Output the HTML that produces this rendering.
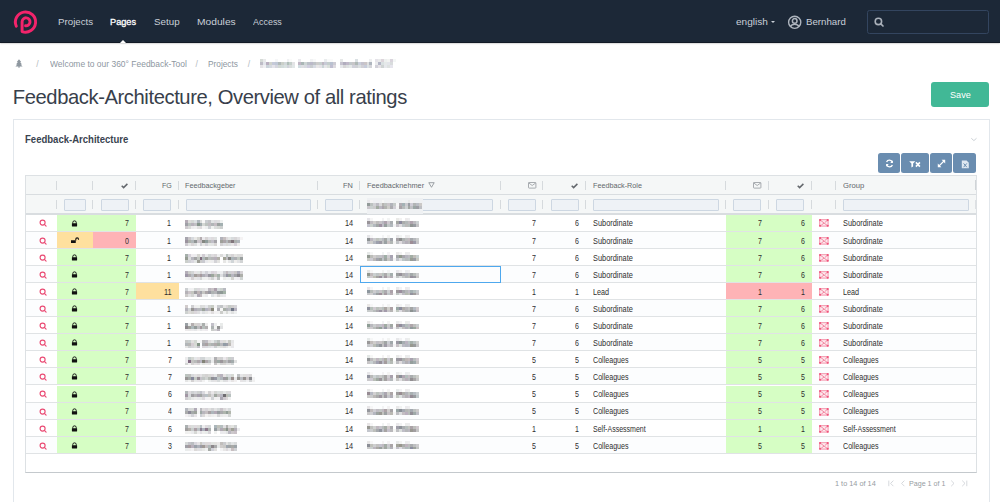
<!DOCTYPE html>
<html><head><meta charset="utf-8"><title>Feedback-Architecture</title>
<style>
*{box-sizing:border-box;margin:0;padding:0}
html,body{width:1000px;height:502px;overflow:hidden;background:#fff;font-family:"Liberation Sans",sans-serif;}
.a{position:absolute;white-space:nowrap}
.ic{position:absolute;display:block}
.fi{position:absolute;top:199.2px;height:11.4px;background:#eef2f6;border:1px solid #cdd7e2;border-radius:1px}
.sep{position:absolute;width:1px;background:#d6dadd}
.blur{filter:blur(0.85px)}
</style></head><body>

<div class="a" style="left:0;top:0;width:1000px;height:43px;background:#1c2837;border-bottom:1px solid #121a26;box-shadow:0 0.6px 1.6px rgba(0,0,0,0.28)"></div>
<svg class="ic" style="left:0;top:0" width="50" height="42" viewBox="0 0 50 42"><path d="M16.27 26.21A10.1 10.1 0 1 1 22.1 31.61L22.1 21.8A3.95 3.95 0 1 1 25.57 25.72" fill="none" stroke="#f3246b" stroke-width="2.95" stroke-linecap="round" stroke-linejoin="round"/></svg>
<div class="a" style="left:58.40px;top:17.00px;font-size:9.8px;line-height:9.8px;color:#c9cfd7;transform:scaleX(0.9927);transform-origin:0 0;">Projects</div>
<div class="a" style="left:110.24px;top:17.00px;font-size:9.8px;line-height:9.8px;color:#fff;transform:scaleX(0.9387);transform-origin:0 0;-webkit-text-stroke:0.3px #fff;">Pages</div>
<div class="a" style="left:154.06px;top:17.00px;font-size:9.8px;line-height:9.8px;color:#c9cfd7;">Setup</div>
<div class="a" style="left:196.86px;top:17.00px;font-size:9.8px;line-height:9.8px;color:#c9cfd7;transform:scaleX(1.0448);transform-origin:0 0;">Modules</div>
<div class="a" style="left:253.48px;top:17.00px;font-size:9.8px;line-height:9.8px;color:#c9cfd7;transform:scaleX(0.9131);transform-origin:0 0;">Access</div>
<div class="a" style="left:119.6px;top:39.5px;width:0;height:0;border-left:3.5px solid transparent;border-right:3.5px solid transparent;border-bottom:3.6px solid #fff"></div>
<div class="a" style="left:735.77px;top:17.00px;font-size:9.8px;line-height:9.8px;color:#c9cfd7;transform:scaleX(1.0262);transform-origin:0 0;">english</div>
<div class="a" style="left:771px;top:20.6px;width:0;height:0;border-left:2.4px solid transparent;border-right:2.4px solid transparent;border-top:2.6px solid #c9cfd7"></div>
<svg class="ic" style="left:787px;top:15px" width="15" height="15" viewBox="0 0 15 15"><circle cx="7.7" cy="7.3" r="6.1" fill="none" stroke="#aeb5be" stroke-width="1.4"/><circle cx="7.7" cy="5.9" r="2.3" fill="none" stroke="#aeb5be" stroke-width="1.5"/><path d="M3.4 11.6Q4.6 9.2 7.7 9.2Q10.8 9.2 12 11.6" fill="none" stroke="#aeb5be" stroke-width="1.5"/></svg>
<div class="a" style="left:805.90px;top:17.00px;font-size:9.8px;line-height:9.8px;color:#c9cfd7;transform:scaleX(0.9876);transform-origin:0 0;">Bernhard</div>
<div class="a" style="left:867.3px;top:9.5px;width:121.6px;height:24.2px;border:1px solid #33455f;border-radius:2.5px"></div>
<svg class="ic" style="left:873px;top:16px" width="12" height="12" viewBox="0 0 12 12"><circle cx="5.4" cy="5.4" r="3.2" fill="none" stroke="#aab1ba" stroke-width="1.6"/><path d="M7.8 7.8L10 10" stroke="#aab1ba" stroke-width="1.7" stroke-linecap="round"/></svg>
<svg class="ic" style="left:15px;top:59px" width="8" height="9" viewBox="0 0 8 9"><path d="M4 0.3L6.2 3H5.2L7 5.4H5.6L7.6 7.6H4.6V8.8H3.4V7.6H0.4L2.4 5.4H1L2.8 3H1.8Z" fill="#8e979f"/></svg>
<div class="a" style="left:36.30px;top:60.00px;font-size:8.6px;line-height:8.6px;color:#b5bbc0;">/</div>
<div class="a" style="left:49.56px;top:60.00px;font-size:8.6px;line-height:8.6px;color:#8e979f;transform:scaleX(0.9847);transform-origin:0 0;">Welcome to our 360° Feedback-Tool</div>
<div class="a" style="left:195.50px;top:60.00px;font-size:8.6px;line-height:8.6px;color:#b5bbc0;">/</div>
<div class="a" style="left:207.92px;top:60.00px;font-size:8.6px;line-height:8.6px;color:#8e979f;transform:scaleX(0.9648);transform-origin:0 0;">Projects</div>
<div class="a" style="left:247.80px;top:60.00px;font-size:8.6px;line-height:8.6px;color:#b5bbc0;">/</div>
<svg class="ic" style="left:260.00px;top:59.00px;" width="35.40" height="8.85" viewBox="0 0 35.40 8.85" shape-rendering="crispEdges"><rect x="0.0" y="0.0" width="2.95" height="2.95" fill="#d6dbd7"/><rect x="2.9" y="0.0" width="2.95" height="2.95" fill="#e9eaeb"/><rect x="14.8" y="0.0" width="2.95" height="2.95" fill="#f6f7f8"/><rect x="26.6" y="0.0" width="2.95" height="2.95" fill="#f0f1f3"/><rect x="29.5" y="0.0" width="2.95" height="2.95" fill="#fafbfa"/><rect x="0.0" y="3.0" width="2.95" height="2.95" fill="#bebdc7"/><rect x="2.9" y="3.0" width="2.95" height="2.95" fill="#e3e5eb"/><rect x="5.9" y="3.0" width="2.95" height="2.95" fill="#b8aebe"/><rect x="8.9" y="3.0" width="2.95" height="2.95" fill="#d0d3cd"/><rect x="11.8" y="3.0" width="2.95" height="2.95" fill="#c5c9d9"/><rect x="14.8" y="3.0" width="2.95" height="2.95" fill="#c0c8d6"/><rect x="17.7" y="3.0" width="2.95" height="2.95" fill="#b1b9b9"/><rect x="20.6" y="3.0" width="2.95" height="2.95" fill="#cacfc8"/><rect x="23.6" y="3.0" width="2.95" height="2.95" fill="#d1d7d9"/><rect x="26.6" y="3.0" width="2.95" height="2.95" fill="#afbeb7"/><rect x="29.5" y="3.0" width="2.95" height="2.95" fill="#c5cfcb"/><rect x="32.4" y="3.0" width="2.95" height="2.95" fill="#e3e3e5"/><rect x="0.0" y="5.9" width="2.95" height="2.95" fill="#e5e3e6"/><rect x="2.9" y="5.9" width="2.95" height="2.95" fill="#f0eff2"/><rect x="5.9" y="5.9" width="2.95" height="2.95" fill="#cbd4da"/><rect x="8.9" y="5.9" width="2.95" height="2.95" fill="#d4d9e0"/><rect x="11.8" y="5.9" width="2.95" height="2.95" fill="#e4e3e9"/><rect x="14.8" y="5.9" width="2.95" height="2.95" fill="#d5d6df"/><rect x="17.7" y="5.9" width="2.95" height="2.95" fill="#d1d8d3"/><rect x="20.6" y="5.9" width="2.95" height="2.95" fill="#d2dbdb"/><rect x="23.6" y="5.9" width="2.95" height="2.95" fill="#d8e1df"/><rect x="26.6" y="5.9" width="2.95" height="2.95" fill="#d0d2da"/><rect x="29.5" y="5.9" width="2.95" height="2.95" fill="#d9dcdc"/><rect x="32.4" y="5.9" width="2.95" height="2.95" fill="#e1e7e7"/></svg>
<svg class="ic" style="left:298.35px;top:59.00px;" width="38.35" height="8.85" viewBox="0 0 38.35 8.85" shape-rendering="crispEdges"><rect x="0.0" y="0.0" width="2.95" height="2.95" fill="#ebeaee"/><rect x="11.8" y="0.0" width="2.95" height="2.95" fill="#f1f2f3"/><rect x="14.8" y="0.0" width="2.95" height="2.95" fill="#f8f9f9"/><rect x="26.5" y="0.0" width="2.95" height="2.95" fill="#eaedee"/><rect x="29.5" y="0.0" width="2.95" height="2.95" fill="#f9fafa"/><rect x="32.4" y="0.0" width="2.95" height="2.95" fill="#fafafa"/><rect x="0.0" y="3.0" width="2.95" height="2.95" fill="#c0b5c4"/><rect x="2.9" y="3.0" width="2.95" height="2.95" fill="#aab6b6"/><rect x="5.9" y="3.0" width="2.95" height="2.95" fill="#ccd4d4"/><rect x="8.8" y="3.0" width="2.95" height="2.95" fill="#babfc7"/><rect x="11.8" y="3.0" width="2.95" height="2.95" fill="#bab9c8"/><rect x="14.8" y="3.0" width="2.95" height="2.95" fill="#bec2c6"/><rect x="17.7" y="3.0" width="2.95" height="2.95" fill="#cccccb"/><rect x="20.6" y="3.0" width="2.95" height="2.95" fill="#c7cfcd"/><rect x="23.6" y="3.0" width="2.95" height="2.95" fill="#beb7c2"/><rect x="26.5" y="3.0" width="2.95" height="2.95" fill="#c8cbd6"/><rect x="29.5" y="3.0" width="2.95" height="2.95" fill="#c3cdcc"/><rect x="32.4" y="3.0" width="2.95" height="2.95" fill="#b9c1d0"/><rect x="35.4" y="3.0" width="2.95" height="2.95" fill="#cdcbd3"/><rect x="0.0" y="5.9" width="2.95" height="2.95" fill="#d2dee2"/><rect x="2.9" y="5.9" width="2.95" height="2.95" fill="#dddde2"/><rect x="5.9" y="5.9" width="2.95" height="2.95" fill="#d7dae0"/><rect x="8.8" y="5.9" width="2.95" height="2.95" fill="#d0cedf"/><rect x="11.8" y="5.9" width="2.95" height="2.95" fill="#c9cdd0"/><rect x="14.8" y="5.9" width="2.95" height="2.95" fill="#d7dbe3"/><rect x="17.7" y="5.9" width="2.95" height="2.95" fill="#e8e7e7"/><rect x="20.6" y="5.9" width="2.95" height="2.95" fill="#e4e2e7"/><rect x="23.6" y="5.9" width="2.95" height="2.95" fill="#cad5d6"/><rect x="26.5" y="5.9" width="2.95" height="2.95" fill="#e5e6e8"/><rect x="29.5" y="5.9" width="2.95" height="2.95" fill="#dae0db"/><rect x="32.4" y="5.9" width="2.95" height="2.95" fill="#c0bed0"/><rect x="35.4" y="5.9" width="2.95" height="2.95" fill="#dedbe1"/></svg>
<svg class="ic" style="left:339.65px;top:59.00px;" width="32.45" height="8.85" viewBox="0 0 32.45 8.85" shape-rendering="crispEdges"><rect x="0.0" y="0.0" width="2.95" height="2.95" fill="#e6e8e8"/><rect x="14.8" y="0.0" width="2.95" height="2.95" fill="#dbe1e4"/><rect x="29.5" y="0.0" width="2.95" height="2.95" fill="#eeeff0"/><rect x="0.0" y="3.0" width="2.95" height="2.95" fill="#c6c3cf"/><rect x="3.0" y="3.0" width="2.95" height="2.95" fill="#b1adbe"/><rect x="5.9" y="3.0" width="2.95" height="2.95" fill="#bfb8c8"/><rect x="8.9" y="3.0" width="2.95" height="2.95" fill="#c2c8cb"/><rect x="11.8" y="3.0" width="2.95" height="2.95" fill="#c7c6c8"/><rect x="14.8" y="3.0" width="2.95" height="2.95" fill="#aeb8b5"/><rect x="17.7" y="3.0" width="2.95" height="2.95" fill="#cacfdb"/><rect x="20.7" y="3.0" width="2.95" height="2.95" fill="#c4c2cd"/><rect x="23.6" y="3.0" width="2.95" height="2.95" fill="#cac5c7"/><rect x="26.6" y="3.0" width="2.95" height="2.95" fill="#dedfe0"/><rect x="29.5" y="3.0" width="2.95" height="2.95" fill="#afb6bf"/><rect x="0.0" y="5.9" width="2.95" height="2.95" fill="#e5e7ea"/><rect x="3.0" y="5.9" width="2.95" height="2.95" fill="#d7d6d7"/><rect x="5.9" y="5.9" width="2.95" height="2.95" fill="#dde0e1"/><rect x="8.9" y="5.9" width="2.95" height="2.95" fill="#e4e8e7"/><rect x="11.8" y="5.9" width="2.95" height="2.95" fill="#d0d1da"/><rect x="14.8" y="5.9" width="2.95" height="2.95" fill="#cfd1d6"/><rect x="17.7" y="5.9" width="2.95" height="2.95" fill="#dadfdf"/><rect x="20.7" y="5.9" width="2.95" height="2.95" fill="#d1d0d6"/><rect x="23.6" y="5.9" width="2.95" height="2.95" fill="#c7ccdb"/><rect x="26.6" y="5.9" width="2.95" height="2.95" fill="#dce2e4"/><rect x="29.5" y="5.9" width="2.95" height="2.95" fill="#d5d5da"/></svg>
<svg class="ic" style="left:375.05px;top:59.00px;" width="20.65" height="8.85" viewBox="0 0 20.65 8.85" shape-rendering="crispEdges"><rect x="0.0" y="0.0" width="2.95" height="2.95" fill="#e5e3e9"/><rect x="2.9" y="0.0" width="2.95" height="2.95" fill="#eaebeb"/><rect x="5.9" y="0.0" width="2.95" height="2.95" fill="#ddd5db"/><rect x="8.8" y="0.0" width="2.95" height="2.95" fill="#edf0ef"/><rect x="11.8" y="0.0" width="2.95" height="2.95" fill="#f3f4f2"/><rect x="14.8" y="0.0" width="2.95" height="2.95" fill="#d9d4dc"/><rect x="17.7" y="0.0" width="2.95" height="2.95" fill="#f4f7f6"/><rect x="0.0" y="3.0" width="2.95" height="2.95" fill="#eaebed"/><rect x="2.9" y="3.0" width="2.95" height="2.95" fill="#b4b6c6"/><rect x="5.9" y="3.0" width="2.95" height="2.95" fill="#dae1e2"/><rect x="8.8" y="3.0" width="2.95" height="2.95" fill="#e5e9e9"/><rect x="11.8" y="3.0" width="2.95" height="2.95" fill="#e3e5ea"/><rect x="14.8" y="3.0" width="2.95" height="2.95" fill="#d9dcdd"/><rect x="0.0" y="5.9" width="2.95" height="2.95" fill="#d2d1d9"/><rect x="2.9" y="5.9" width="2.95" height="2.95" fill="#e5e2e6"/><rect x="5.9" y="5.9" width="2.95" height="2.95" fill="#cfd4d3"/><rect x="8.8" y="5.9" width="2.95" height="2.95" fill="#e6e8ec"/><rect x="11.8" y="5.9" width="2.95" height="2.95" fill="#dee2e1"/><rect x="14.8" y="5.9" width="2.95" height="2.95" fill="#e6e5ed"/></svg>
<div class="a" style="left:12.8px;top:86px;font-size:20.2px;letter-spacing:-0.41px;line-height:22px;color:#38404b">Feedback-Architecture, Overview of all ratings</div>
<div class="a" style="left:931.2px;top:82.2px;width:57.8px;height:24.4px;background:#41b896;border-radius:3px"></div>
<div class="a" style="left:949.59px;top:90.00px;font-size:9.9px;line-height:9.9px;color:#fff;transform:scaleX(0.9225);transform-origin:0 0;">Save</div>
<div class="a" style="left:12.9px;top:119px;width:977px;height:400px;border:1px solid #e2e7ec;background:#fff"></div>
<div class="a" style="left:24.96px;top:135.00px;font-size:10.0px;line-height:10.0px;color:#3a4450;font-weight:bold;transform:scaleX(0.9539);transform-origin:0 0;">Feedback-Architecture</div>
<svg class="ic" style="left:970px;top:136px" width="8" height="6" viewBox="0 0 8 6"><path d="M1.3 2.3L3.9 4.6L6.5 2.3" fill="none" stroke="#c3c9cf" stroke-width="0.85"/></svg>
<div class="a" style="left:877.9px;top:153.2px;width:22.2px;height:19.7px;background:#6a8db0;border-radius:2.5px"></div>
<div class="a" style="left:901.3px;top:153.2px;width:27.5px;height:19.7px;background:#6a8db0;border-radius:2.5px"></div>
<div class="a" style="left:930px;top:153.2px;width:21.9px;height:19.7px;background:#6a8db0;border-radius:2.5px"></div>
<div class="a" style="left:953.1px;top:153.2px;width:23px;height:19.7px;background:#6a8db0;border-radius:2.5px"></div>
<svg class="ic" style="left:884.5px;top:158.8px" width="9" height="9" viewBox="0 0 9 9"><path d="M7.3 3.4A3 3 0 0 0 1.6 3.0M1.7 5.6A3 3 0 0 0 7.4 6.0" fill="none" stroke="#fff" stroke-width="1.3"/><path d="M7.9 1.2V3.9H5.2Z M1.1 7.8V5.1H3.8Z" fill="#fff"/></svg>
<svg class="ic" style="left:909px;top:160.5px" width="12" height="7" viewBox="0 0 12 7"><path d="M0.2 0.3H6.3L4.1 2.6V5.6L2.4 6.4V2.6Z" fill="#fff"/><path d="M6.9 1.4L10.9 5.6M10.9 1.4L6.9 5.6" stroke="#fff" stroke-width="1.6"/></svg>
<svg class="ic" style="left:936.5px;top:158.5px" width="9" height="9" viewBox="0 0 9 9"><path d="M1.5 7.5L7.5 1.5" stroke="#fff" stroke-width="1.1"/><path d="M0.8 4.6V8.2H4.4Z M8.2 4.4V0.8H4.6Z" fill="#fff"/></svg>
<svg class="ic" style="left:960.5px;top:159.5px" width="9" height="9" viewBox="0 0 9 9"><path d="M0.8 0.6H5.6L7.8 2.8V8.2H0.8Z" fill="#dfe8f1"/><path d="M2.6 3.4L5.8 7.2M5.8 3.4L2.6 7.2" stroke="#6a8db0" stroke-width="1"/></svg>
<div class="a" style="left:25.1px;top:174.5px;width:951.70px;height:298.40px;border:1.1px solid #dde1e4;border-bottom:1.3px solid #c4c9cd;background:#fff"></div>
<div class="a" style="left:26.30px;top:175.70px;width:949.30px;height:37.90px;background:#f5f7f7"></div>
<div class="a" style="left:26.10px;top:193.6px;width:949.70px;height:1px;background:#d9dde0"></div>
<div class="a" style="left:26.10px;top:213.1px;width:949.70px;height:1.5px;background:#d9dde0"></div>
<div class="sep" style="left:56.1px;top:180.5px;height:9.1px"></div>
<div class="sep" style="left:56.1px;top:200px;height:9px"></div>
<div class="sep" style="left:92.1px;top:180.5px;height:9.1px"></div>
<div class="sep" style="left:92.1px;top:200px;height:9px"></div>
<div class="sep" style="left:135.1px;top:180.5px;height:9.1px"></div>
<div class="sep" style="left:135.1px;top:200px;height:9px"></div>
<div class="sep" style="left:178.1px;top:180.5px;height:9.1px"></div>
<div class="sep" style="left:178.1px;top:200px;height:9px"></div>
<div class="sep" style="left:317.1px;top:180.5px;height:9.1px"></div>
<div class="sep" style="left:317.1px;top:200px;height:9px"></div>
<div class="sep" style="left:359.1px;top:180.5px;height:9.1px"></div>
<div class="sep" style="left:359.1px;top:200px;height:9px"></div>
<div class="sep" style="left:500.1px;top:180.5px;height:9.1px"></div>
<div class="sep" style="left:500.1px;top:200px;height:9px"></div>
<div class="sep" style="left:542.1px;top:180.5px;height:9.1px"></div>
<div class="sep" style="left:542.1px;top:200px;height:9px"></div>
<div class="sep" style="left:585.1px;top:180.5px;height:9.1px"></div>
<div class="sep" style="left:585.1px;top:200px;height:9px"></div>
<div class="sep" style="left:725.1px;top:180.5px;height:9.1px"></div>
<div class="sep" style="left:725.1px;top:200px;height:9px"></div>
<div class="sep" style="left:768.1px;top:180.5px;height:9.1px"></div>
<div class="sep" style="left:768.1px;top:200px;height:9px"></div>
<div class="sep" style="left:811.1px;top:180.5px;height:9.1px"></div>
<div class="sep" style="left:811.1px;top:200px;height:9px"></div>
<div class="sep" style="left:835.1px;top:180.5px;height:9.1px"></div>
<div class="sep" style="left:835.1px;top:200px;height:9px"></div>
<div class="sep" style="left:975px;top:180px;height:9.6px;width:1.3px;background:#d0d4d7"></div>
<div class="sep" style="left:975px;top:199.5px;height:9.6px;width:1.3px;background:#dde0e3"></div>
<svg class="ic" style="left:121.4px;top:183.0px" width="8" height="6" viewBox="0 0 8 6"><path d="M0.7 2.8L2.6 4.6L6.4 0.9" fill="none" stroke="#64686d" stroke-width="1.5"/></svg>
<div class="a" style="left:161.82px;top:182.00px;font-size:7.8px;line-height:7.8px;color:#63676c;transform:scaleX(0.9068);transform-origin:0 0;">FG</div>
<div class="a" style="left:185.15px;top:182.00px;font-size:7.8px;line-height:7.8px;color:#63676c;transform:scaleX(0.9308);transform-origin:0 0;">Feedbackgeber</div>
<div class="a" style="left:343.29px;top:182.00px;font-size:7.8px;line-height:7.8px;color:#63676c;transform:scaleX(0.9444);transform-origin:0 0;">FN</div>
<div class="a" style="left:366.99px;top:182.00px;font-size:7.8px;line-height:7.8px;color:#63676c;transform:scaleX(0.9409);transform-origin:0 0;">Feedbacknehmer</div>
<svg class="ic" style="left:428.3px;top:181.8px" width="7" height="6" viewBox="0 0 7 6"><path d="M0.8 0.7H6.2L3.5 5.3Z" fill="none" stroke="#8d9196" stroke-width="0.85"/></svg>
<svg class="ic" style="left:527.6px;top:181.6px" width="9" height="7" viewBox="0 0 9 7"><rect x="0.5" y="0.5" width="7.4" height="5.6" rx="0.6" fill="none" stroke="#9a9ea3" stroke-width="0.85"/><path d="M0.6 0.9L4.2 3.5L7.8 0.9" fill="none" stroke="#9a9ea3" stroke-width="0.85"/></svg>
<svg class="ic" style="left:571.4px;top:183.0px" width="8" height="6" viewBox="0 0 8 6"><path d="M0.7 2.8L2.6 4.6L6.4 0.9" fill="none" stroke="#64686d" stroke-width="1.5"/></svg>
<div class="a" style="left:592.65px;top:182.00px;font-size:7.8px;line-height:7.8px;color:#63676c;transform:scaleX(0.9247);transform-origin:0 0;">Feedback-Role</div>
<svg class="ic" style="left:753.1px;top:181.6px" width="9" height="7" viewBox="0 0 9 7"><rect x="0.5" y="0.5" width="7.4" height="5.6" rx="0.6" fill="none" stroke="#9a9ea3" stroke-width="0.85"/><path d="M0.6 0.9L4.2 3.5L7.8 0.9" fill="none" stroke="#9a9ea3" stroke-width="0.85"/></svg>
<svg class="ic" style="left:796.8px;top:183.0px" width="8" height="6" viewBox="0 0 8 6"><path d="M0.7 2.8L2.6 4.6L6.4 0.9" fill="none" stroke="#64686d" stroke-width="1.5"/></svg>
<div class="a" style="left:842.62px;top:182.00px;font-size:7.8px;line-height:7.8px;color:#63676c;transform:scaleX(0.9827);transform-origin:0 0;">Group</div>
<div class="fi" style="left:64.25px;width:21.5px"></div>
<div class="fi" style="left:100.5px;width:28.25px"></div>
<div class="fi" style="left:143.25px;width:28.0px"></div>
<div class="fi" style="left:186.25px;width:124.25px"></div>
<div class="fi" style="left:325px;width:28px"></div>
<div class="fi" style="left:367px;width:126.25px"></div>
<div class="fi" style="left:508.25px;width:27.5px"></div>
<div class="fi" style="left:550.5px;width:28.25px"></div>
<div class="fi" style="left:593.25px;width:125.5px"></div>
<div class="fi" style="left:733.25px;width:28.0px"></div>
<div class="fi" style="left:776.25px;width:27.5px"></div>
<div class="fi" style="left:843.25px;width:125.5px"></div>
<div class="a" style="left:366.5px;top:198.2px;width:56px;height:15.6px;background:#eff1f3"></div>
<svg class="ic" style="left:367.20px;top:200.00px;" width="55.10" height="8.70" viewBox="0 0 55.10 8.70" shape-rendering="crispEdges"><rect x="0.0" y="0.0" width="2.9" height="2.9" fill="#e9e8eb"/><rect x="2.9" y="0.0" width="2.9" height="2.9" fill="#f4f4f4"/><rect x="14.5" y="0.0" width="2.9" height="2.9" fill="#f6f7f6"/><rect x="23.2" y="0.0" width="2.9" height="2.9" fill="#f4f4f5"/><rect x="34.8" y="0.0" width="2.9" height="2.9" fill="#f2f3f3"/><rect x="40.6" y="0.0" width="2.9" height="2.9" fill="#e8e9e9"/><rect x="43.5" y="0.0" width="2.9" height="2.9" fill="#f4f2f4"/><rect x="0.0" y="2.9" width="2.9" height="2.9" fill="#939b99"/><rect x="2.9" y="2.9" width="2.9" height="2.9" fill="#bcc2c0"/><rect x="5.8" y="2.9" width="2.9" height="2.9" fill="#d1d2d5"/><rect x="8.7" y="2.9" width="2.9" height="2.9" fill="#bdbcc3"/><rect x="11.6" y="2.9" width="2.9" height="2.9" fill="#d9dadb"/><rect x="14.5" y="2.9" width="2.9" height="2.9" fill="#b6b5b2"/><rect x="17.4" y="2.9" width="2.9" height="2.9" fill="#bfc3c1"/><rect x="20.3" y="2.9" width="2.9" height="2.9" fill="#cac6ca"/><rect x="23.2" y="2.9" width="2.9" height="2.9" fill="#b1b3ba"/><rect x="26.1" y="2.9" width="2.9" height="2.9" fill="#c6cbc9"/><rect x="29.0" y="2.9" width="2.9" height="2.9" fill="#f7f7f8"/><rect x="31.9" y="2.9" width="2.9" height="2.9" fill="#b2aeb4"/><rect x="34.8" y="2.9" width="2.9" height="2.9" fill="#a4b3b6"/><rect x="37.7" y="2.9" width="2.9" height="2.9" fill="#cccbcf"/><rect x="40.6" y="2.9" width="2.9" height="2.9" fill="#9b9fa6"/><rect x="43.5" y="2.9" width="2.9" height="2.9" fill="#cfcdd6"/><rect x="46.4" y="2.9" width="2.9" height="2.9" fill="#b2b5b5"/><rect x="49.3" y="2.9" width="2.9" height="2.9" fill="#babdc4"/><rect x="52.2" y="2.9" width="2.9" height="2.9" fill="#cbc9c7"/><rect x="0.0" y="5.8" width="2.9" height="2.9" fill="#cac6cb"/><rect x="2.9" y="5.8" width="2.9" height="2.9" fill="#cad0cf"/><rect x="5.8" y="5.8" width="2.9" height="2.9" fill="#cbcbcc"/><rect x="8.7" y="5.8" width="2.9" height="2.9" fill="#a3aca2"/><rect x="11.6" y="5.8" width="2.9" height="2.9" fill="#bab8c2"/><rect x="14.5" y="5.8" width="2.9" height="2.9" fill="#aaa5ac"/><rect x="17.4" y="5.8" width="2.9" height="2.9" fill="#b2b4b0"/><rect x="20.3" y="5.8" width="2.9" height="2.9" fill="#cdcdc9"/><rect x="23.2" y="5.8" width="2.9" height="2.9" fill="#acacb0"/><rect x="26.1" y="5.8" width="2.9" height="2.9" fill="#d1cfd6"/><rect x="29.0" y="5.8" width="2.9" height="2.9" fill="#f4f4f4"/><rect x="31.9" y="5.8" width="2.9" height="2.9" fill="#a9a3a8"/><rect x="34.8" y="5.8" width="2.9" height="2.9" fill="#b7bbbb"/><rect x="37.7" y="5.8" width="2.9" height="2.9" fill="#ced2d3"/><rect x="40.6" y="5.8" width="2.9" height="2.9" fill="#a3a7a3"/><rect x="43.5" y="5.8" width="2.9" height="2.9" fill="#c1c1c5"/><rect x="46.4" y="5.8" width="2.9" height="2.9" fill="#9ba6a5"/><rect x="49.3" y="5.8" width="2.9" height="2.9" fill="#9e9ea4"/><rect x="52.2" y="5.8" width="2.9" height="2.9" fill="#bdbfc3"/></svg>
<div class="a" style="left:26.30px;top:214.50px;width:949.30px;height:17.1px;background:#fff;border-bottom:1px solid #e0e3e5"></div>
<div class="a" style="left:57px;top:214.50px;width:36px;height:16.10px;background:#d6fec4"></div>
<div class="a" style="left:93px;top:214.50px;width:43px;height:16.10px;background:#d6fec4"></div>
<div class="a" style="left:726px;top:214.50px;width:43px;height:16.10px;background:#d6fec4"></div>
<div class="a" style="left:769px;top:214.50px;width:43px;height:16.10px;background:#d6fec4"></div>
<svg class="ic" style="left:39.1px;top:219.4px" width="9" height="9" viewBox="0 0 9 9"><circle cx="3.6" cy="3.6" r="2.5" fill="none" stroke="#ea4b74" stroke-width="1.15"/><path d="M5.4 5.4L7.1 7.1" stroke="#ea4b74" stroke-width="1.15" stroke-linecap="round"/></svg>
<svg class="ic" style="left:71.2px;top:219.5px" width="7" height="8" viewBox="0 0 7 8"><path d="M1.75 3.6V2.6A1.75 1.75 0 0 1 5.25 2.6V3.6" fill="none" stroke="#111" stroke-width="0.95"/><rect x="0.9" y="3.3" width="5.2" height="3.1" rx="0.3" fill="#111"/></svg>
<div class="a" style="left:124.94px;top:220.00px;font-size:8.2px;line-height:8.2px;color:#2e2e2e;transform:scaleX(0.8600);transform-origin:0 0;">7</div>
<div class="a" style="left:167.12px;top:220.00px;font-size:8.2px;line-height:8.2px;color:#2e2e2e;transform:scaleX(0.8600);transform-origin:0 0;">1</div>
<svg class="ic" style="left:185.00px;top:219.90px;" width="37.70" height="8.70" viewBox="0 0 37.70 8.70" shape-rendering="crispEdges"><rect x="0.0" y="0.0" width="2.9" height="2.9" fill="#b4abb5"/><rect x="2.9" y="0.0" width="2.9" height="2.9" fill="#dddcdb"/><rect x="5.8" y="0.0" width="2.9" height="2.9" fill="#d4d8d5"/><rect x="8.7" y="0.0" width="2.9" height="2.9" fill="#dde1e3"/><rect x="11.6" y="0.0" width="2.9" height="2.9" fill="#b0b7bd"/><rect x="14.5" y="0.0" width="2.9" height="2.9" fill="#dbdcdb"/><rect x="17.4" y="0.0" width="2.9" height="2.9" fill="#f8f7f7"/><rect x="20.3" y="0.0" width="2.9" height="2.9" fill="#cbcdd1"/><rect x="23.2" y="0.0" width="2.9" height="2.9" fill="#c3c4c7"/><rect x="26.1" y="0.0" width="2.9" height="2.9" fill="#e3e4e5"/><rect x="29.0" y="0.0" width="2.9" height="2.9" fill="#dddcdf"/><rect x="31.9" y="0.0" width="2.9" height="2.9" fill="#e0dfe1"/><rect x="34.8" y="0.0" width="2.9" height="2.9" fill="#eff1f0"/><rect x="0.0" y="2.9" width="2.9" height="2.9" fill="#a0a0a7"/><rect x="2.9" y="2.9" width="2.9" height="2.9" fill="#b9c1bd"/><rect x="5.8" y="2.9" width="2.9" height="2.9" fill="#b8b3bc"/><rect x="8.7" y="2.9" width="2.9" height="2.9" fill="#c1c0c4"/><rect x="11.6" y="2.9" width="2.9" height="2.9" fill="#85958b"/><rect x="14.5" y="2.9" width="2.9" height="2.9" fill="#a1abae"/><rect x="17.4" y="2.9" width="2.9" height="2.9" fill="#d4d7d4"/><rect x="20.3" y="2.9" width="2.9" height="2.9" fill="#bdc2bf"/><rect x="23.2" y="2.9" width="2.9" height="2.9" fill="#c1bbc0"/><rect x="26.1" y="2.9" width="2.9" height="2.9" fill="#b1b5b7"/><rect x="29.0" y="2.9" width="2.9" height="2.9" fill="#c5bdc3"/><rect x="31.9" y="2.9" width="2.9" height="2.9" fill="#9ca2a0"/><rect x="34.8" y="2.9" width="2.9" height="2.9" fill="#a3b0b1"/><rect x="0.0" y="5.8" width="2.9" height="2.9" fill="#cfcbcf"/><rect x="2.9" y="5.8" width="2.9" height="2.9" fill="#d9dad9"/><rect x="5.8" y="5.8" width="2.9" height="2.9" fill="#eeedee"/><rect x="8.7" y="5.8" width="2.9" height="2.9" fill="#f0f1f1"/><rect x="11.6" y="5.8" width="2.9" height="2.9" fill="#e3e2e2"/><rect x="14.5" y="5.8" width="2.9" height="2.9" fill="#dedadc"/><rect x="17.4" y="5.8" width="2.9" height="2.9" fill="#f6f5f5"/><rect x="20.3" y="5.8" width="2.9" height="2.9" fill="#eeeff0"/><rect x="23.2" y="5.8" width="2.9" height="2.9" fill="#ced1d5"/><rect x="26.1" y="5.8" width="2.9" height="2.9" fill="#f1f1f0"/><rect x="29.0" y="5.8" width="2.9" height="2.9" fill="#dcdedd"/><rect x="31.9" y="5.8" width="2.9" height="2.9" fill="#d7d9d6"/><rect x="34.8" y="5.8" width="2.9" height="2.9" fill="#cdd0cf"/></svg>
<div class="a" style="left:345.01px;top:220.00px;font-size:8.2px;line-height:8.2px;color:#2e2e2e;transform:scaleX(0.9000);transform-origin:0 0;">14</div>
<svg class="ic" style="left:367.20px;top:218.20px;" width="52.20" height="8.70" viewBox="0 0 52.20 8.70" shape-rendering="crispEdges"><rect x="0.0" y="0.0" width="2.9" height="2.9" fill="#e6e5e9"/><rect x="2.9" y="0.0" width="2.9" height="2.9" fill="#f6f6f6"/><rect x="14.5" y="0.0" width="2.9" height="2.9" fill="#f3f3f4"/><rect x="20.3" y="0.0" width="2.9" height="2.9" fill="#f3f4f4"/><rect x="29.0" y="0.0" width="2.9" height="2.9" fill="#eaeae8"/><rect x="31.9" y="0.0" width="2.9" height="2.9" fill="#f3f2f2"/><rect x="37.7" y="0.0" width="2.9" height="2.9" fill="#edebec"/><rect x="40.6" y="0.0" width="2.9" height="2.9" fill="#eeeef0"/><rect x="0.0" y="2.9" width="2.9" height="2.9" fill="#999499"/><rect x="2.9" y="2.9" width="2.9" height="2.9" fill="#c0bcc1"/><rect x="5.8" y="2.9" width="2.9" height="2.9" fill="#d0cecc"/><rect x="8.7" y="2.9" width="2.9" height="2.9" fill="#bdbbbb"/><rect x="11.6" y="2.9" width="2.9" height="2.9" fill="#c6c3c7"/><rect x="14.5" y="2.9" width="2.9" height="2.9" fill="#b9b8c0"/><rect x="17.4" y="2.9" width="2.9" height="2.9" fill="#ada2ad"/><rect x="20.3" y="2.9" width="2.9" height="2.9" fill="#cec9cf"/><rect x="23.2" y="2.9" width="2.9" height="2.9" fill="#aaaeb1"/><rect x="29.0" y="2.9" width="2.9" height="2.9" fill="#a4a6a2"/><rect x="31.9" y="2.9" width="2.9" height="2.9" fill="#8c8a9e"/><rect x="34.8" y="2.9" width="2.9" height="2.9" fill="#abacab"/><rect x="37.7" y="2.9" width="2.9" height="2.9" fill="#b3b8b8"/><rect x="40.6" y="2.9" width="2.9" height="2.9" fill="#bfbbbf"/><rect x="43.5" y="2.9" width="2.9" height="2.9" fill="#afa3ae"/><rect x="46.4" y="2.9" width="2.9" height="2.9" fill="#bdbbbf"/><rect x="49.3" y="2.9" width="2.9" height="2.9" fill="#ccd1d2"/><rect x="0.0" y="5.8" width="2.9" height="2.9" fill="#c2c2cc"/><rect x="2.9" y="5.8" width="2.9" height="2.9" fill="#c9d0cc"/><rect x="5.8" y="5.8" width="2.9" height="2.9" fill="#b4b9bf"/><rect x="8.7" y="5.8" width="2.9" height="2.9" fill="#a3a7a6"/><rect x="11.6" y="5.8" width="2.9" height="2.9" fill="#9f92a2"/><rect x="14.5" y="5.8" width="2.9" height="2.9" fill="#c0bdc7"/><rect x="17.4" y="5.8" width="2.9" height="2.9" fill="#98a09f"/><rect x="20.3" y="5.8" width="2.9" height="2.9" fill="#c2c7c7"/><rect x="23.2" y="5.8" width="2.9" height="2.9" fill="#b2b8bd"/><rect x="26.1" y="5.8" width="2.9" height="2.9" fill="#f3f3f4"/><rect x="29.0" y="5.8" width="2.9" height="2.9" fill="#c7c2c9"/><rect x="31.9" y="5.8" width="2.9" height="2.9" fill="#e0dee0"/><rect x="34.8" y="5.8" width="2.9" height="2.9" fill="#bdc4c6"/><rect x="37.7" y="5.8" width="2.9" height="2.9" fill="#bbbab9"/><rect x="40.6" y="5.8" width="2.9" height="2.9" fill="#b6bdbb"/><rect x="43.5" y="5.8" width="2.9" height="2.9" fill="#919693"/><rect x="46.4" y="5.8" width="2.9" height="2.9" fill="#999da3"/><rect x="49.3" y="5.8" width="2.9" height="2.9" fill="#c4c3c5"/></svg>
<div class="a" style="left:531.84px;top:220.00px;font-size:8.2px;line-height:8.2px;color:#2e2e2e;transform:scaleX(0.8600);transform-origin:0 0;">7</div>
<div class="a" style="left:574.69px;top:220.00px;font-size:8.2px;line-height:8.2px;color:#2e2e2e;transform:scaleX(0.8600);transform-origin:0 0;">6</div>
<div class="a" style="left:592.57px;top:220.00px;font-size:8.2px;line-height:8.2px;color:#2e2e2e;transform:scaleX(0.9011);transform-origin:0 0;">Subordinate</div>
<div class="a" style="left:757.84px;top:220.00px;font-size:8.2px;line-height:8.2px;color:#2e2e2e;transform:scaleX(0.8600);transform-origin:0 0;">7</div>
<div class="a" style="left:800.69px;top:220.00px;font-size:8.2px;line-height:8.2px;color:#2e2e2e;transform:scaleX(0.8600);transform-origin:0 0;">6</div>
<svg class="ic" style="left:818.5px;top:219.4px" width="10" height="8" viewBox="0 0 10 8"><rect x="0.7" y="0.7" width="8.4" height="6.4" fill="#fde9ee" stroke="#f28aa2" stroke-width="0.9"/><path d="M1.5 1.3L8.3 6.5M2.2 6.2L5.2 3.9M6 3.4L8 1.6" fill="none" stroke="#f07e98" stroke-width="0.9"/><circle cx="1.1" cy="1.1" r="1.05" fill="#f0557c"/><circle cx="8.7" cy="1.1" r="1.05" fill="#f0557c"/><circle cx="1.1" cy="6.7" r="1.05" fill="#f0557c"/><circle cx="8.7" cy="6.7" r="1.05" fill="#f0557c"/></svg>
<div class="a" style="left:842.57px;top:220.00px;font-size:8.2px;line-height:8.2px;color:#2e2e2e;transform:scaleX(0.9011);transform-origin:0 0;">Subordinate</div>
<div class="a" style="left:26.30px;top:231.60px;width:949.30px;height:17.1px;background:#fcfdfe;border-bottom:1px solid #e0e3e5"></div>
<div class="a" style="left:57px;top:231.60px;width:36px;height:16.10px;background:#fee09e"></div>
<div class="a" style="left:93px;top:231.60px;width:43px;height:16.10px;background:#feb3b6"></div>
<div class="a" style="left:726px;top:231.60px;width:43px;height:16.10px;background:#d6fec4"></div>
<div class="a" style="left:769px;top:231.60px;width:43px;height:16.10px;background:#d6fec4"></div>
<svg class="ic" style="left:39.1px;top:236.5px" width="9" height="9" viewBox="0 0 9 9"><circle cx="3.6" cy="3.6" r="2.5" fill="none" stroke="#ea4b74" stroke-width="1.15"/><path d="M5.4 5.4L7.1 7.1" stroke="#ea4b74" stroke-width="1.15" stroke-linecap="round"/></svg>
<svg class="ic" style="left:71.2px;top:236.6px" width="9" height="8" viewBox="0 0 9 8"><path d="M4.8 3.6V2.2a1.35 1.35 0 0 1 2.7 0v0.5" fill="none" stroke="#111" stroke-width="1.1"/><rect x="-0.2" y="3.2" width="5" height="2.7" rx="0.3" fill="#111"/></svg>
<div class="a" style="left:124.85px;top:238.00px;font-size:8.2px;line-height:8.2px;color:#2e2e2e;transform:scaleX(0.8600);transform-origin:0 0;">0</div>
<div class="a" style="left:167.12px;top:238.00px;font-size:8.2px;line-height:8.2px;color:#2e2e2e;transform:scaleX(0.8600);transform-origin:0 0;">1</div>
<svg class="ic" style="left:185.00px;top:237.00px;" width="58.00" height="8.70" viewBox="0 0 58.00 8.70" shape-rendering="crispEdges"><rect x="0.0" y="0.0" width="2.9" height="2.9" fill="#a7a5ae"/><rect x="2.9" y="0.0" width="2.9" height="2.9" fill="#c8c5c8"/><rect x="5.8" y="0.0" width="2.9" height="2.9" fill="#d6d9dd"/><rect x="8.7" y="0.0" width="2.9" height="2.9" fill="#e8e8e6"/><rect x="11.6" y="0.0" width="2.9" height="2.9" fill="#d5d5d1"/><rect x="14.5" y="0.0" width="2.9" height="2.9" fill="#b4acb0"/><rect x="17.4" y="0.0" width="2.9" height="2.9" fill="#eae9ec"/><rect x="20.3" y="0.0" width="2.9" height="2.9" fill="#d7d4d5"/><rect x="23.2" y="0.0" width="2.9" height="2.9" fill="#e1e1e5"/><rect x="26.1" y="0.0" width="2.9" height="2.9" fill="#dedbde"/><rect x="29.0" y="0.0" width="2.9" height="2.9" fill="#dee1e1"/><rect x="34.8" y="0.0" width="2.9" height="2.9" fill="#b2b2ba"/><rect x="37.7" y="0.0" width="2.9" height="2.9" fill="#c6bfc0"/><rect x="40.6" y="0.0" width="2.9" height="2.9" fill="#dedadc"/><rect x="43.5" y="0.0" width="2.9" height="2.9" fill="#e4e6e5"/><rect x="46.4" y="0.0" width="2.9" height="2.9" fill="#d8dbdd"/><rect x="49.3" y="0.0" width="2.9" height="2.9" fill="#d8d6d8"/><rect x="52.2" y="0.0" width="2.9" height="2.9" fill="#e2e1e3"/><rect x="55.1" y="0.0" width="2.9" height="2.9" fill="#f4f2f3"/><rect x="0.0" y="2.9" width="2.9" height="2.9" fill="#9b939e"/><rect x="2.9" y="2.9" width="2.9" height="2.9" fill="#aeb2ac"/><rect x="5.8" y="2.9" width="2.9" height="2.9" fill="#b1b8ba"/><rect x="8.7" y="2.9" width="2.9" height="2.9" fill="#8f9494"/><rect x="11.6" y="2.9" width="2.9" height="2.9" fill="#cbc5cb"/><rect x="14.5" y="2.9" width="2.9" height="2.9" fill="#c4bdc2"/><rect x="17.4" y="2.9" width="2.9" height="2.9" fill="#838681"/><rect x="20.3" y="2.9" width="2.9" height="2.9" fill="#8e9c9a"/><rect x="23.2" y="2.9" width="2.9" height="2.9" fill="#b7b9b7"/><rect x="26.1" y="2.9" width="2.9" height="2.9" fill="#c1bfc8"/><rect x="29.0" y="2.9" width="2.9" height="2.9" fill="#a5a4a9"/><rect x="34.8" y="2.9" width="2.9" height="2.9" fill="#9e9f99"/><rect x="37.7" y="2.9" width="2.9" height="2.9" fill="#aaa4a8"/><rect x="40.6" y="2.9" width="2.9" height="2.9" fill="#b4b8bb"/><rect x="43.5" y="2.9" width="2.9" height="2.9" fill="#a19d9e"/><rect x="46.4" y="2.9" width="2.9" height="2.9" fill="#80757c"/><rect x="49.3" y="2.9" width="2.9" height="2.9" fill="#abafae"/><rect x="52.2" y="2.9" width="2.9" height="2.9" fill="#b0b6bc"/><rect x="0.0" y="5.8" width="2.9" height="2.9" fill="#cdcacf"/><rect x="2.9" y="5.8" width="2.9" height="2.9" fill="#e5e6e6"/><rect x="5.8" y="5.8" width="2.9" height="2.9" fill="#d8d4d5"/><rect x="8.7" y="5.8" width="2.9" height="2.9" fill="#dbdede"/><rect x="11.6" y="5.8" width="2.9" height="2.9" fill="#f2f2f3"/><rect x="14.5" y="5.8" width="2.9" height="2.9" fill="#cfd1d5"/><rect x="17.4" y="5.8" width="2.9" height="2.9" fill="#e6e6e4"/><rect x="20.3" y="5.8" width="2.9" height="2.9" fill="#d4d3d9"/><rect x="23.2" y="5.8" width="2.9" height="2.9" fill="#e5e8e6"/><rect x="26.1" y="5.8" width="2.9" height="2.9" fill="#e3e5e5"/><rect x="29.0" y="5.8" width="2.9" height="2.9" fill="#d8d6d5"/><rect x="34.8" y="5.8" width="2.9" height="2.9" fill="#d2d1d3"/><rect x="37.7" y="5.8" width="2.9" height="2.9" fill="#dddee3"/><rect x="40.6" y="5.8" width="2.9" height="2.9" fill="#dadad7"/><rect x="43.5" y="5.8" width="2.9" height="2.9" fill="#dcdfe1"/><rect x="46.4" y="5.8" width="2.9" height="2.9" fill="#e7e5e6"/><rect x="49.3" y="5.8" width="2.9" height="2.9" fill="#d5d0d8"/><rect x="52.2" y="5.8" width="2.9" height="2.9" fill="#efeded"/></svg>
<div class="a" style="left:345.01px;top:238.00px;font-size:8.2px;line-height:8.2px;color:#2e2e2e;transform:scaleX(0.9000);transform-origin:0 0;">14</div>
<svg class="ic" style="left:367.20px;top:235.30px;" width="52.20" height="8.70" viewBox="0 0 52.20 8.70" shape-rendering="crispEdges"><rect x="0.0" y="0.0" width="2.9" height="2.9" fill="#e5e5e8"/><rect x="2.9" y="0.0" width="2.9" height="2.9" fill="#f6f6f7"/><rect x="14.5" y="0.0" width="2.9" height="2.9" fill="#f2f3f4"/><rect x="20.3" y="0.0" width="2.9" height="2.9" fill="#f3f3f3"/><rect x="29.0" y="0.0" width="2.9" height="2.9" fill="#e8e8ea"/><rect x="31.9" y="0.0" width="2.9" height="2.9" fill="#f1f3f2"/><rect x="37.7" y="0.0" width="2.9" height="2.9" fill="#edeced"/><rect x="40.6" y="0.0" width="2.9" height="2.9" fill="#eeeeee"/><rect x="0.0" y="2.9" width="2.9" height="2.9" fill="#8d9294"/><rect x="2.9" y="2.9" width="2.9" height="2.9" fill="#bdb8c1"/><rect x="5.8" y="2.9" width="2.9" height="2.9" fill="#cbcccf"/><rect x="8.7" y="2.9" width="2.9" height="2.9" fill="#bec3bd"/><rect x="11.6" y="2.9" width="2.9" height="2.9" fill="#c6caca"/><rect x="14.5" y="2.9" width="2.9" height="2.9" fill="#b9bbc1"/><rect x="17.4" y="2.9" width="2.9" height="2.9" fill="#a4a7a6"/><rect x="20.3" y="2.9" width="2.9" height="2.9" fill="#cbd0d2"/><rect x="23.2" y="2.9" width="2.9" height="2.9" fill="#a1a4ab"/><rect x="29.0" y="2.9" width="2.9" height="2.9" fill="#a5a1a5"/><rect x="31.9" y="2.9" width="2.9" height="2.9" fill="#8d8e8f"/><rect x="34.8" y="2.9" width="2.9" height="2.9" fill="#aeb3b2"/><rect x="37.7" y="2.9" width="2.9" height="2.9" fill="#bcbdbe"/><rect x="40.6" y="2.9" width="2.9" height="2.9" fill="#c3babf"/><rect x="43.5" y="2.9" width="2.9" height="2.9" fill="#a5a8ac"/><rect x="46.4" y="2.9" width="2.9" height="2.9" fill="#b8babe"/><rect x="49.3" y="2.9" width="2.9" height="2.9" fill="#cbcdcd"/><rect x="0.0" y="5.8" width="2.9" height="2.9" fill="#c3c5ca"/><rect x="2.9" y="5.8" width="2.9" height="2.9" fill="#cfcfcc"/><rect x="5.8" y="5.8" width="2.9" height="2.9" fill="#b5b9c0"/><rect x="8.7" y="5.8" width="2.9" height="2.9" fill="#9da0ad"/><rect x="11.6" y="5.8" width="2.9" height="2.9" fill="#9c99a3"/><rect x="14.5" y="5.8" width="2.9" height="2.9" fill="#c0c1c3"/><rect x="17.4" y="5.8" width="2.9" height="2.9" fill="#99a1a3"/><rect x="20.3" y="5.8" width="2.9" height="2.9" fill="#c9c2c3"/><rect x="23.2" y="5.8" width="2.9" height="2.9" fill="#b2b7b5"/><rect x="26.1" y="5.8" width="2.9" height="2.9" fill="#f4f4f4"/><rect x="29.0" y="5.8" width="2.9" height="2.9" fill="#c1c4c7"/><rect x="31.9" y="5.8" width="2.9" height="2.9" fill="#e0dde1"/><rect x="34.8" y="5.8" width="2.9" height="2.9" fill="#bebec4"/><rect x="37.7" y="5.8" width="2.9" height="2.9" fill="#b4b0b9"/><rect x="40.6" y="5.8" width="2.9" height="2.9" fill="#b8b8ba"/><rect x="43.5" y="5.8" width="2.9" height="2.9" fill="#9d8d96"/><rect x="46.4" y="5.8" width="2.9" height="2.9" fill="#9b9aa8"/><rect x="49.3" y="5.8" width="2.9" height="2.9" fill="#c7c7c9"/></svg>
<div class="a" style="left:531.84px;top:238.00px;font-size:8.2px;line-height:8.2px;color:#2e2e2e;transform:scaleX(0.8600);transform-origin:0 0;">7</div>
<div class="a" style="left:574.69px;top:238.00px;font-size:8.2px;line-height:8.2px;color:#2e2e2e;transform:scaleX(0.8600);transform-origin:0 0;">6</div>
<div class="a" style="left:592.57px;top:238.00px;font-size:8.2px;line-height:8.2px;color:#2e2e2e;transform:scaleX(0.9011);transform-origin:0 0;">Subordinate</div>
<div class="a" style="left:757.84px;top:238.00px;font-size:8.2px;line-height:8.2px;color:#2e2e2e;transform:scaleX(0.8600);transform-origin:0 0;">7</div>
<div class="a" style="left:800.69px;top:238.00px;font-size:8.2px;line-height:8.2px;color:#2e2e2e;transform:scaleX(0.8600);transform-origin:0 0;">6</div>
<svg class="ic" style="left:818.5px;top:236.5px" width="10" height="8" viewBox="0 0 10 8"><rect x="0.7" y="0.7" width="8.4" height="6.4" fill="#fde9ee" stroke="#f28aa2" stroke-width="0.9"/><path d="M1.5 1.3L8.3 6.5M2.2 6.2L5.2 3.9M6 3.4L8 1.6" fill="none" stroke="#f07e98" stroke-width="0.9"/><circle cx="1.1" cy="1.1" r="1.05" fill="#f0557c"/><circle cx="8.7" cy="1.1" r="1.05" fill="#f0557c"/><circle cx="1.1" cy="6.7" r="1.05" fill="#f0557c"/><circle cx="8.7" cy="6.7" r="1.05" fill="#f0557c"/></svg>
<div class="a" style="left:842.57px;top:238.00px;font-size:8.2px;line-height:8.2px;color:#2e2e2e;transform:scaleX(0.9011);transform-origin:0 0;">Subordinate</div>
<div class="a" style="left:26.30px;top:248.70px;width:949.30px;height:17.1px;background:#fff;border-bottom:1px solid #e0e3e5"></div>
<div class="a" style="left:57px;top:248.70px;width:36px;height:16.10px;background:#d6fec4"></div>
<div class="a" style="left:93px;top:248.70px;width:43px;height:16.10px;background:#d6fec4"></div>
<div class="a" style="left:726px;top:248.70px;width:43px;height:16.10px;background:#d6fec4"></div>
<div class="a" style="left:769px;top:248.70px;width:43px;height:16.10px;background:#d6fec4"></div>
<svg class="ic" style="left:39.1px;top:253.6px" width="9" height="9" viewBox="0 0 9 9"><circle cx="3.6" cy="3.6" r="2.5" fill="none" stroke="#ea4b74" stroke-width="1.15"/><path d="M5.4 5.4L7.1 7.1" stroke="#ea4b74" stroke-width="1.15" stroke-linecap="round"/></svg>
<svg class="ic" style="left:71.2px;top:253.7px" width="7" height="8" viewBox="0 0 7 8"><path d="M1.75 3.6V2.6A1.75 1.75 0 0 1 5.25 2.6V3.6" fill="none" stroke="#111" stroke-width="0.95"/><rect x="0.9" y="3.3" width="5.2" height="3.1" rx="0.3" fill="#111"/></svg>
<div class="a" style="left:124.94px;top:255.00px;font-size:8.2px;line-height:8.2px;color:#2e2e2e;transform:scaleX(0.8600);transform-origin:0 0;">7</div>
<div class="a" style="left:167.12px;top:255.00px;font-size:8.2px;line-height:8.2px;color:#2e2e2e;transform:scaleX(0.8600);transform-origin:0 0;">1</div>
<svg class="ic" style="left:185.00px;top:254.10px;" width="58.00" height="8.70" viewBox="0 0 58.00 8.70" shape-rendering="crispEdges"><rect x="0.0" y="0.0" width="2.9" height="2.9" fill="#a6b0ab"/><rect x="2.9" y="0.0" width="2.9" height="2.9" fill="#d6d2da"/><rect x="5.8" y="0.0" width="2.9" height="2.9" fill="#efecef"/><rect x="8.7" y="0.0" width="2.9" height="2.9" fill="#ededef"/><rect x="11.6" y="0.0" width="2.9" height="2.9" fill="#d6d6d1"/><rect x="14.5" y="0.0" width="2.9" height="2.9" fill="#eaebeb"/><rect x="17.4" y="0.0" width="2.9" height="2.9" fill="#d1ccd3"/><rect x="20.3" y="0.0" width="2.9" height="2.9" fill="#e9eaeb"/><rect x="23.2" y="0.0" width="2.9" height="2.9" fill="#d2d5d5"/><rect x="26.1" y="0.0" width="2.9" height="2.9" fill="#dfdcdf"/><rect x="29.0" y="0.0" width="2.9" height="2.9" fill="#d9d6d8"/><rect x="31.9" y="0.0" width="2.9" height="2.9" fill="#f0f0f1"/><rect x="34.8" y="0.0" width="2.9" height="2.9" fill="#dbdbda"/><rect x="37.7" y="0.0" width="2.9" height="2.9" fill="#efeff1"/><rect x="40.6" y="0.0" width="2.9" height="2.9" fill="#bac3bf"/><rect x="43.5" y="0.0" width="2.9" height="2.9" fill="#dcdddd"/><rect x="46.4" y="0.0" width="2.9" height="2.9" fill="#d6d3d5"/><rect x="49.3" y="0.0" width="2.9" height="2.9" fill="#e4e4e2"/><rect x="52.2" y="0.0" width="2.9" height="2.9" fill="#dcdcdc"/><rect x="55.1" y="0.0" width="2.9" height="2.9" fill="#dddcdb"/><rect x="0.0" y="2.9" width="2.9" height="2.9" fill="#969c92"/><rect x="2.9" y="2.9" width="2.9" height="2.9" fill="#dadcdc"/><rect x="5.8" y="2.9" width="2.9" height="2.9" fill="#b7b7bf"/><rect x="8.7" y="2.9" width="2.9" height="2.9" fill="#a4a5a5"/><rect x="11.6" y="2.9" width="2.9" height="2.9" fill="#c2c6c1"/><rect x="14.5" y="2.9" width="2.9" height="2.9" fill="#806c7d"/><rect x="17.4" y="2.9" width="2.9" height="2.9" fill="#b0b9ba"/><rect x="20.3" y="2.9" width="2.9" height="2.9" fill="#9da09a"/><rect x="23.2" y="2.9" width="2.9" height="2.9" fill="#b9bdbb"/><rect x="26.1" y="2.9" width="2.9" height="2.9" fill="#b6b6b8"/><rect x="29.0" y="2.9" width="2.9" height="2.9" fill="#b7b0ba"/><rect x="31.9" y="2.9" width="2.9" height="2.9" fill="#b2b0a9"/><rect x="37.7" y="2.9" width="2.9" height="2.9" fill="#a0a194"/><rect x="40.6" y="2.9" width="2.9" height="2.9" fill="#bebbc0"/><rect x="43.5" y="2.9" width="2.9" height="2.9" fill="#828381"/><rect x="46.4" y="2.9" width="2.9" height="2.9" fill="#aab5b9"/><rect x="49.3" y="2.9" width="2.9" height="2.9" fill="#adaeb2"/><rect x="52.2" y="2.9" width="2.9" height="2.9" fill="#c1c7c1"/><rect x="55.1" y="2.9" width="2.9" height="2.9" fill="#9a9f9f"/><rect x="0.0" y="5.8" width="2.9" height="2.9" fill="#cbcfcb"/><rect x="2.9" y="5.8" width="2.9" height="2.9" fill="#d0d2d6"/><rect x="5.8" y="5.8" width="2.9" height="2.9" fill="#d9d8df"/><rect x="8.7" y="5.8" width="2.9" height="2.9" fill="#e3e6e5"/><rect x="11.6" y="5.8" width="2.9" height="2.9" fill="#9ea098"/><rect x="14.5" y="5.8" width="2.9" height="2.9" fill="#cbcbcb"/><rect x="17.4" y="5.8" width="2.9" height="2.9" fill="#c9cad0"/><rect x="20.3" y="5.8" width="2.9" height="2.9" fill="#e9eaed"/><rect x="23.2" y="5.8" width="2.9" height="2.9" fill="#efefed"/><rect x="26.1" y="5.8" width="2.9" height="2.9" fill="#ededee"/><rect x="29.0" y="5.8" width="2.9" height="2.9" fill="#d3d3d7"/><rect x="31.9" y="5.8" width="2.9" height="2.9" fill="#e4e4e2"/><rect x="37.7" y="5.8" width="2.9" height="2.9" fill="#e6e6e5"/><rect x="40.6" y="5.8" width="2.9" height="2.9" fill="#f8f9f8"/><rect x="43.5" y="5.8" width="2.9" height="2.9" fill="#e7e8e9"/><rect x="46.4" y="5.8" width="2.9" height="2.9" fill="#d0d5d8"/><rect x="49.3" y="5.8" width="2.9" height="2.9" fill="#efeeed"/><rect x="52.2" y="5.8" width="2.9" height="2.9" fill="#e3e4e6"/><rect x="55.1" y="5.8" width="2.9" height="2.9" fill="#d2d4d5"/></svg>
<div class="a" style="left:345.01px;top:255.00px;font-size:8.2px;line-height:8.2px;color:#2e2e2e;transform:scaleX(0.9000);transform-origin:0 0;">14</div>
<svg class="ic" style="left:367.20px;top:252.40px;" width="52.20" height="8.70" viewBox="0 0 52.20 8.70" shape-rendering="crispEdges"><rect x="0.0" y="0.0" width="2.9" height="2.9" fill="#e6e9e8"/><rect x="2.9" y="0.0" width="2.9" height="2.9" fill="#f6f6f6"/><rect x="14.5" y="0.0" width="2.9" height="2.9" fill="#f2f4f4"/><rect x="20.3" y="0.0" width="2.9" height="2.9" fill="#f3f2f4"/><rect x="29.0" y="0.0" width="2.9" height="2.9" fill="#eae8e8"/><rect x="31.9" y="0.0" width="2.9" height="2.9" fill="#f2f2f3"/><rect x="37.7" y="0.0" width="2.9" height="2.9" fill="#ececed"/><rect x="40.6" y="0.0" width="2.9" height="2.9" fill="#ededee"/><rect x="0.0" y="2.9" width="2.9" height="2.9" fill="#929991"/><rect x="2.9" y="2.9" width="2.9" height="2.9" fill="#bcbdb9"/><rect x="5.8" y="2.9" width="2.9" height="2.9" fill="#cfcccd"/><rect x="8.7" y="2.9" width="2.9" height="2.9" fill="#c2c3c3"/><rect x="11.6" y="2.9" width="2.9" height="2.9" fill="#c3c2c9"/><rect x="14.5" y="2.9" width="2.9" height="2.9" fill="#bcb9bf"/><rect x="17.4" y="2.9" width="2.9" height="2.9" fill="#9faea6"/><rect x="20.3" y="2.9" width="2.9" height="2.9" fill="#cecbcf"/><rect x="23.2" y="2.9" width="2.9" height="2.9" fill="#a8a3b2"/><rect x="29.0" y="2.9" width="2.9" height="2.9" fill="#a3a6a8"/><rect x="31.9" y="2.9" width="2.9" height="2.9" fill="#939b8e"/><rect x="34.8" y="2.9" width="2.9" height="2.9" fill="#a8a6ad"/><rect x="37.7" y="2.9" width="2.9" height="2.9" fill="#b6b6bf"/><rect x="40.6" y="2.9" width="2.9" height="2.9" fill="#bdbdc2"/><rect x="43.5" y="2.9" width="2.9" height="2.9" fill="#a3aea5"/><rect x="46.4" y="2.9" width="2.9" height="2.9" fill="#c0beb9"/><rect x="49.3" y="2.9" width="2.9" height="2.9" fill="#c8d0d0"/><rect x="0.0" y="5.8" width="2.9" height="2.9" fill="#c8c9c4"/><rect x="2.9" y="5.8" width="2.9" height="2.9" fill="#cccad2"/><rect x="5.8" y="5.8" width="2.9" height="2.9" fill="#bab7b6"/><rect x="8.7" y="5.8" width="2.9" height="2.9" fill="#a1a2ab"/><rect x="11.6" y="5.8" width="2.9" height="2.9" fill="#9a9f9b"/><rect x="14.5" y="5.8" width="2.9" height="2.9" fill="#bcc3c6"/><rect x="17.4" y="5.8" width="2.9" height="2.9" fill="#a0a4a2"/><rect x="20.3" y="5.8" width="2.9" height="2.9" fill="#c5c5c2"/><rect x="23.2" y="5.8" width="2.9" height="2.9" fill="#afafb9"/><rect x="26.1" y="5.8" width="2.9" height="2.9" fill="#f4f4f5"/><rect x="29.0" y="5.8" width="2.9" height="2.9" fill="#c0c3c8"/><rect x="31.9" y="5.8" width="2.9" height="2.9" fill="#dcdcde"/><rect x="34.8" y="5.8" width="2.9" height="2.9" fill="#bcc5c6"/><rect x="37.7" y="5.8" width="2.9" height="2.9" fill="#b7bbbc"/><rect x="40.6" y="5.8" width="2.9" height="2.9" fill="#b7c0be"/><rect x="43.5" y="5.8" width="2.9" height="2.9" fill="#999c94"/><rect x="46.4" y="5.8" width="2.9" height="2.9" fill="#9b9da3"/><rect x="49.3" y="5.8" width="2.9" height="2.9" fill="#c7c8c1"/></svg>
<div class="a" style="left:531.84px;top:255.00px;font-size:8.2px;line-height:8.2px;color:#2e2e2e;transform:scaleX(0.8600);transform-origin:0 0;">7</div>
<div class="a" style="left:574.69px;top:255.00px;font-size:8.2px;line-height:8.2px;color:#2e2e2e;transform:scaleX(0.8600);transform-origin:0 0;">6</div>
<div class="a" style="left:592.57px;top:255.00px;font-size:8.2px;line-height:8.2px;color:#2e2e2e;transform:scaleX(0.9011);transform-origin:0 0;">Subordinate</div>
<div class="a" style="left:757.84px;top:255.00px;font-size:8.2px;line-height:8.2px;color:#2e2e2e;transform:scaleX(0.8600);transform-origin:0 0;">7</div>
<div class="a" style="left:800.69px;top:255.00px;font-size:8.2px;line-height:8.2px;color:#2e2e2e;transform:scaleX(0.8600);transform-origin:0 0;">6</div>
<svg class="ic" style="left:818.5px;top:253.6px" width="10" height="8" viewBox="0 0 10 8"><rect x="0.7" y="0.7" width="8.4" height="6.4" fill="#fde9ee" stroke="#f28aa2" stroke-width="0.9"/><path d="M1.5 1.3L8.3 6.5M2.2 6.2L5.2 3.9M6 3.4L8 1.6" fill="none" stroke="#f07e98" stroke-width="0.9"/><circle cx="1.1" cy="1.1" r="1.05" fill="#f0557c"/><circle cx="8.7" cy="1.1" r="1.05" fill="#f0557c"/><circle cx="1.1" cy="6.7" r="1.05" fill="#f0557c"/><circle cx="8.7" cy="6.7" r="1.05" fill="#f0557c"/></svg>
<div class="a" style="left:842.57px;top:255.00px;font-size:8.2px;line-height:8.2px;color:#2e2e2e;transform:scaleX(0.9011);transform-origin:0 0;">Subordinate</div>
<div class="a" style="left:26.30px;top:265.80px;width:949.30px;height:17.1px;background:#fcfdfe;border-bottom:1px solid #e0e3e5"></div>
<div class="a" style="left:57px;top:265.80px;width:36px;height:16.10px;background:#d6fec4"></div>
<div class="a" style="left:93px;top:265.80px;width:43px;height:16.10px;background:#d6fec4"></div>
<div class="a" style="left:726px;top:265.80px;width:43px;height:16.10px;background:#d6fec4"></div>
<div class="a" style="left:769px;top:265.80px;width:43px;height:16.10px;background:#d6fec4"></div>
<svg class="ic" style="left:39.1px;top:270.7px" width="9" height="9" viewBox="0 0 9 9"><circle cx="3.6" cy="3.6" r="2.5" fill="none" stroke="#ea4b74" stroke-width="1.15"/><path d="M5.4 5.4L7.1 7.1" stroke="#ea4b74" stroke-width="1.15" stroke-linecap="round"/></svg>
<svg class="ic" style="left:71.2px;top:270.8px" width="7" height="8" viewBox="0 0 7 8"><path d="M1.75 3.6V2.6A1.75 1.75 0 0 1 5.25 2.6V3.6" fill="none" stroke="#111" stroke-width="0.95"/><rect x="0.9" y="3.3" width="5.2" height="3.1" rx="0.3" fill="#111"/></svg>
<div class="a" style="left:124.94px;top:272.00px;font-size:8.2px;line-height:8.2px;color:#2e2e2e;transform:scaleX(0.8600);transform-origin:0 0;">7</div>
<div class="a" style="left:167.12px;top:272.00px;font-size:8.2px;line-height:8.2px;color:#2e2e2e;transform:scaleX(0.8600);transform-origin:0 0;">1</div>
<svg class="ic" style="left:185.00px;top:271.20px;" width="58.00" height="8.70" viewBox="0 0 58.00 8.70" shape-rendering="crispEdges"><rect x="0.0" y="0.0" width="2.9" height="2.9" fill="#b4aeb8"/><rect x="2.9" y="0.0" width="2.9" height="2.9" fill="#cdcecb"/><rect x="5.8" y="0.0" width="2.9" height="2.9" fill="#d4d6d6"/><rect x="8.7" y="0.0" width="2.9" height="2.9" fill="#e8e5e7"/><rect x="11.6" y="0.0" width="2.9" height="2.9" fill="#e2e6e4"/><rect x="14.5" y="0.0" width="2.9" height="2.9" fill="#d4d1d3"/><rect x="17.4" y="0.0" width="2.9" height="2.9" fill="#e4e5e9"/><rect x="20.3" y="0.0" width="2.9" height="2.9" fill="#d1d2d8"/><rect x="23.2" y="0.0" width="2.9" height="2.9" fill="#e5e6e9"/><rect x="26.1" y="0.0" width="2.9" height="2.9" fill="#d9d3da"/><rect x="29.0" y="0.0" width="2.9" height="2.9" fill="#dedadf"/><rect x="31.9" y="0.0" width="2.9" height="2.9" fill="#efeff1"/><rect x="34.8" y="0.0" width="2.9" height="2.9" fill="#eeeff1"/><rect x="37.7" y="0.0" width="2.9" height="2.9" fill="#d0d1d5"/><rect x="40.6" y="0.0" width="2.9" height="2.9" fill="#c2bbbf"/><rect x="43.5" y="0.0" width="2.9" height="2.9" fill="#cfd0d4"/><rect x="46.4" y="0.0" width="2.9" height="2.9" fill="#d3ced4"/><rect x="49.3" y="0.0" width="2.9" height="2.9" fill="#cbc8c9"/><rect x="52.2" y="0.0" width="2.9" height="2.9" fill="#aeadba"/><rect x="55.1" y="0.0" width="2.9" height="2.9" fill="#d5d2d6"/><rect x="0.0" y="2.9" width="2.9" height="2.9" fill="#9d96a6"/><rect x="2.9" y="2.9" width="2.9" height="2.9" fill="#adaaad"/><rect x="5.8" y="2.9" width="2.9" height="2.9" fill="#bbbec4"/><rect x="8.7" y="2.9" width="2.9" height="2.9" fill="#a29d99"/><rect x="11.6" y="2.9" width="2.9" height="2.9" fill="#b5aeae"/><rect x="14.5" y="2.9" width="2.9" height="2.9" fill="#a59a9e"/><rect x="17.4" y="2.9" width="2.9" height="2.9" fill="#adadb5"/><rect x="20.3" y="2.9" width="2.9" height="2.9" fill="#bebbc4"/><rect x="23.2" y="2.9" width="2.9" height="2.9" fill="#97979f"/><rect x="26.1" y="2.9" width="2.9" height="2.9" fill="#9ba69b"/><rect x="29.0" y="2.9" width="2.9" height="2.9" fill="#c3c1bd"/><rect x="31.9" y="2.9" width="2.9" height="2.9" fill="#a5b2aa"/><rect x="34.8" y="2.9" width="2.9" height="2.9" fill="#dcdee1"/><rect x="37.7" y="2.9" width="2.9" height="2.9" fill="#bcbec3"/><rect x="40.6" y="2.9" width="2.9" height="2.9" fill="#9494a2"/><rect x="43.5" y="2.9" width="2.9" height="2.9" fill="#9ba49e"/><rect x="46.4" y="2.9" width="2.9" height="2.9" fill="#b7b6c0"/><rect x="49.3" y="2.9" width="2.9" height="2.9" fill="#a4a4a8"/><rect x="52.2" y="2.9" width="2.9" height="2.9" fill="#8b888f"/><rect x="55.1" y="2.9" width="2.9" height="2.9" fill="#adafaa"/><rect x="0.0" y="5.8" width="2.9" height="2.9" fill="#f0f1f0"/><rect x="2.9" y="5.8" width="2.9" height="2.9" fill="#edecef"/><rect x="5.8" y="5.8" width="2.9" height="2.9" fill="#d6d1d3"/><rect x="8.7" y="5.8" width="2.9" height="2.9" fill="#e7e6e6"/><rect x="11.6" y="5.8" width="2.9" height="2.9" fill="#e2e2e5"/><rect x="14.5" y="5.8" width="2.9" height="2.9" fill="#d3d5d5"/><rect x="17.4" y="5.8" width="2.9" height="2.9" fill="#eef0ee"/><rect x="20.3" y="5.8" width="2.9" height="2.9" fill="#f0f1f0"/><rect x="23.2" y="5.8" width="2.9" height="2.9" fill="#e4e3e4"/><rect x="26.1" y="5.8" width="2.9" height="2.9" fill="#d1d2d2"/><rect x="29.0" y="5.8" width="2.9" height="2.9" fill="#eceaec"/><rect x="31.9" y="5.8" width="2.9" height="2.9" fill="#bcc0bf"/><rect x="37.7" y="5.8" width="2.9" height="2.9" fill="#ecedec"/><rect x="40.6" y="5.8" width="2.9" height="2.9" fill="#f1f3f2"/><rect x="43.5" y="5.8" width="2.9" height="2.9" fill="#eff1f2"/><rect x="46.4" y="5.8" width="2.9" height="2.9" fill="#d4d4d0"/><rect x="49.3" y="5.8" width="2.9" height="2.9" fill="#f1f0f2"/><rect x="52.2" y="5.8" width="2.9" height="2.9" fill="#eeecf0"/><rect x="55.1" y="5.8" width="2.9" height="2.9" fill="#cfd4d3"/></svg>
<div class="a" style="left:345.01px;top:272.00px;font-size:8.2px;line-height:8.2px;color:#2e2e2e;transform:scaleX(0.9000);transform-origin:0 0;">14</div>
<svg class="ic" style="left:367.20px;top:269.50px;" width="52.20" height="8.70" viewBox="0 0 52.20 8.70" shape-rendering="crispEdges"><rect x="0.0" y="0.0" width="2.9" height="2.9" fill="#e5e7e6"/><rect x="2.9" y="0.0" width="2.9" height="2.9" fill="#f6f6f7"/><rect x="14.5" y="0.0" width="2.9" height="2.9" fill="#f3f3f2"/><rect x="20.3" y="0.0" width="2.9" height="2.9" fill="#f3f3f4"/><rect x="29.0" y="0.0" width="2.9" height="2.9" fill="#e8e7eb"/><rect x="31.9" y="0.0" width="2.9" height="2.9" fill="#f2f2f2"/><rect x="37.7" y="0.0" width="2.9" height="2.9" fill="#ebedee"/><rect x="40.6" y="0.0" width="2.9" height="2.9" fill="#efeef0"/><rect x="0.0" y="2.9" width="2.9" height="2.9" fill="#91978f"/><rect x="2.9" y="2.9" width="2.9" height="2.9" fill="#c0babb"/><rect x="5.8" y="2.9" width="2.9" height="2.9" fill="#cacfd0"/><rect x="8.7" y="2.9" width="2.9" height="2.9" fill="#bec3c4"/><rect x="11.6" y="2.9" width="2.9" height="2.9" fill="#c9c6c4"/><rect x="14.5" y="2.9" width="2.9" height="2.9" fill="#b9c2be"/><rect x="17.4" y="2.9" width="2.9" height="2.9" fill="#acaaac"/><rect x="20.3" y="2.9" width="2.9" height="2.9" fill="#cad0cc"/><rect x="23.2" y="2.9" width="2.9" height="2.9" fill="#a5afae"/><rect x="29.0" y="2.9" width="2.9" height="2.9" fill="#9da0a0"/><rect x="31.9" y="2.9" width="2.9" height="2.9" fill="#969199"/><rect x="34.8" y="2.9" width="2.9" height="2.9" fill="#afafb0"/><rect x="37.7" y="2.9" width="2.9" height="2.9" fill="#b4b5be"/><rect x="40.6" y="2.9" width="2.9" height="2.9" fill="#bdc1bf"/><rect x="43.5" y="2.9" width="2.9" height="2.9" fill="#a3a8a9"/><rect x="46.4" y="2.9" width="2.9" height="2.9" fill="#b7bcba"/><rect x="49.3" y="2.9" width="2.9" height="2.9" fill="#cecfd0"/><rect x="0.0" y="5.8" width="2.9" height="2.9" fill="#c2cbc8"/><rect x="2.9" y="5.8" width="2.9" height="2.9" fill="#d1cbd0"/><rect x="5.8" y="5.8" width="2.9" height="2.9" fill="#bebfb5"/><rect x="8.7" y="5.8" width="2.9" height="2.9" fill="#a4a2a1"/><rect x="11.6" y="5.8" width="2.9" height="2.9" fill="#988f9d"/><rect x="14.5" y="5.8" width="2.9" height="2.9" fill="#c4c5c8"/><rect x="17.4" y="5.8" width="2.9" height="2.9" fill="#a39aa1"/><rect x="20.3" y="5.8" width="2.9" height="2.9" fill="#c9c3c6"/><rect x="23.2" y="5.8" width="2.9" height="2.9" fill="#b6b0b7"/><rect x="26.1" y="5.8" width="2.9" height="2.9" fill="#f3f4f5"/><rect x="29.0" y="5.8" width="2.9" height="2.9" fill="#c5c8c8"/><rect x="31.9" y="5.8" width="2.9" height="2.9" fill="#dce0df"/><rect x="34.8" y="5.8" width="2.9" height="2.9" fill="#c4c5c6"/><rect x="37.7" y="5.8" width="2.9" height="2.9" fill="#b4b7b7"/><rect x="40.6" y="5.8" width="2.9" height="2.9" fill="#bdbcb9"/><rect x="43.5" y="5.8" width="2.9" height="2.9" fill="#968f9c"/><rect x="46.4" y="5.8" width="2.9" height="2.9" fill="#9a9aa2"/><rect x="49.3" y="5.8" width="2.9" height="2.9" fill="#c8c6c5"/></svg>
<div class="a" style="left:531.84px;top:272.00px;font-size:8.2px;line-height:8.2px;color:#2e2e2e;transform:scaleX(0.8600);transform-origin:0 0;">7</div>
<div class="a" style="left:574.69px;top:272.00px;font-size:8.2px;line-height:8.2px;color:#2e2e2e;transform:scaleX(0.8600);transform-origin:0 0;">6</div>
<div class="a" style="left:592.57px;top:272.00px;font-size:8.2px;line-height:8.2px;color:#2e2e2e;transform:scaleX(0.9011);transform-origin:0 0;">Subordinate</div>
<div class="a" style="left:757.84px;top:272.00px;font-size:8.2px;line-height:8.2px;color:#2e2e2e;transform:scaleX(0.8600);transform-origin:0 0;">7</div>
<div class="a" style="left:800.69px;top:272.00px;font-size:8.2px;line-height:8.2px;color:#2e2e2e;transform:scaleX(0.8600);transform-origin:0 0;">6</div>
<svg class="ic" style="left:818.5px;top:270.7px" width="10" height="8" viewBox="0 0 10 8"><rect x="0.7" y="0.7" width="8.4" height="6.4" fill="#fde9ee" stroke="#f28aa2" stroke-width="0.9"/><path d="M1.5 1.3L8.3 6.5M2.2 6.2L5.2 3.9M6 3.4L8 1.6" fill="none" stroke="#f07e98" stroke-width="0.9"/><circle cx="1.1" cy="1.1" r="1.05" fill="#f0557c"/><circle cx="8.7" cy="1.1" r="1.05" fill="#f0557c"/><circle cx="1.1" cy="6.7" r="1.05" fill="#f0557c"/><circle cx="8.7" cy="6.7" r="1.05" fill="#f0557c"/></svg>
<div class="a" style="left:842.57px;top:272.00px;font-size:8.2px;line-height:8.2px;color:#2e2e2e;transform:scaleX(0.9011);transform-origin:0 0;">Subordinate</div>
<div class="a" style="left:26.30px;top:282.90px;width:949.30px;height:17.1px;background:#fff;border-bottom:1px solid #e0e3e5"></div>
<div class="a" style="left:57px;top:282.90px;width:36px;height:16.10px;background:#d6fec4"></div>
<div class="a" style="left:93px;top:282.90px;width:43px;height:16.10px;background:#d6fec4"></div>
<div class="a" style="left:136px;top:282.90px;width:43px;height:16.10px;background:#fee09e"></div>
<div class="a" style="left:726px;top:282.90px;width:43px;height:16.10px;background:#feb3b6"></div>
<div class="a" style="left:769px;top:282.90px;width:43px;height:16.10px;background:#feb3b6"></div>
<svg class="ic" style="left:39.1px;top:287.79999999999995px" width="9" height="9" viewBox="0 0 9 9"><circle cx="3.6" cy="3.6" r="2.5" fill="none" stroke="#ea4b74" stroke-width="1.15"/><path d="M5.4 5.4L7.1 7.1" stroke="#ea4b74" stroke-width="1.15" stroke-linecap="round"/></svg>
<svg class="ic" style="left:71.2px;top:287.9px" width="7" height="8" viewBox="0 0 7 8"><path d="M1.75 3.6V2.6A1.75 1.75 0 0 1 5.25 2.6V3.6" fill="none" stroke="#111" stroke-width="0.95"/><rect x="0.9" y="3.3" width="5.2" height="3.1" rx="0.3" fill="#111"/></svg>
<div class="a" style="left:124.94px;top:289.00px;font-size:8.2px;line-height:8.2px;color:#2e2e2e;transform:scaleX(0.8600);transform-origin:0 0;">7</div>
<div class="a" style="left:164.09px;top:289.00px;font-size:8.2px;line-height:8.2px;color:#2e2e2e;transform:scaleX(0.9000);transform-origin:0 0;">11</div>
<svg class="ic" style="left:185.00px;top:288.30px;" width="40.60" height="8.70" viewBox="0 0 40.60 8.70" shape-rendering="crispEdges"><rect x="0.0" y="0.0" width="2.9" height="2.9" fill="#cdd0d2"/><rect x="2.9" y="0.0" width="2.9" height="2.9" fill="#f0f1f3"/><rect x="5.8" y="0.0" width="2.9" height="2.9" fill="#f1f1f2"/><rect x="8.7" y="0.0" width="2.9" height="2.9" fill="#d6dbd9"/><rect x="11.6" y="0.0" width="2.9" height="2.9" fill="#dcd9de"/><rect x="14.5" y="0.0" width="2.9" height="2.9" fill="#e0e4e2"/><rect x="17.4" y="0.0" width="2.9" height="2.9" fill="#e4e4e6"/><rect x="20.3" y="0.0" width="2.9" height="2.9" fill="#ebeced"/><rect x="23.2" y="0.0" width="2.9" height="2.9" fill="#bcb8bf"/><rect x="26.1" y="0.0" width="2.9" height="2.9" fill="#c9c4c7"/><rect x="29.0" y="0.0" width="2.9" height="2.9" fill="#aca0ad"/><rect x="31.9" y="0.0" width="2.9" height="2.9" fill="#d2d8d9"/><rect x="34.8" y="0.0" width="2.9" height="2.9" fill="#cad0cc"/><rect x="37.7" y="0.0" width="2.9" height="2.9" fill="#b8bac1"/><rect x="0.0" y="2.9" width="2.9" height="2.9" fill="#b5b2b7"/><rect x="2.9" y="2.9" width="2.9" height="2.9" fill="#ccc5c9"/><rect x="5.8" y="2.9" width="2.9" height="2.9" fill="#c4c6c0"/><rect x="8.7" y="2.9" width="2.9" height="2.9" fill="#9e9da1"/><rect x="11.6" y="2.9" width="2.9" height="2.9" fill="#bdb4b5"/><rect x="14.5" y="2.9" width="2.9" height="2.9" fill="#a4a4ab"/><rect x="17.4" y="2.9" width="2.9" height="2.9" fill="#c6c6c3"/><rect x="20.3" y="2.9" width="2.9" height="2.9" fill="#aba6a9"/><rect x="23.2" y="2.9" width="2.9" height="2.9" fill="#9a9aa3"/><rect x="26.1" y="2.9" width="2.9" height="2.9" fill="#aeb2b2"/><rect x="29.0" y="2.9" width="2.9" height="2.9" fill="#b4b5b8"/><rect x="31.9" y="2.9" width="2.9" height="2.9" fill="#95999d"/><rect x="34.8" y="2.9" width="2.9" height="2.9" fill="#8f9996"/><rect x="37.7" y="2.9" width="2.9" height="2.9" fill="#a3b2a7"/><rect x="0.0" y="5.8" width="2.9" height="2.9" fill="#cdcbc9"/><rect x="2.9" y="5.8" width="2.9" height="2.9" fill="#e0e0e1"/><rect x="5.8" y="5.8" width="2.9" height="2.9" fill="#d3d4d3"/><rect x="8.7" y="5.8" width="2.9" height="2.9" fill="#e8e8ea"/><rect x="11.6" y="5.8" width="2.9" height="2.9" fill="#b1abb5"/><rect x="14.5" y="5.8" width="2.9" height="2.9" fill="#c2babe"/><rect x="17.4" y="5.8" width="2.9" height="2.9" fill="#f0f1f1"/><rect x="20.3" y="5.8" width="2.9" height="2.9" fill="#ebeced"/><rect x="26.1" y="5.8" width="2.9" height="2.9" fill="#dfe3e5"/><rect x="29.0" y="5.8" width="2.9" height="2.9" fill="#efeeef"/><rect x="31.9" y="5.8" width="2.9" height="2.9" fill="#d7d7d5"/><rect x="34.8" y="5.8" width="2.9" height="2.9" fill="#e5e7e7"/><rect x="37.7" y="5.8" width="2.9" height="2.9" fill="#e9e9ec"/></svg>
<div class="a" style="left:345.01px;top:289.00px;font-size:8.2px;line-height:8.2px;color:#2e2e2e;transform:scaleX(0.9000);transform-origin:0 0;">14</div>
<svg class="ic" style="left:367.20px;top:286.60px;" width="52.20" height="8.70" viewBox="0 0 52.20 8.70" shape-rendering="crispEdges"><rect x="0.0" y="0.0" width="2.9" height="2.9" fill="#e8e5e8"/><rect x="2.9" y="0.0" width="2.9" height="2.9" fill="#f6f6f7"/><rect x="14.5" y="0.0" width="2.9" height="2.9" fill="#f3f3f3"/><rect x="20.3" y="0.0" width="2.9" height="2.9" fill="#f3f4f3"/><rect x="29.0" y="0.0" width="2.9" height="2.9" fill="#e9e8e9"/><rect x="31.9" y="0.0" width="2.9" height="2.9" fill="#f3f3f4"/><rect x="37.7" y="0.0" width="2.9" height="2.9" fill="#edebed"/><rect x="40.6" y="0.0" width="2.9" height="2.9" fill="#edeef0"/><rect x="0.0" y="2.9" width="2.9" height="2.9" fill="#8e979e"/><rect x="2.9" y="2.9" width="2.9" height="2.9" fill="#b8bdba"/><rect x="5.8" y="2.9" width="2.9" height="2.9" fill="#ccccce"/><rect x="8.7" y="2.9" width="2.9" height="2.9" fill="#bcc1c5"/><rect x="11.6" y="2.9" width="2.9" height="2.9" fill="#c8c5c8"/><rect x="14.5" y="2.9" width="2.9" height="2.9" fill="#b7bfba"/><rect x="17.4" y="2.9" width="2.9" height="2.9" fill="#acabaf"/><rect x="20.3" y="2.9" width="2.9" height="2.9" fill="#cecfd2"/><rect x="23.2" y="2.9" width="2.9" height="2.9" fill="#ada2aa"/><rect x="29.0" y="2.9" width="2.9" height="2.9" fill="#9e989c"/><rect x="31.9" y="2.9" width="2.9" height="2.9" fill="#9b8e9d"/><rect x="34.8" y="2.9" width="2.9" height="2.9" fill="#a7a8ad"/><rect x="37.7" y="2.9" width="2.9" height="2.9" fill="#b5b7b8"/><rect x="40.6" y="2.9" width="2.9" height="2.9" fill="#c0bbc5"/><rect x="43.5" y="2.9" width="2.9" height="2.9" fill="#a5b0b2"/><rect x="46.4" y="2.9" width="2.9" height="2.9" fill="#b5bfbf"/><rect x="49.3" y="2.9" width="2.9" height="2.9" fill="#c8cbcf"/><rect x="0.0" y="5.8" width="2.9" height="2.9" fill="#c7c8ca"/><rect x="2.9" y="5.8" width="2.9" height="2.9" fill="#d1d0d1"/><rect x="5.8" y="5.8" width="2.9" height="2.9" fill="#b4b9c0"/><rect x="8.7" y="5.8" width="2.9" height="2.9" fill="#9ca0a1"/><rect x="11.6" y="5.8" width="2.9" height="2.9" fill="#9e909b"/><rect x="14.5" y="5.8" width="2.9" height="2.9" fill="#c0c4c1"/><rect x="17.4" y="5.8" width="2.9" height="2.9" fill="#a69ca3"/><rect x="20.3" y="5.8" width="2.9" height="2.9" fill="#c0c6c8"/><rect x="23.2" y="5.8" width="2.9" height="2.9" fill="#b8b0b5"/><rect x="26.1" y="5.8" width="2.9" height="2.9" fill="#f4f3f3"/><rect x="29.0" y="5.8" width="2.9" height="2.9" fill="#c0c6c4"/><rect x="31.9" y="5.8" width="2.9" height="2.9" fill="#dddcde"/><rect x="34.8" y="5.8" width="2.9" height="2.9" fill="#bfbdc4"/><rect x="37.7" y="5.8" width="2.9" height="2.9" fill="#b5bab1"/><rect x="40.6" y="5.8" width="2.9" height="2.9" fill="#bebfb9"/><rect x="43.5" y="5.8" width="2.9" height="2.9" fill="#92929e"/><rect x="46.4" y="5.8" width="2.9" height="2.9" fill="#a19e9e"/><rect x="49.3" y="5.8" width="2.9" height="2.9" fill="#c5c3c6"/></svg>
<div class="a" style="left:531.82px;top:289.00px;font-size:8.2px;line-height:8.2px;color:#2e2e2e;transform:scaleX(0.8600);transform-origin:0 0;">1</div>
<div class="a" style="left:574.72px;top:289.00px;font-size:8.2px;line-height:8.2px;color:#2e2e2e;transform:scaleX(0.8600);transform-origin:0 0;">1</div>
<div class="a" style="left:593.20px;top:289.00px;font-size:8.2px;line-height:8.2px;color:#2e2e2e;transform:scaleX(0.8805);transform-origin:0 0;">Lead</div>
<div class="a" style="left:757.82px;top:289.00px;font-size:8.2px;line-height:8.2px;color:#2e2e2e;transform:scaleX(0.8600);transform-origin:0 0;">1</div>
<div class="a" style="left:800.72px;top:289.00px;font-size:8.2px;line-height:8.2px;color:#2e2e2e;transform:scaleX(0.8600);transform-origin:0 0;">1</div>
<svg class="ic" style="left:818.5px;top:287.79999999999995px" width="10" height="8" viewBox="0 0 10 8"><rect x="0.7" y="0.7" width="8.4" height="6.4" fill="#fde9ee" stroke="#f28aa2" stroke-width="0.9"/><path d="M1.5 1.3L8.3 6.5M2.2 6.2L5.2 3.9M6 3.4L8 1.6" fill="none" stroke="#f07e98" stroke-width="0.9"/><circle cx="1.1" cy="1.1" r="1.05" fill="#f0557c"/><circle cx="8.7" cy="1.1" r="1.05" fill="#f0557c"/><circle cx="1.1" cy="6.7" r="1.05" fill="#f0557c"/><circle cx="8.7" cy="6.7" r="1.05" fill="#f0557c"/></svg>
<div class="a" style="left:843.20px;top:289.00px;font-size:8.2px;line-height:8.2px;color:#2e2e2e;transform:scaleX(0.8805);transform-origin:0 0;">Lead</div>
<div class="a" style="left:26.30px;top:300.00px;width:949.30px;height:17.1px;background:#fcfdfe;border-bottom:1px solid #e0e3e5"></div>
<div class="a" style="left:57px;top:300.00px;width:36px;height:16.10px;background:#d6fec4"></div>
<div class="a" style="left:93px;top:300.00px;width:43px;height:16.10px;background:#d6fec4"></div>
<div class="a" style="left:726px;top:300.00px;width:43px;height:16.10px;background:#d6fec4"></div>
<div class="a" style="left:769px;top:300.00px;width:43px;height:16.10px;background:#d6fec4"></div>
<svg class="ic" style="left:39.1px;top:304.9px" width="9" height="9" viewBox="0 0 9 9"><circle cx="3.6" cy="3.6" r="2.5" fill="none" stroke="#ea4b74" stroke-width="1.15"/><path d="M5.4 5.4L7.1 7.1" stroke="#ea4b74" stroke-width="1.15" stroke-linecap="round"/></svg>
<svg class="ic" style="left:71.2px;top:305.0px" width="7" height="8" viewBox="0 0 7 8"><path d="M1.75 3.6V2.6A1.75 1.75 0 0 1 5.25 2.6V3.6" fill="none" stroke="#111" stroke-width="0.95"/><rect x="0.9" y="3.3" width="5.2" height="3.1" rx="0.3" fill="#111"/></svg>
<div class="a" style="left:124.94px;top:306.00px;font-size:8.2px;line-height:8.2px;color:#2e2e2e;transform:scaleX(0.8600);transform-origin:0 0;">7</div>
<div class="a" style="left:167.12px;top:306.00px;font-size:8.2px;line-height:8.2px;color:#2e2e2e;transform:scaleX(0.8600);transform-origin:0 0;">1</div>
<svg class="ic" style="left:185.00px;top:305.40px;" width="52.20" height="8.70" viewBox="0 0 52.20 8.70" shape-rendering="crispEdges"><rect x="0.0" y="0.0" width="2.9" height="2.9" fill="#d1cccc"/><rect x="5.8" y="0.0" width="2.9" height="2.9" fill="#cfcfd2"/><rect x="8.7" y="0.0" width="2.9" height="2.9" fill="#eeeeee"/><rect x="11.6" y="0.0" width="2.9" height="2.9" fill="#eef0ee"/><rect x="14.5" y="0.0" width="2.9" height="2.9" fill="#dadbdc"/><rect x="17.4" y="0.0" width="2.9" height="2.9" fill="#dddede"/><rect x="20.3" y="0.0" width="2.9" height="2.9" fill="#e6e7eb"/><rect x="23.2" y="0.0" width="2.9" height="2.9" fill="#cfd2d1"/><rect x="26.1" y="0.0" width="2.9" height="2.9" fill="#c8cdc6"/><rect x="29.0" y="0.0" width="2.9" height="2.9" fill="#f4f3f4"/><rect x="31.9" y="0.0" width="2.9" height="2.9" fill="#c9cccf"/><rect x="34.8" y="0.0" width="2.9" height="2.9" fill="#c1c4c6"/><rect x="37.7" y="0.0" width="2.9" height="2.9" fill="#e2e2e3"/><rect x="40.6" y="0.0" width="2.9" height="2.9" fill="#d8d6d7"/><rect x="43.5" y="0.0" width="2.9" height="2.9" fill="#c5cbc7"/><rect x="46.4" y="0.0" width="2.9" height="2.9" fill="#cfcdcd"/><rect x="49.3" y="0.0" width="2.9" height="2.9" fill="#d5d4d9"/><rect x="0.0" y="2.9" width="2.9" height="2.9" fill="#b6b5bd"/><rect x="2.9" y="2.9" width="2.9" height="2.9" fill="#d3d7d8"/><rect x="5.8" y="2.9" width="2.9" height="2.9" fill="#969493"/><rect x="8.7" y="2.9" width="2.9" height="2.9" fill="#b1aeb9"/><rect x="11.6" y="2.9" width="2.9" height="2.9" fill="#b7b9bd"/><rect x="14.5" y="2.9" width="2.9" height="2.9" fill="#b6b9be"/><rect x="17.4" y="2.9" width="2.9" height="2.9" fill="#9ca49c"/><rect x="20.3" y="2.9" width="2.9" height="2.9" fill="#b3b3c0"/><rect x="23.2" y="2.9" width="2.9" height="2.9" fill="#bfbbc0"/><rect x="26.1" y="2.9" width="2.9" height="2.9" fill="#87877a"/><rect x="31.9" y="2.9" width="2.9" height="2.9" fill="#aeaeb4"/><rect x="34.8" y="2.9" width="2.9" height="2.9" fill="#f6f6f6"/><rect x="37.7" y="2.9" width="2.9" height="2.9" fill="#a8afa7"/><rect x="40.6" y="2.9" width="2.9" height="2.9" fill="#b1b3b9"/><rect x="43.5" y="2.9" width="2.9" height="2.9" fill="#babcc2"/><rect x="46.4" y="2.9" width="2.9" height="2.9" fill="#707787"/><rect x="49.3" y="2.9" width="2.9" height="2.9" fill="#b8b4c1"/><rect x="0.0" y="5.8" width="2.9" height="2.9" fill="#cdd1cf"/><rect x="2.9" y="5.8" width="2.9" height="2.9" fill="#dedcda"/><rect x="5.8" y="5.8" width="2.9" height="2.9" fill="#d5d5d2"/><rect x="8.7" y="5.8" width="2.9" height="2.9" fill="#dbd7db"/><rect x="11.6" y="5.8" width="2.9" height="2.9" fill="#dedee0"/><rect x="14.5" y="5.8" width="2.9" height="2.9" fill="#edeeef"/><rect x="17.4" y="5.8" width="2.9" height="2.9" fill="#dee0e3"/><rect x="20.3" y="5.8" width="2.9" height="2.9" fill="#e7e8e6"/><rect x="23.2" y="5.8" width="2.9" height="2.9" fill="#f0eff0"/><rect x="26.1" y="5.8" width="2.9" height="2.9" fill="#e0ddde"/><rect x="29.0" y="5.8" width="2.9" height="2.9" fill="#f3f2f3"/><rect x="31.9" y="5.8" width="2.9" height="2.9" fill="#f1f1f1"/><rect x="34.8" y="5.8" width="2.9" height="2.9" fill="#cccdca"/><rect x="37.7" y="5.8" width="2.9" height="2.9" fill="#eff0f0"/><rect x="40.6" y="5.8" width="2.9" height="2.9" fill="#dadcd8"/><rect x="43.5" y="5.8" width="2.9" height="2.9" fill="#eeefef"/><rect x="46.4" y="5.8" width="2.9" height="2.9" fill="#e0e1e1"/><rect x="49.3" y="5.8" width="2.9" height="2.9" fill="#eef0f0"/></svg>
<div class="a" style="left:345.01px;top:306.00px;font-size:8.2px;line-height:8.2px;color:#2e2e2e;transform:scaleX(0.9000);transform-origin:0 0;">14</div>
<svg class="ic" style="left:367.20px;top:303.70px;" width="52.20" height="8.70" viewBox="0 0 52.20 8.70" shape-rendering="crispEdges"><rect x="0.0" y="0.0" width="2.9" height="2.9" fill="#e9e7e6"/><rect x="2.9" y="0.0" width="2.9" height="2.9" fill="#f6f6f7"/><rect x="14.5" y="0.0" width="2.9" height="2.9" fill="#f2f2f3"/><rect x="20.3" y="0.0" width="2.9" height="2.9" fill="#f3f4f4"/><rect x="29.0" y="0.0" width="2.9" height="2.9" fill="#ebe9ea"/><rect x="31.9" y="0.0" width="2.9" height="2.9" fill="#f2f3f3"/><rect x="37.7" y="0.0" width="2.9" height="2.9" fill="#ececed"/><rect x="40.6" y="0.0" width="2.9" height="2.9" fill="#ededee"/><rect x="0.0" y="2.9" width="2.9" height="2.9" fill="#8e919d"/><rect x="2.9" y="2.9" width="2.9" height="2.9" fill="#b7c1bb"/><rect x="5.8" y="2.9" width="2.9" height="2.9" fill="#d0ccd1"/><rect x="8.7" y="2.9" width="2.9" height="2.9" fill="#bbc1bc"/><rect x="11.6" y="2.9" width="2.9" height="2.9" fill="#c5c6c5"/><rect x="14.5" y="2.9" width="2.9" height="2.9" fill="#b8c0bd"/><rect x="17.4" y="2.9" width="2.9" height="2.9" fill="#aba7a4"/><rect x="20.3" y="2.9" width="2.9" height="2.9" fill="#d0cfcb"/><rect x="23.2" y="2.9" width="2.9" height="2.9" fill="#aca1a5"/><rect x="29.0" y="2.9" width="2.9" height="2.9" fill="#98a6a4"/><rect x="31.9" y="2.9" width="2.9" height="2.9" fill="#8d8e9f"/><rect x="34.8" y="2.9" width="2.9" height="2.9" fill="#afaca9"/><rect x="37.7" y="2.9" width="2.9" height="2.9" fill="#b7b5b8"/><rect x="40.6" y="2.9" width="2.9" height="2.9" fill="#c1c2c1"/><rect x="43.5" y="2.9" width="2.9" height="2.9" fill="#a4a6a6"/><rect x="46.4" y="2.9" width="2.9" height="2.9" fill="#b6bbc3"/><rect x="49.3" y="2.9" width="2.9" height="2.9" fill="#d0cacd"/><rect x="0.0" y="5.8" width="2.9" height="2.9" fill="#c7cbcb"/><rect x="2.9" y="5.8" width="2.9" height="2.9" fill="#c9cbcb"/><rect x="5.8" y="5.8" width="2.9" height="2.9" fill="#b8bdbc"/><rect x="8.7" y="5.8" width="2.9" height="2.9" fill="#aca9af"/><rect x="11.6" y="5.8" width="2.9" height="2.9" fill="#9b94a3"/><rect x="14.5" y="5.8" width="2.9" height="2.9" fill="#c2bdc4"/><rect x="17.4" y="5.8" width="2.9" height="2.9" fill="#a39bab"/><rect x="20.3" y="5.8" width="2.9" height="2.9" fill="#c8c5c9"/><rect x="23.2" y="5.8" width="2.9" height="2.9" fill="#b7b5b5"/><rect x="26.1" y="5.8" width="2.9" height="2.9" fill="#f4f4f3"/><rect x="29.0" y="5.8" width="2.9" height="2.9" fill="#c2c9c2"/><rect x="31.9" y="5.8" width="2.9" height="2.9" fill="#dedce2"/><rect x="34.8" y="5.8" width="2.9" height="2.9" fill="#bfbcbe"/><rect x="37.7" y="5.8" width="2.9" height="2.9" fill="#b0b4b4"/><rect x="40.6" y="5.8" width="2.9" height="2.9" fill="#b7b9bd"/><rect x="43.5" y="5.8" width="2.9" height="2.9" fill="#8c9291"/><rect x="46.4" y="5.8" width="2.9" height="2.9" fill="#9fa6ab"/><rect x="49.3" y="5.8" width="2.9" height="2.9" fill="#c8c0c6"/></svg>
<div class="a" style="left:531.84px;top:306.00px;font-size:8.2px;line-height:8.2px;color:#2e2e2e;transform:scaleX(0.8600);transform-origin:0 0;">7</div>
<div class="a" style="left:574.69px;top:306.00px;font-size:8.2px;line-height:8.2px;color:#2e2e2e;transform:scaleX(0.8600);transform-origin:0 0;">6</div>
<div class="a" style="left:592.57px;top:306.00px;font-size:8.2px;line-height:8.2px;color:#2e2e2e;transform:scaleX(0.9011);transform-origin:0 0;">Subordinate</div>
<div class="a" style="left:757.84px;top:306.00px;font-size:8.2px;line-height:8.2px;color:#2e2e2e;transform:scaleX(0.8600);transform-origin:0 0;">7</div>
<div class="a" style="left:800.69px;top:306.00px;font-size:8.2px;line-height:8.2px;color:#2e2e2e;transform:scaleX(0.8600);transform-origin:0 0;">6</div>
<svg class="ic" style="left:818.5px;top:304.9px" width="10" height="8" viewBox="0 0 10 8"><rect x="0.7" y="0.7" width="8.4" height="6.4" fill="#fde9ee" stroke="#f28aa2" stroke-width="0.9"/><path d="M1.5 1.3L8.3 6.5M2.2 6.2L5.2 3.9M6 3.4L8 1.6" fill="none" stroke="#f07e98" stroke-width="0.9"/><circle cx="1.1" cy="1.1" r="1.05" fill="#f0557c"/><circle cx="8.7" cy="1.1" r="1.05" fill="#f0557c"/><circle cx="1.1" cy="6.7" r="1.05" fill="#f0557c"/><circle cx="8.7" cy="6.7" r="1.05" fill="#f0557c"/></svg>
<div class="a" style="left:842.57px;top:306.00px;font-size:8.2px;line-height:8.2px;color:#2e2e2e;transform:scaleX(0.9011);transform-origin:0 0;">Subordinate</div>
<div class="a" style="left:26.30px;top:317.10px;width:949.30px;height:17.1px;background:#fff;border-bottom:1px solid #e0e3e5"></div>
<div class="a" style="left:57px;top:317.10px;width:36px;height:16.10px;background:#d6fec4"></div>
<div class="a" style="left:93px;top:317.10px;width:43px;height:16.10px;background:#d6fec4"></div>
<div class="a" style="left:726px;top:317.10px;width:43px;height:16.10px;background:#d6fec4"></div>
<div class="a" style="left:769px;top:317.10px;width:43px;height:16.10px;background:#d6fec4"></div>
<svg class="ic" style="left:39.1px;top:322.0px" width="9" height="9" viewBox="0 0 9 9"><circle cx="3.6" cy="3.6" r="2.5" fill="none" stroke="#ea4b74" stroke-width="1.15"/><path d="M5.4 5.4L7.1 7.1" stroke="#ea4b74" stroke-width="1.15" stroke-linecap="round"/></svg>
<svg class="ic" style="left:71.2px;top:322.1px" width="7" height="8" viewBox="0 0 7 8"><path d="M1.75 3.6V2.6A1.75 1.75 0 0 1 5.25 2.6V3.6" fill="none" stroke="#111" stroke-width="0.95"/><rect x="0.9" y="3.3" width="5.2" height="3.1" rx="0.3" fill="#111"/></svg>
<div class="a" style="left:124.94px;top:323.00px;font-size:8.2px;line-height:8.2px;color:#2e2e2e;transform:scaleX(0.8600);transform-origin:0 0;">7</div>
<div class="a" style="left:167.12px;top:323.00px;font-size:8.2px;line-height:8.2px;color:#2e2e2e;transform:scaleX(0.8600);transform-origin:0 0;">1</div>
<svg class="ic" style="left:185.00px;top:322.50px;" width="37.70" height="8.70" viewBox="0 0 37.70 8.70" shape-rendering="crispEdges"><rect x="0.0" y="0.0" width="2.9" height="2.9" fill="#9aa0a4"/><rect x="2.9" y="0.0" width="2.9" height="2.9" fill="#eceded"/><rect x="5.8" y="0.0" width="2.9" height="2.9" fill="#b4aeaf"/><rect x="8.7" y="0.0" width="2.9" height="2.9" fill="#d6d4d1"/><rect x="11.6" y="0.0" width="2.9" height="2.9" fill="#d4d0d2"/><rect x="14.5" y="0.0" width="2.9" height="2.9" fill="#dcdfde"/><rect x="17.4" y="0.0" width="2.9" height="2.9" fill="#abafad"/><rect x="20.3" y="0.0" width="2.9" height="2.9" fill="#ecebeb"/><rect x="26.1" y="0.0" width="2.9" height="2.9" fill="#c3c1ca"/><rect x="29.0" y="0.0" width="2.9" height="2.9" fill="#eeefef"/><rect x="34.8" y="0.0" width="2.9" height="2.9" fill="#e9ebea"/><rect x="0.0" y="2.9" width="2.9" height="2.9" fill="#8b878b"/><rect x="2.9" y="2.9" width="2.9" height="2.9" fill="#9e9f9b"/><rect x="5.8" y="2.9" width="2.9" height="2.9" fill="#acb7ba"/><rect x="8.7" y="2.9" width="2.9" height="2.9" fill="#939b9a"/><rect x="11.6" y="2.9" width="2.9" height="2.9" fill="#bdbdc0"/><rect x="14.5" y="2.9" width="2.9" height="2.9" fill="#a4989e"/><rect x="17.4" y="2.9" width="2.9" height="2.9" fill="#b6bebb"/><rect x="20.3" y="2.9" width="2.9" height="2.9" fill="#b2b0b0"/><rect x="26.1" y="2.9" width="2.9" height="2.9" fill="#aeb3b3"/><rect x="29.0" y="2.9" width="2.9" height="2.9" fill="#f3f4f3"/><rect x="31.9" y="2.9" width="2.9" height="2.9" fill="#939393"/><rect x="34.8" y="2.9" width="2.9" height="2.9" fill="#e0e1e2"/><rect x="0.0" y="5.8" width="2.9" height="2.9" fill="#edebec"/><rect x="2.9" y="5.8" width="2.9" height="2.9" fill="#eae9e9"/><rect x="5.8" y="5.8" width="2.9" height="2.9" fill="#ebebed"/><rect x="8.7" y="5.8" width="2.9" height="2.9" fill="#e6e7e9"/><rect x="11.6" y="5.8" width="2.9" height="2.9" fill="#f2f1f1"/><rect x="14.5" y="5.8" width="2.9" height="2.9" fill="#e6e9ea"/><rect x="17.4" y="5.8" width="2.9" height="2.9" fill="#f0eef0"/><rect x="20.3" y="5.8" width="2.9" height="2.9" fill="#edeaee"/><rect x="26.1" y="5.8" width="2.9" height="2.9" fill="#cacdca"/><rect x="29.0" y="5.8" width="2.9" height="2.9" fill="#d3d1d5"/><rect x="31.9" y="5.8" width="2.9" height="2.9" fill="#bab5be"/></svg>
<div class="a" style="left:345.01px;top:323.00px;font-size:8.2px;line-height:8.2px;color:#2e2e2e;transform:scaleX(0.9000);transform-origin:0 0;">14</div>
<svg class="ic" style="left:367.20px;top:320.80px;" width="52.20" height="8.70" viewBox="0 0 52.20 8.70" shape-rendering="crispEdges"><rect x="0.0" y="0.0" width="2.9" height="2.9" fill="#e8e7e6"/><rect x="2.9" y="0.0" width="2.9" height="2.9" fill="#f7f6f7"/><rect x="14.5" y="0.0" width="2.9" height="2.9" fill="#f2f3f4"/><rect x="20.3" y="0.0" width="2.9" height="2.9" fill="#f3f3f3"/><rect x="29.0" y="0.0" width="2.9" height="2.9" fill="#e9eaeb"/><rect x="31.9" y="0.0" width="2.9" height="2.9" fill="#f2f2f3"/><rect x="37.7" y="0.0" width="2.9" height="2.9" fill="#ecedeb"/><rect x="40.6" y="0.0" width="2.9" height="2.9" fill="#ededee"/><rect x="0.0" y="2.9" width="2.9" height="2.9" fill="#8e9d95"/><rect x="2.9" y="2.9" width="2.9" height="2.9" fill="#b9b9be"/><rect x="5.8" y="2.9" width="2.9" height="2.9" fill="#cbcdce"/><rect x="8.7" y="2.9" width="2.9" height="2.9" fill="#c2bec3"/><rect x="11.6" y="2.9" width="2.9" height="2.9" fill="#c1c2c9"/><rect x="14.5" y="2.9" width="2.9" height="2.9" fill="#c2b7c4"/><rect x="17.4" y="2.9" width="2.9" height="2.9" fill="#a0aba3"/><rect x="20.3" y="2.9" width="2.9" height="2.9" fill="#cacacc"/><rect x="23.2" y="2.9" width="2.9" height="2.9" fill="#a1a8a3"/><rect x="29.0" y="2.9" width="2.9" height="2.9" fill="#a3999b"/><rect x="31.9" y="2.9" width="2.9" height="2.9" fill="#908d9c"/><rect x="34.8" y="2.9" width="2.9" height="2.9" fill="#a5a8b2"/><rect x="37.7" y="2.9" width="2.9" height="2.9" fill="#b3bdbb"/><rect x="40.6" y="2.9" width="2.9" height="2.9" fill="#bebac2"/><rect x="43.5" y="2.9" width="2.9" height="2.9" fill="#afa7aa"/><rect x="46.4" y="2.9" width="2.9" height="2.9" fill="#bebebd"/><rect x="49.3" y="2.9" width="2.9" height="2.9" fill="#cacecf"/><rect x="0.0" y="5.8" width="2.9" height="2.9" fill="#c6c7c6"/><rect x="2.9" y="5.8" width="2.9" height="2.9" fill="#cecace"/><rect x="5.8" y="5.8" width="2.9" height="2.9" fill="#b9bdbb"/><rect x="8.7" y="5.8" width="2.9" height="2.9" fill="#a6a6a5"/><rect x="11.6" y="5.8" width="2.9" height="2.9" fill="#91a096"/><rect x="14.5" y="5.8" width="2.9" height="2.9" fill="#bdbdc4"/><rect x="17.4" y="5.8" width="2.9" height="2.9" fill="#9799a6"/><rect x="20.3" y="5.8" width="2.9" height="2.9" fill="#c7c5c9"/><rect x="23.2" y="5.8" width="2.9" height="2.9" fill="#b2b0ba"/><rect x="26.1" y="5.8" width="2.9" height="2.9" fill="#f4f3f4"/><rect x="29.0" y="5.8" width="2.9" height="2.9" fill="#c2c2c5"/><rect x="31.9" y="5.8" width="2.9" height="2.9" fill="#dbdedf"/><rect x="34.8" y="5.8" width="2.9" height="2.9" fill="#c3bebf"/><rect x="37.7" y="5.8" width="2.9" height="2.9" fill="#b0b0ba"/><rect x="40.6" y="5.8" width="2.9" height="2.9" fill="#b9c1bf"/><rect x="43.5" y="5.8" width="2.9" height="2.9" fill="#919a9e"/><rect x="46.4" y="5.8" width="2.9" height="2.9" fill="#9ba89f"/><rect x="49.3" y="5.8" width="2.9" height="2.9" fill="#c9c0c2"/></svg>
<div class="a" style="left:531.84px;top:323.00px;font-size:8.2px;line-height:8.2px;color:#2e2e2e;transform:scaleX(0.8600);transform-origin:0 0;">7</div>
<div class="a" style="left:574.69px;top:323.00px;font-size:8.2px;line-height:8.2px;color:#2e2e2e;transform:scaleX(0.8600);transform-origin:0 0;">6</div>
<div class="a" style="left:592.57px;top:323.00px;font-size:8.2px;line-height:8.2px;color:#2e2e2e;transform:scaleX(0.9011);transform-origin:0 0;">Subordinate</div>
<div class="a" style="left:757.84px;top:323.00px;font-size:8.2px;line-height:8.2px;color:#2e2e2e;transform:scaleX(0.8600);transform-origin:0 0;">7</div>
<div class="a" style="left:800.69px;top:323.00px;font-size:8.2px;line-height:8.2px;color:#2e2e2e;transform:scaleX(0.8600);transform-origin:0 0;">6</div>
<svg class="ic" style="left:818.5px;top:322.0px" width="10" height="8" viewBox="0 0 10 8"><rect x="0.7" y="0.7" width="8.4" height="6.4" fill="#fde9ee" stroke="#f28aa2" stroke-width="0.9"/><path d="M1.5 1.3L8.3 6.5M2.2 6.2L5.2 3.9M6 3.4L8 1.6" fill="none" stroke="#f07e98" stroke-width="0.9"/><circle cx="1.1" cy="1.1" r="1.05" fill="#f0557c"/><circle cx="8.7" cy="1.1" r="1.05" fill="#f0557c"/><circle cx="1.1" cy="6.7" r="1.05" fill="#f0557c"/><circle cx="8.7" cy="6.7" r="1.05" fill="#f0557c"/></svg>
<div class="a" style="left:842.57px;top:323.00px;font-size:8.2px;line-height:8.2px;color:#2e2e2e;transform:scaleX(0.9011);transform-origin:0 0;">Subordinate</div>
<div class="a" style="left:26.30px;top:334.20px;width:949.30px;height:17.1px;background:#fcfdfe;border-bottom:1px solid #e0e3e5"></div>
<div class="a" style="left:57px;top:334.20px;width:36px;height:16.10px;background:#d6fec4"></div>
<div class="a" style="left:93px;top:334.20px;width:43px;height:16.10px;background:#d6fec4"></div>
<div class="a" style="left:726px;top:334.20px;width:43px;height:16.10px;background:#d6fec4"></div>
<div class="a" style="left:769px;top:334.20px;width:43px;height:16.10px;background:#d6fec4"></div>
<svg class="ic" style="left:39.1px;top:339.1px" width="9" height="9" viewBox="0 0 9 9"><circle cx="3.6" cy="3.6" r="2.5" fill="none" stroke="#ea4b74" stroke-width="1.15"/><path d="M5.4 5.4L7.1 7.1" stroke="#ea4b74" stroke-width="1.15" stroke-linecap="round"/></svg>
<svg class="ic" style="left:71.2px;top:339.20000000000005px" width="7" height="8" viewBox="0 0 7 8"><path d="M1.75 3.6V2.6A1.75 1.75 0 0 1 5.25 2.6V3.6" fill="none" stroke="#111" stroke-width="0.95"/><rect x="0.9" y="3.3" width="5.2" height="3.1" rx="0.3" fill="#111"/></svg>
<div class="a" style="left:124.94px;top:340.00px;font-size:8.2px;line-height:8.2px;color:#2e2e2e;transform:scaleX(0.8600);transform-origin:0 0;">7</div>
<div class="a" style="left:167.12px;top:340.00px;font-size:8.2px;line-height:8.2px;color:#2e2e2e;transform:scaleX(0.8600);transform-origin:0 0;">1</div>
<svg class="ic" style="left:185.00px;top:339.60px;" width="49.30" height="8.70" viewBox="0 0 49.30 8.70" shape-rendering="crispEdges"><rect x="0.0" y="0.0" width="2.9" height="2.9" fill="#c7c9c8"/><rect x="2.9" y="0.0" width="2.9" height="2.9" fill="#c8cfcf"/><rect x="5.8" y="0.0" width="2.9" height="2.9" fill="#e1e1df"/><rect x="8.7" y="0.0" width="2.9" height="2.9" fill="#d3d8d2"/><rect x="11.6" y="0.0" width="2.9" height="2.9" fill="#f5f6f5"/><rect x="14.5" y="0.0" width="2.9" height="2.9" fill="#f5f5f6"/><rect x="17.4" y="0.0" width="2.9" height="2.9" fill="#b9b8ba"/><rect x="20.3" y="0.0" width="2.9" height="2.9" fill="#bebcc3"/><rect x="23.2" y="0.0" width="2.9" height="2.9" fill="#e0dedf"/><rect x="26.1" y="0.0" width="2.9" height="2.9" fill="#e7e9e8"/><rect x="29.0" y="0.0" width="2.9" height="2.9" fill="#ccd2d1"/><rect x="31.9" y="0.0" width="2.9" height="2.9" fill="#bbc0be"/><rect x="34.8" y="0.0" width="2.9" height="2.9" fill="#dfdcdf"/><rect x="37.7" y="0.0" width="2.9" height="2.9" fill="#dcdcd8"/><rect x="40.6" y="0.0" width="2.9" height="2.9" fill="#e8e7e8"/><rect x="43.5" y="0.0" width="2.9" height="2.9" fill="#c9cbc5"/><rect x="46.4" y="0.0" width="2.9" height="2.9" fill="#e6e7e8"/><rect x="0.0" y="2.9" width="2.9" height="2.9" fill="#b1b6b9"/><rect x="2.9" y="2.9" width="2.9" height="2.9" fill="#b6b6b4"/><rect x="5.8" y="2.9" width="2.9" height="2.9" fill="#d5ced3"/><rect x="8.7" y="2.9" width="2.9" height="2.9" fill="#d7dad5"/><rect x="11.6" y="2.9" width="2.9" height="2.9" fill="#859688"/><rect x="17.4" y="2.9" width="2.9" height="2.9" fill="#a9aaae"/><rect x="20.3" y="2.9" width="2.9" height="2.9" fill="#aaa1a3"/><rect x="23.2" y="2.9" width="2.9" height="2.9" fill="#b7bcb7"/><rect x="26.1" y="2.9" width="2.9" height="2.9" fill="#aeb2b2"/><rect x="29.0" y="2.9" width="2.9" height="2.9" fill="#afa9aa"/><rect x="31.9" y="2.9" width="2.9" height="2.9" fill="#a1aaa2"/><rect x="34.8" y="2.9" width="2.9" height="2.9" fill="#b8b9bd"/><rect x="37.7" y="2.9" width="2.9" height="2.9" fill="#929ca6"/><rect x="40.6" y="2.9" width="2.9" height="2.9" fill="#9c9ea8"/><rect x="43.5" y="2.9" width="2.9" height="2.9" fill="#bfbcb9"/><rect x="46.4" y="2.9" width="2.9" height="2.9" fill="#ebeaeb"/><rect x="0.0" y="5.8" width="2.9" height="2.9" fill="#e4e4e3"/><rect x="2.9" y="5.8" width="2.9" height="2.9" fill="#ced1d3"/><rect x="5.8" y="5.8" width="2.9" height="2.9" fill="#d7d6da"/><rect x="8.7" y="5.8" width="2.9" height="2.9" fill="#dbdedc"/><rect x="11.6" y="5.8" width="2.9" height="2.9" fill="#c3c2c8"/><rect x="17.4" y="5.8" width="2.9" height="2.9" fill="#dbd6db"/><rect x="20.3" y="5.8" width="2.9" height="2.9" fill="#d9dadf"/><rect x="23.2" y="5.8" width="2.9" height="2.9" fill="#e0e1e3"/><rect x="26.1" y="5.8" width="2.9" height="2.9" fill="#e8e6ea"/><rect x="29.0" y="5.8" width="2.9" height="2.9" fill="#cbd1d1"/><rect x="31.9" y="5.8" width="2.9" height="2.9" fill="#e3e5e3"/><rect x="34.8" y="5.8" width="2.9" height="2.9" fill="#e1e1df"/><rect x="37.7" y="5.8" width="2.9" height="2.9" fill="#dcdadb"/><rect x="40.6" y="5.8" width="2.9" height="2.9" fill="#e3e5e5"/><rect x="43.5" y="5.8" width="2.9" height="2.9" fill="#f2f2f2"/><rect x="46.4" y="5.8" width="2.9" height="2.9" fill="#e8e8eb"/></svg>
<div class="a" style="left:345.01px;top:340.00px;font-size:8.2px;line-height:8.2px;color:#2e2e2e;transform:scaleX(0.9000);transform-origin:0 0;">14</div>
<svg class="ic" style="left:367.20px;top:337.90px;" width="52.20" height="8.70" viewBox="0 0 52.20 8.70" shape-rendering="crispEdges"><rect x="0.0" y="0.0" width="2.9" height="2.9" fill="#e5e9e8"/><rect x="2.9" y="0.0" width="2.9" height="2.9" fill="#f6f7f7"/><rect x="14.5" y="0.0" width="2.9" height="2.9" fill="#f3f3f4"/><rect x="20.3" y="0.0" width="2.9" height="2.9" fill="#f2f3f2"/><rect x="29.0" y="0.0" width="2.9" height="2.9" fill="#e7e8ea"/><rect x="31.9" y="0.0" width="2.9" height="2.9" fill="#f2f2f4"/><rect x="37.7" y="0.0" width="2.9" height="2.9" fill="#ebecee"/><rect x="40.6" y="0.0" width="2.9" height="2.9" fill="#edefed"/><rect x="0.0" y="2.9" width="2.9" height="2.9" fill="#999798"/><rect x="2.9" y="2.9" width="2.9" height="2.9" fill="#c1bcba"/><rect x="5.8" y="2.9" width="2.9" height="2.9" fill="#cfcdcc"/><rect x="8.7" y="2.9" width="2.9" height="2.9" fill="#c1bfc4"/><rect x="11.6" y="2.9" width="2.9" height="2.9" fill="#c8c4c6"/><rect x="14.5" y="2.9" width="2.9" height="2.9" fill="#bdbdbc"/><rect x="17.4" y="2.9" width="2.9" height="2.9" fill="#a1a5a4"/><rect x="20.3" y="2.9" width="2.9" height="2.9" fill="#cbcdd3"/><rect x="23.2" y="2.9" width="2.9" height="2.9" fill="#a1a8ab"/><rect x="29.0" y="2.9" width="2.9" height="2.9" fill="#9b99a3"/><rect x="31.9" y="2.9" width="2.9" height="2.9" fill="#8a9494"/><rect x="34.8" y="2.9" width="2.9" height="2.9" fill="#a6aeb1"/><rect x="37.7" y="2.9" width="2.9" height="2.9" fill="#bab4c0"/><rect x="40.6" y="2.9" width="2.9" height="2.9" fill="#bac4c5"/><rect x="43.5" y="2.9" width="2.9" height="2.9" fill="#a5b0ab"/><rect x="46.4" y="2.9" width="2.9" height="2.9" fill="#b9c0c0"/><rect x="49.3" y="2.9" width="2.9" height="2.9" fill="#cfd0ce"/><rect x="0.0" y="5.8" width="2.9" height="2.9" fill="#c4c6c9"/><rect x="2.9" y="5.8" width="2.9" height="2.9" fill="#ceced3"/><rect x="5.8" y="5.8" width="2.9" height="2.9" fill="#babdb6"/><rect x="8.7" y="5.8" width="2.9" height="2.9" fill="#a4abae"/><rect x="11.6" y="5.8" width="2.9" height="2.9" fill="#92969c"/><rect x="14.5" y="5.8" width="2.9" height="2.9" fill="#c2c1c3"/><rect x="17.4" y="5.8" width="2.9" height="2.9" fill="#a09ca7"/><rect x="20.3" y="5.8" width="2.9" height="2.9" fill="#c8c5cb"/><rect x="23.2" y="5.8" width="2.9" height="2.9" fill="#b7b6bb"/><rect x="26.1" y="5.8" width="2.9" height="2.9" fill="#f4f3f5"/><rect x="29.0" y="5.8" width="2.9" height="2.9" fill="#c6c1c5"/><rect x="31.9" y="5.8" width="2.9" height="2.9" fill="#dde1de"/><rect x="34.8" y="5.8" width="2.9" height="2.9" fill="#bbbbc4"/><rect x="37.7" y="5.8" width="2.9" height="2.9" fill="#b3b6be"/><rect x="40.6" y="5.8" width="2.9" height="2.9" fill="#b7bac3"/><rect x="43.5" y="5.8" width="2.9" height="2.9" fill="#989990"/><rect x="46.4" y="5.8" width="2.9" height="2.9" fill="#999c9d"/><rect x="49.3" y="5.8" width="2.9" height="2.9" fill="#c6c5c7"/></svg>
<div class="a" style="left:531.84px;top:340.00px;font-size:8.2px;line-height:8.2px;color:#2e2e2e;transform:scaleX(0.8600);transform-origin:0 0;">7</div>
<div class="a" style="left:574.69px;top:340.00px;font-size:8.2px;line-height:8.2px;color:#2e2e2e;transform:scaleX(0.8600);transform-origin:0 0;">6</div>
<div class="a" style="left:592.57px;top:340.00px;font-size:8.2px;line-height:8.2px;color:#2e2e2e;transform:scaleX(0.9011);transform-origin:0 0;">Subordinate</div>
<div class="a" style="left:757.84px;top:340.00px;font-size:8.2px;line-height:8.2px;color:#2e2e2e;transform:scaleX(0.8600);transform-origin:0 0;">7</div>
<div class="a" style="left:800.69px;top:340.00px;font-size:8.2px;line-height:8.2px;color:#2e2e2e;transform:scaleX(0.8600);transform-origin:0 0;">6</div>
<svg class="ic" style="left:818.5px;top:339.1px" width="10" height="8" viewBox="0 0 10 8"><rect x="0.7" y="0.7" width="8.4" height="6.4" fill="#fde9ee" stroke="#f28aa2" stroke-width="0.9"/><path d="M1.5 1.3L8.3 6.5M2.2 6.2L5.2 3.9M6 3.4L8 1.6" fill="none" stroke="#f07e98" stroke-width="0.9"/><circle cx="1.1" cy="1.1" r="1.05" fill="#f0557c"/><circle cx="8.7" cy="1.1" r="1.05" fill="#f0557c"/><circle cx="1.1" cy="6.7" r="1.05" fill="#f0557c"/><circle cx="8.7" cy="6.7" r="1.05" fill="#f0557c"/></svg>
<div class="a" style="left:842.57px;top:340.00px;font-size:8.2px;line-height:8.2px;color:#2e2e2e;transform:scaleX(0.9011);transform-origin:0 0;">Subordinate</div>
<div class="a" style="left:26.30px;top:351.30px;width:949.30px;height:17.1px;background:#fff;border-bottom:1px solid #e0e3e5"></div>
<div class="a" style="left:57px;top:351.30px;width:36px;height:16.10px;background:#d6fec4"></div>
<div class="a" style="left:93px;top:351.30px;width:43px;height:16.10px;background:#d6fec4"></div>
<div class="a" style="left:726px;top:351.30px;width:43px;height:16.10px;background:#d6fec4"></div>
<div class="a" style="left:769px;top:351.30px;width:43px;height:16.10px;background:#d6fec4"></div>
<svg class="ic" style="left:39.1px;top:356.2px" width="9" height="9" viewBox="0 0 9 9"><circle cx="3.6" cy="3.6" r="2.5" fill="none" stroke="#ea4b74" stroke-width="1.15"/><path d="M5.4 5.4L7.1 7.1" stroke="#ea4b74" stroke-width="1.15" stroke-linecap="round"/></svg>
<svg class="ic" style="left:71.2px;top:356.3px" width="7" height="8" viewBox="0 0 7 8"><path d="M1.75 3.6V2.6A1.75 1.75 0 0 1 5.25 2.6V3.6" fill="none" stroke="#111" stroke-width="0.95"/><rect x="0.9" y="3.3" width="5.2" height="3.1" rx="0.3" fill="#111"/></svg>
<div class="a" style="left:124.94px;top:357.00px;font-size:8.2px;line-height:8.2px;color:#2e2e2e;transform:scaleX(0.8600);transform-origin:0 0;">7</div>
<div class="a" style="left:167.84px;top:357.00px;font-size:8.2px;line-height:8.2px;color:#2e2e2e;transform:scaleX(0.8600);transform-origin:0 0;">7</div>
<svg class="ic" style="left:185.00px;top:356.70px;" width="52.20" height="8.70" viewBox="0 0 52.20 8.70" shape-rendering="crispEdges"><rect x="0.0" y="0.0" width="2.9" height="2.9" fill="#ececed"/><rect x="2.9" y="0.0" width="2.9" height="2.9" fill="#c3cbcb"/><rect x="5.8" y="0.0" width="2.9" height="2.9" fill="#d4d7d2"/><rect x="8.7" y="0.0" width="2.9" height="2.9" fill="#e5e7e9"/><rect x="11.6" y="0.0" width="2.9" height="2.9" fill="#e5e2e3"/><rect x="14.5" y="0.0" width="2.9" height="2.9" fill="#d2d5d8"/><rect x="17.4" y="0.0" width="2.9" height="2.9" fill="#d1d5d6"/><rect x="20.3" y="0.0" width="2.9" height="2.9" fill="#e6e8e9"/><rect x="23.2" y="0.0" width="2.9" height="2.9" fill="#e3e7e6"/><rect x="26.1" y="0.0" width="2.9" height="2.9" fill="#f1f1f2"/><rect x="29.0" y="0.0" width="2.9" height="2.9" fill="#b0b0b3"/><rect x="31.9" y="0.0" width="2.9" height="2.9" fill="#d4d2d1"/><rect x="34.8" y="0.0" width="2.9" height="2.9" fill="#d0d0d1"/><rect x="37.7" y="0.0" width="2.9" height="2.9" fill="#eae8eb"/><rect x="40.6" y="0.0" width="2.9" height="2.9" fill="#dcd9da"/><rect x="43.5" y="0.0" width="2.9" height="2.9" fill="#c9d0cb"/><rect x="46.4" y="0.0" width="2.9" height="2.9" fill="#cdcdd1"/><rect x="0.0" y="2.9" width="2.9" height="2.9" fill="#eceaed"/><rect x="2.9" y="2.9" width="2.9" height="2.9" fill="#836e84"/><rect x="5.8" y="2.9" width="2.9" height="2.9" fill="#c4c3c2"/><rect x="8.7" y="2.9" width="2.9" height="2.9" fill="#b9bbba"/><rect x="11.6" y="2.9" width="2.9" height="2.9" fill="#afa8ad"/><rect x="14.5" y="2.9" width="2.9" height="2.9" fill="#b9b7c2"/><rect x="17.4" y="2.9" width="2.9" height="2.9" fill="#828378"/><rect x="20.3" y="2.9" width="2.9" height="2.9" fill="#aca5a9"/><rect x="23.2" y="2.9" width="2.9" height="2.9" fill="#babebf"/><rect x="26.1" y="2.9" width="2.9" height="2.9" fill="#eaecec"/><rect x="29.0" y="2.9" width="2.9" height="2.9" fill="#a9a8a8"/><rect x="31.9" y="2.9" width="2.9" height="2.9" fill="#9da9a5"/><rect x="34.8" y="2.9" width="2.9" height="2.9" fill="#9c969b"/><rect x="37.7" y="2.9" width="2.9" height="2.9" fill="#b2b3b1"/><rect x="40.6" y="2.9" width="2.9" height="2.9" fill="#bcbcc0"/><rect x="43.5" y="2.9" width="2.9" height="2.9" fill="#a1a1a4"/><rect x="46.4" y="2.9" width="2.9" height="2.9" fill="#a3abac"/><rect x="49.3" y="2.9" width="2.9" height="2.9" fill="#e0e1e1"/><rect x="0.0" y="5.8" width="2.9" height="2.9" fill="#d6d9d7"/><rect x="2.9" y="5.8" width="2.9" height="2.9" fill="#f1f1f0"/><rect x="5.8" y="5.8" width="2.9" height="2.9" fill="#d5d4d4"/><rect x="8.7" y="5.8" width="2.9" height="2.9" fill="#e3dfe1"/><rect x="11.6" y="5.8" width="2.9" height="2.9" fill="#dddadc"/><rect x="14.5" y="5.8" width="2.9" height="2.9" fill="#edf0ee"/><rect x="17.4" y="5.8" width="2.9" height="2.9" fill="#e0e2df"/><rect x="20.3" y="5.8" width="2.9" height="2.9" fill="#e6e7e7"/><rect x="23.2" y="5.8" width="2.9" height="2.9" fill="#e4e4e4"/><rect x="29.0" y="5.8" width="2.9" height="2.9" fill="#c8c7c7"/><rect x="31.9" y="5.8" width="2.9" height="2.9" fill="#ebebea"/><rect x="34.8" y="5.8" width="2.9" height="2.9" fill="#d5d6d6"/><rect x="37.7" y="5.8" width="2.9" height="2.9" fill="#d9d6d6"/><rect x="40.6" y="5.8" width="2.9" height="2.9" fill="#e1e2e2"/><rect x="43.5" y="5.8" width="2.9" height="2.9" fill="#e1e1e1"/><rect x="46.4" y="5.8" width="2.9" height="2.9" fill="#d0d4d5"/></svg>
<div class="a" style="left:345.01px;top:357.00px;font-size:8.2px;line-height:8.2px;color:#2e2e2e;transform:scaleX(0.9000);transform-origin:0 0;">14</div>
<svg class="ic" style="left:367.20px;top:355.00px;" width="52.20" height="8.70" viewBox="0 0 52.20 8.70" shape-rendering="crispEdges"><rect x="0.0" y="0.0" width="2.9" height="2.9" fill="#e4e8e6"/><rect x="2.9" y="0.0" width="2.9" height="2.9" fill="#f6f7f6"/><rect x="14.5" y="0.0" width="2.9" height="2.9" fill="#f4f3f3"/><rect x="20.3" y="0.0" width="2.9" height="2.9" fill="#f3f2f3"/><rect x="29.0" y="0.0" width="2.9" height="2.9" fill="#e9eae9"/><rect x="31.9" y="0.0" width="2.9" height="2.9" fill="#f3f2f3"/><rect x="37.7" y="0.0" width="2.9" height="2.9" fill="#ebecec"/><rect x="40.6" y="0.0" width="2.9" height="2.9" fill="#ecedee"/><rect x="0.0" y="2.9" width="2.9" height="2.9" fill="#939698"/><rect x="2.9" y="2.9" width="2.9" height="2.9" fill="#bdbabd"/><rect x="5.8" y="2.9" width="2.9" height="2.9" fill="#ced0cd"/><rect x="8.7" y="2.9" width="2.9" height="2.9" fill="#c0b8c0"/><rect x="11.6" y="2.9" width="2.9" height="2.9" fill="#c2c9c5"/><rect x="14.5" y="2.9" width="2.9" height="2.9" fill="#bfbac1"/><rect x="17.4" y="2.9" width="2.9" height="2.9" fill="#adaea5"/><rect x="20.3" y="2.9" width="2.9" height="2.9" fill="#cbc9d0"/><rect x="23.2" y="2.9" width="2.9" height="2.9" fill="#aaaea7"/><rect x="29.0" y="2.9" width="2.9" height="2.9" fill="#99979f"/><rect x="31.9" y="2.9" width="2.9" height="2.9" fill="#9a949d"/><rect x="34.8" y="2.9" width="2.9" height="2.9" fill="#acb0ae"/><rect x="37.7" y="2.9" width="2.9" height="2.9" fill="#beb7b6"/><rect x="40.6" y="2.9" width="2.9" height="2.9" fill="#c4bbbd"/><rect x="43.5" y="2.9" width="2.9" height="2.9" fill="#a8a2af"/><rect x="46.4" y="2.9" width="2.9" height="2.9" fill="#b9bebe"/><rect x="49.3" y="2.9" width="2.9" height="2.9" fill="#d0c9cf"/><rect x="0.0" y="5.8" width="2.9" height="2.9" fill="#c7c5c7"/><rect x="2.9" y="5.8" width="2.9" height="2.9" fill="#c9d0d1"/><rect x="5.8" y="5.8" width="2.9" height="2.9" fill="#b7b9bc"/><rect x="8.7" y="5.8" width="2.9" height="2.9" fill="#a1a1af"/><rect x="11.6" y="5.8" width="2.9" height="2.9" fill="#969099"/><rect x="14.5" y="5.8" width="2.9" height="2.9" fill="#bbbcc6"/><rect x="17.4" y="5.8" width="2.9" height="2.9" fill="#a49c9e"/><rect x="20.3" y="5.8" width="2.9" height="2.9" fill="#c2cac9"/><rect x="23.2" y="5.8" width="2.9" height="2.9" fill="#b6bbb6"/><rect x="26.1" y="5.8" width="2.9" height="2.9" fill="#f3f4f4"/><rect x="29.0" y="5.8" width="2.9" height="2.9" fill="#bfbfc3"/><rect x="31.9" y="5.8" width="2.9" height="2.9" fill="#e0dddf"/><rect x="34.8" y="5.8" width="2.9" height="2.9" fill="#bdc0c7"/><rect x="37.7" y="5.8" width="2.9" height="2.9" fill="#b2b0b4"/><rect x="40.6" y="5.8" width="2.9" height="2.9" fill="#b7b8c3"/><rect x="43.5" y="5.8" width="2.9" height="2.9" fill="#959e9c"/><rect x="46.4" y="5.8" width="2.9" height="2.9" fill="#9ea9ab"/><rect x="49.3" y="5.8" width="2.9" height="2.9" fill="#c8c5c4"/></svg>
<div class="a" style="left:531.77px;top:357.00px;font-size:8.2px;line-height:8.2px;color:#2e2e2e;transform:scaleX(0.8600);transform-origin:0 0;">5</div>
<div class="a" style="left:574.67px;top:357.00px;font-size:8.2px;line-height:8.2px;color:#2e2e2e;transform:scaleX(0.8600);transform-origin:0 0;">5</div>
<div class="a" style="left:592.54px;top:357.00px;font-size:8.2px;line-height:8.2px;color:#2e2e2e;transform:scaleX(0.8680);transform-origin:0 0;">Colleagues</div>
<div class="a" style="left:757.77px;top:357.00px;font-size:8.2px;line-height:8.2px;color:#2e2e2e;transform:scaleX(0.8600);transform-origin:0 0;">5</div>
<div class="a" style="left:800.67px;top:357.00px;font-size:8.2px;line-height:8.2px;color:#2e2e2e;transform:scaleX(0.8600);transform-origin:0 0;">5</div>
<svg class="ic" style="left:818.5px;top:356.2px" width="10" height="8" viewBox="0 0 10 8"><rect x="0.7" y="0.7" width="8.4" height="6.4" fill="#fde9ee" stroke="#f28aa2" stroke-width="0.9"/><path d="M1.5 1.3L8.3 6.5M2.2 6.2L5.2 3.9M6 3.4L8 1.6" fill="none" stroke="#f07e98" stroke-width="0.9"/><circle cx="1.1" cy="1.1" r="1.05" fill="#f0557c"/><circle cx="8.7" cy="1.1" r="1.05" fill="#f0557c"/><circle cx="1.1" cy="6.7" r="1.05" fill="#f0557c"/><circle cx="8.7" cy="6.7" r="1.05" fill="#f0557c"/></svg>
<div class="a" style="left:842.54px;top:357.00px;font-size:8.2px;line-height:8.2px;color:#2e2e2e;transform:scaleX(0.8680);transform-origin:0 0;">Colleagues</div>
<div class="a" style="left:26.30px;top:368.40px;width:949.30px;height:17.1px;background:#fcfdfe;border-bottom:1px solid #e0e3e5"></div>
<div class="a" style="left:57px;top:368.40px;width:36px;height:16.10px;background:#d6fec4"></div>
<div class="a" style="left:93px;top:368.40px;width:43px;height:16.10px;background:#d6fec4"></div>
<div class="a" style="left:726px;top:368.40px;width:43px;height:16.10px;background:#d6fec4"></div>
<div class="a" style="left:769px;top:368.40px;width:43px;height:16.10px;background:#d6fec4"></div>
<svg class="ic" style="left:39.1px;top:373.29999999999995px" width="9" height="9" viewBox="0 0 9 9"><circle cx="3.6" cy="3.6" r="2.5" fill="none" stroke="#ea4b74" stroke-width="1.15"/><path d="M5.4 5.4L7.1 7.1" stroke="#ea4b74" stroke-width="1.15" stroke-linecap="round"/></svg>
<svg class="ic" style="left:71.2px;top:373.4px" width="7" height="8" viewBox="0 0 7 8"><path d="M1.75 3.6V2.6A1.75 1.75 0 0 1 5.25 2.6V3.6" fill="none" stroke="#111" stroke-width="0.95"/><rect x="0.9" y="3.3" width="5.2" height="3.1" rx="0.3" fill="#111"/></svg>
<div class="a" style="left:124.94px;top:374.00px;font-size:8.2px;line-height:8.2px;color:#2e2e2e;transform:scaleX(0.8600);transform-origin:0 0;">7</div>
<div class="a" style="left:167.84px;top:374.00px;font-size:8.2px;line-height:8.2px;color:#2e2e2e;transform:scaleX(0.8600);transform-origin:0 0;">7</div>
<svg class="ic" style="left:185.00px;top:373.80px;" width="69.60" height="8.70" viewBox="0 0 69.60 8.70" shape-rendering="crispEdges"><rect x="0.0" y="0.0" width="2.9" height="2.9" fill="#bcc4c0"/><rect x="2.9" y="0.0" width="2.9" height="2.9" fill="#bec0bf"/><rect x="5.8" y="0.0" width="2.9" height="2.9" fill="#d7d9db"/><rect x="8.7" y="0.0" width="2.9" height="2.9" fill="#e2e0e2"/><rect x="11.6" y="0.0" width="2.9" height="2.9" fill="#dbd9da"/><rect x="14.5" y="0.0" width="2.9" height="2.9" fill="#e2e1e4"/><rect x="17.4" y="0.0" width="2.9" height="2.9" fill="#d5d7d6"/><rect x="20.3" y="0.0" width="2.9" height="2.9" fill="#d3d2d2"/><rect x="23.2" y="0.0" width="2.9" height="2.9" fill="#d8d9d7"/><rect x="26.1" y="0.0" width="2.9" height="2.9" fill="#dbd8dc"/><rect x="29.0" y="0.0" width="2.9" height="2.9" fill="#e4e7e7"/><rect x="31.9" y="0.0" width="2.9" height="2.9" fill="#bdbbbb"/><rect x="34.8" y="0.0" width="2.9" height="2.9" fill="#b8b3be"/><rect x="37.7" y="0.0" width="2.9" height="2.9" fill="#e6e3e4"/><rect x="40.6" y="0.0" width="2.9" height="2.9" fill="#d2d9d8"/><rect x="43.5" y="0.0" width="2.9" height="2.9" fill="#dbdde0"/><rect x="46.4" y="0.0" width="2.9" height="2.9" fill="#d6dad5"/><rect x="52.2" y="0.0" width="2.9" height="2.9" fill="#bfc2c4"/><rect x="55.1" y="0.0" width="2.9" height="2.9" fill="#e5e5e7"/><rect x="58.0" y="0.0" width="2.9" height="2.9" fill="#e0e0df"/><rect x="60.9" y="0.0" width="2.9" height="2.9" fill="#e0dde1"/><rect x="63.8" y="0.0" width="2.9" height="2.9" fill="#dad9da"/><rect x="0.0" y="2.9" width="2.9" height="2.9" fill="#989595"/><rect x="2.9" y="2.9" width="2.9" height="2.9" fill="#a4aaa8"/><rect x="5.8" y="2.9" width="2.9" height="2.9" fill="#85879b"/><rect x="8.7" y="2.9" width="2.9" height="2.9" fill="#c3c9c4"/><rect x="11.6" y="2.9" width="2.9" height="2.9" fill="#968c94"/><rect x="14.5" y="2.9" width="2.9" height="2.9" fill="#c6c4cb"/><rect x="17.4" y="2.9" width="2.9" height="2.9" fill="#c0c5c4"/><rect x="20.3" y="2.9" width="2.9" height="2.9" fill="#cfd3d1"/><rect x="23.2" y="2.9" width="2.9" height="2.9" fill="#b5bab5"/><rect x="26.1" y="2.9" width="2.9" height="2.9" fill="#8e8f95"/><rect x="29.0" y="2.9" width="2.9" height="2.9" fill="#9598a3"/><rect x="31.9" y="2.9" width="2.9" height="2.9" fill="#bec7c8"/><rect x="34.8" y="2.9" width="2.9" height="2.9" fill="#b1b6bc"/><rect x="37.7" y="2.9" width="2.9" height="2.9" fill="#9e9aa1"/><rect x="40.6" y="2.9" width="2.9" height="2.9" fill="#999f9a"/><rect x="43.5" y="2.9" width="2.9" height="2.9" fill="#c7cdcd"/><rect x="46.4" y="2.9" width="2.9" height="2.9" fill="#9a8f8f"/><rect x="49.3" y="2.9" width="2.9" height="2.9" fill="#e9e9ea"/><rect x="52.2" y="2.9" width="2.9" height="2.9" fill="#969592"/><rect x="55.1" y="2.9" width="2.9" height="2.9" fill="#babdc3"/><rect x="58.0" y="2.9" width="2.9" height="2.9" fill="#969191"/><rect x="60.9" y="2.9" width="2.9" height="2.9" fill="#cdc8ca"/><rect x="63.8" y="2.9" width="2.9" height="2.9" fill="#8a8b90"/><rect x="66.7" y="2.9" width="2.9" height="2.9" fill="#f1f1f2"/><rect x="0.0" y="5.8" width="2.9" height="2.9" fill="#e5e6e6"/><rect x="2.9" y="5.8" width="2.9" height="2.9" fill="#f1f2f1"/><rect x="5.8" y="5.8" width="2.9" height="2.9" fill="#d4d2d3"/><rect x="8.7" y="5.8" width="2.9" height="2.9" fill="#e9eaea"/><rect x="11.6" y="5.8" width="2.9" height="2.9" fill="#e7e5e8"/><rect x="14.5" y="5.8" width="2.9" height="2.9" fill="#e0e0e1"/><rect x="17.4" y="5.8" width="2.9" height="2.9" fill="#f1f1f1"/><rect x="23.2" y="5.8" width="2.9" height="2.9" fill="#eceeed"/><rect x="26.1" y="5.8" width="2.9" height="2.9" fill="#e1e2e4"/><rect x="29.0" y="5.8" width="2.9" height="2.9" fill="#e4e3e4"/><rect x="31.9" y="5.8" width="2.9" height="2.9" fill="#d7dbdc"/><rect x="34.8" y="5.8" width="2.9" height="2.9" fill="#edefed"/><rect x="37.7" y="5.8" width="2.9" height="2.9" fill="#dee0e1"/><rect x="40.6" y="5.8" width="2.9" height="2.9" fill="#e2e0e3"/><rect x="43.5" y="5.8" width="2.9" height="2.9" fill="#f1f1f3"/><rect x="46.4" y="5.8" width="2.9" height="2.9" fill="#e7e5e5"/><rect x="49.3" y="5.8" width="2.9" height="2.9" fill="#f2f0f0"/><rect x="55.1" y="5.8" width="2.9" height="2.9" fill="#e6e4e6"/><rect x="58.0" y="5.8" width="2.9" height="2.9" fill="#e4e6e7"/><rect x="60.9" y="5.8" width="2.9" height="2.9" fill="#f1f1f3"/><rect x="63.8" y="5.8" width="2.9" height="2.9" fill="#d3d5d6"/><rect x="66.7" y="5.8" width="2.9" height="2.9" fill="#f0f0f0"/></svg>
<div class="a" style="left:345.01px;top:374.00px;font-size:8.2px;line-height:8.2px;color:#2e2e2e;transform:scaleX(0.9000);transform-origin:0 0;">14</div>
<svg class="ic" style="left:367.20px;top:372.10px;" width="52.20" height="8.70" viewBox="0 0 52.20 8.70" shape-rendering="crispEdges"><rect x="0.0" y="0.0" width="2.9" height="2.9" fill="#e6e6e9"/><rect x="2.9" y="0.0" width="2.9" height="2.9" fill="#f7f7f7"/><rect x="14.5" y="0.0" width="2.9" height="2.9" fill="#f3f2f4"/><rect x="20.3" y="0.0" width="2.9" height="2.9" fill="#f4f4f3"/><rect x="29.0" y="0.0" width="2.9" height="2.9" fill="#e9eaeb"/><rect x="31.9" y="0.0" width="2.9" height="2.9" fill="#f2f3f2"/><rect x="37.7" y="0.0" width="2.9" height="2.9" fill="#ebecee"/><rect x="40.6" y="0.0" width="2.9" height="2.9" fill="#eeefef"/><rect x="0.0" y="2.9" width="2.9" height="2.9" fill="#90929e"/><rect x="2.9" y="2.9" width="2.9" height="2.9" fill="#b9bab9"/><rect x="5.8" y="2.9" width="2.9" height="2.9" fill="#ccd2d3"/><rect x="8.7" y="2.9" width="2.9" height="2.9" fill="#bec3c4"/><rect x="11.6" y="2.9" width="2.9" height="2.9" fill="#c9cac9"/><rect x="14.5" y="2.9" width="2.9" height="2.9" fill="#bbbebd"/><rect x="17.4" y="2.9" width="2.9" height="2.9" fill="#a6a5a5"/><rect x="20.3" y="2.9" width="2.9" height="2.9" fill="#d0cdd1"/><rect x="23.2" y="2.9" width="2.9" height="2.9" fill="#a8a0ac"/><rect x="29.0" y="2.9" width="2.9" height="2.9" fill="#a29c9a"/><rect x="31.9" y="2.9" width="2.9" height="2.9" fill="#8a8e98"/><rect x="34.8" y="2.9" width="2.9" height="2.9" fill="#b1a6b2"/><rect x="37.7" y="2.9" width="2.9" height="2.9" fill="#b3bebc"/><rect x="40.6" y="2.9" width="2.9" height="2.9" fill="#c5bdc3"/><rect x="43.5" y="2.9" width="2.9" height="2.9" fill="#a9adae"/><rect x="46.4" y="2.9" width="2.9" height="2.9" fill="#bcc1be"/><rect x="49.3" y="2.9" width="2.9" height="2.9" fill="#cecfca"/><rect x="0.0" y="5.8" width="2.9" height="2.9" fill="#cac9cc"/><rect x="2.9" y="5.8" width="2.9" height="2.9" fill="#cdc9d2"/><rect x="5.8" y="5.8" width="2.9" height="2.9" fill="#b9beb7"/><rect x="8.7" y="5.8" width="2.9" height="2.9" fill="#a0a9a1"/><rect x="11.6" y="5.8" width="2.9" height="2.9" fill="#9a949a"/><rect x="14.5" y="5.8" width="2.9" height="2.9" fill="#c0c6c3"/><rect x="17.4" y="5.8" width="2.9" height="2.9" fill="#a5a2a2"/><rect x="20.3" y="5.8" width="2.9" height="2.9" fill="#c6c0c6"/><rect x="23.2" y="5.8" width="2.9" height="2.9" fill="#b3b8bb"/><rect x="26.1" y="5.8" width="2.9" height="2.9" fill="#f4f4f5"/><rect x="29.0" y="5.8" width="2.9" height="2.9" fill="#c6c6c4"/><rect x="31.9" y="5.8" width="2.9" height="2.9" fill="#e0dee1"/><rect x="34.8" y="5.8" width="2.9" height="2.9" fill="#bfc0c0"/><rect x="37.7" y="5.8" width="2.9" height="2.9" fill="#b9b0b9"/><rect x="40.6" y="5.8" width="2.9" height="2.9" fill="#b9babe"/><rect x="43.5" y="5.8" width="2.9" height="2.9" fill="#928f92"/><rect x="46.4" y="5.8" width="2.9" height="2.9" fill="#a8a6a7"/><rect x="49.3" y="5.8" width="2.9" height="2.9" fill="#c7c7c7"/></svg>
<div class="a" style="left:531.77px;top:374.00px;font-size:8.2px;line-height:8.2px;color:#2e2e2e;transform:scaleX(0.8600);transform-origin:0 0;">5</div>
<div class="a" style="left:574.67px;top:374.00px;font-size:8.2px;line-height:8.2px;color:#2e2e2e;transform:scaleX(0.8600);transform-origin:0 0;">5</div>
<div class="a" style="left:592.54px;top:374.00px;font-size:8.2px;line-height:8.2px;color:#2e2e2e;transform:scaleX(0.8680);transform-origin:0 0;">Colleagues</div>
<div class="a" style="left:757.77px;top:374.00px;font-size:8.2px;line-height:8.2px;color:#2e2e2e;transform:scaleX(0.8600);transform-origin:0 0;">5</div>
<div class="a" style="left:800.67px;top:374.00px;font-size:8.2px;line-height:8.2px;color:#2e2e2e;transform:scaleX(0.8600);transform-origin:0 0;">5</div>
<svg class="ic" style="left:818.5px;top:373.29999999999995px" width="10" height="8" viewBox="0 0 10 8"><rect x="0.7" y="0.7" width="8.4" height="6.4" fill="#fde9ee" stroke="#f28aa2" stroke-width="0.9"/><path d="M1.5 1.3L8.3 6.5M2.2 6.2L5.2 3.9M6 3.4L8 1.6" fill="none" stroke="#f07e98" stroke-width="0.9"/><circle cx="1.1" cy="1.1" r="1.05" fill="#f0557c"/><circle cx="8.7" cy="1.1" r="1.05" fill="#f0557c"/><circle cx="1.1" cy="6.7" r="1.05" fill="#f0557c"/><circle cx="8.7" cy="6.7" r="1.05" fill="#f0557c"/></svg>
<div class="a" style="left:842.54px;top:374.00px;font-size:8.2px;line-height:8.2px;color:#2e2e2e;transform:scaleX(0.8680);transform-origin:0 0;">Colleagues</div>
<div class="a" style="left:26.30px;top:385.50px;width:949.30px;height:17.1px;background:#fff;border-bottom:1px solid #e0e3e5"></div>
<div class="a" style="left:57px;top:385.50px;width:36px;height:16.10px;background:#d6fec4"></div>
<div class="a" style="left:93px;top:385.50px;width:43px;height:16.10px;background:#d6fec4"></div>
<div class="a" style="left:726px;top:385.50px;width:43px;height:16.10px;background:#d6fec4"></div>
<div class="a" style="left:769px;top:385.50px;width:43px;height:16.10px;background:#d6fec4"></div>
<svg class="ic" style="left:39.1px;top:390.4px" width="9" height="9" viewBox="0 0 9 9"><circle cx="3.6" cy="3.6" r="2.5" fill="none" stroke="#ea4b74" stroke-width="1.15"/><path d="M5.4 5.4L7.1 7.1" stroke="#ea4b74" stroke-width="1.15" stroke-linecap="round"/></svg>
<svg class="ic" style="left:71.2px;top:390.5px" width="7" height="8" viewBox="0 0 7 8"><path d="M1.75 3.6V2.6A1.75 1.75 0 0 1 5.25 2.6V3.6" fill="none" stroke="#111" stroke-width="0.95"/><rect x="0.9" y="3.3" width="5.2" height="3.1" rx="0.3" fill="#111"/></svg>
<div class="a" style="left:124.94px;top:391.00px;font-size:8.2px;line-height:8.2px;color:#2e2e2e;transform:scaleX(0.8600);transform-origin:0 0;">7</div>
<div class="a" style="left:167.79px;top:391.00px;font-size:8.2px;line-height:8.2px;color:#2e2e2e;transform:scaleX(0.8600);transform-origin:0 0;">6</div>
<svg class="ic" style="left:185.00px;top:390.90px;" width="46.40" height="8.70" viewBox="0 0 46.40 8.70" shape-rendering="crispEdges"><rect x="0.0" y="0.0" width="2.9" height="2.9" fill="#b1b6b8"/><rect x="2.9" y="0.0" width="2.9" height="2.9" fill="#dfdbe0"/><rect x="5.8" y="0.0" width="2.9" height="2.9" fill="#cfd1d3"/><rect x="8.7" y="0.0" width="2.9" height="2.9" fill="#d8d8dc"/><rect x="11.6" y="0.0" width="2.9" height="2.9" fill="#ced0d0"/><rect x="14.5" y="0.0" width="2.9" height="2.9" fill="#c1c2ca"/><rect x="17.4" y="0.0" width="2.9" height="2.9" fill="#dadadf"/><rect x="20.3" y="0.0" width="2.9" height="2.9" fill="#f3f2f2"/><rect x="23.2" y="0.0" width="2.9" height="2.9" fill="#d4d2d4"/><rect x="26.1" y="0.0" width="2.9" height="2.9" fill="#e9e7e8"/><rect x="29.0" y="0.0" width="2.9" height="2.9" fill="#d5d6d4"/><rect x="31.9" y="0.0" width="2.9" height="2.9" fill="#dce0df"/><rect x="34.8" y="0.0" width="2.9" height="2.9" fill="#d7d9d8"/><rect x="37.7" y="0.0" width="2.9" height="2.9" fill="#e4e6e6"/><rect x="40.6" y="0.0" width="2.9" height="2.9" fill="#dadbdb"/><rect x="43.5" y="0.0" width="2.9" height="2.9" fill="#dcdadd"/><rect x="0.0" y="2.9" width="2.9" height="2.9" fill="#a297a4"/><rect x="2.9" y="2.9" width="2.9" height="2.9" fill="#d7dadc"/><rect x="5.8" y="2.9" width="2.9" height="2.9" fill="#a09ea2"/><rect x="8.7" y="2.9" width="2.9" height="2.9" fill="#b4b2b5"/><rect x="11.6" y="2.9" width="2.9" height="2.9" fill="#a6a0ad"/><rect x="14.5" y="2.9" width="2.9" height="2.9" fill="#a1a4a2"/><rect x="17.4" y="2.9" width="2.9" height="2.9" fill="#bcbcc1"/><rect x="20.3" y="2.9" width="2.9" height="2.9" fill="#b9c0c5"/><rect x="23.2" y="2.9" width="2.9" height="2.9" fill="#c0c0bc"/><rect x="26.1" y="2.9" width="2.9" height="2.9" fill="#d7d6d8"/><rect x="29.0" y="2.9" width="2.9" height="2.9" fill="#a0a7a0"/><rect x="31.9" y="2.9" width="2.9" height="2.9" fill="#c3bfc0"/><rect x="34.8" y="2.9" width="2.9" height="2.9" fill="#b7b6c1"/><rect x="37.7" y="2.9" width="2.9" height="2.9" fill="#6f6c71"/><rect x="40.6" y="2.9" width="2.9" height="2.9" fill="#bbbdb5"/><rect x="43.5" y="2.9" width="2.9" height="2.9" fill="#b9c2c0"/><rect x="0.0" y="5.8" width="2.9" height="2.9" fill="#d0ced1"/><rect x="2.9" y="5.8" width="2.9" height="2.9" fill="#dadddb"/><rect x="5.8" y="5.8" width="2.9" height="2.9" fill="#e7e8e8"/><rect x="8.7" y="5.8" width="2.9" height="2.9" fill="#eeeded"/><rect x="11.6" y="5.8" width="2.9" height="2.9" fill="#e9e9eb"/><rect x="14.5" y="5.8" width="2.9" height="2.9" fill="#e6e8e7"/><rect x="17.4" y="5.8" width="2.9" height="2.9" fill="#dedadf"/><rect x="20.3" y="5.8" width="2.9" height="2.9" fill="#f3f2f4"/><rect x="23.2" y="5.8" width="2.9" height="2.9" fill="#f4f2f3"/><rect x="26.1" y="5.8" width="2.9" height="2.9" fill="#d0d3d6"/><rect x="29.0" y="5.8" width="2.9" height="2.9" fill="#f1f0f0"/><rect x="31.9" y="5.8" width="2.9" height="2.9" fill="#f0f0f1"/><rect x="34.8" y="5.8" width="2.9" height="2.9" fill="#aba7b2"/><rect x="37.7" y="5.8" width="2.9" height="2.9" fill="#cec9ce"/><rect x="40.6" y="5.8" width="2.9" height="2.9" fill="#dcd7d8"/><rect x="43.5" y="5.8" width="2.9" height="2.9" fill="#f1f1f1"/></svg>
<div class="a" style="left:345.01px;top:391.00px;font-size:8.2px;line-height:8.2px;color:#2e2e2e;transform:scaleX(0.9000);transform-origin:0 0;">14</div>
<svg class="ic" style="left:367.20px;top:389.20px;" width="52.20" height="8.70" viewBox="0 0 52.20 8.70" shape-rendering="crispEdges"><rect x="0.0" y="0.0" width="2.9" height="2.9" fill="#e6e6e6"/><rect x="2.9" y="0.0" width="2.9" height="2.9" fill="#f6f6f7"/><rect x="14.5" y="0.0" width="2.9" height="2.9" fill="#f3f4f4"/><rect x="20.3" y="0.0" width="2.9" height="2.9" fill="#f3f3f3"/><rect x="29.0" y="0.0" width="2.9" height="2.9" fill="#e7ebeb"/><rect x="31.9" y="0.0" width="2.9" height="2.9" fill="#f2f2f4"/><rect x="37.7" y="0.0" width="2.9" height="2.9" fill="#edeced"/><rect x="40.6" y="0.0" width="2.9" height="2.9" fill="#eeefef"/><rect x="0.0" y="2.9" width="2.9" height="2.9" fill="#968b93"/><rect x="2.9" y="2.9" width="2.9" height="2.9" fill="#b6b9c3"/><rect x="5.8" y="2.9" width="2.9" height="2.9" fill="#d2d1d2"/><rect x="8.7" y="2.9" width="2.9" height="2.9" fill="#bcc2be"/><rect x="11.6" y="2.9" width="2.9" height="2.9" fill="#c7c7c9"/><rect x="14.5" y="2.9" width="2.9" height="2.9" fill="#b9bfc3"/><rect x="17.4" y="2.9" width="2.9" height="2.9" fill="#aba6b0"/><rect x="20.3" y="2.9" width="2.9" height="2.9" fill="#cfcfcb"/><rect x="23.2" y="2.9" width="2.9" height="2.9" fill="#ada6a7"/><rect x="29.0" y="2.9" width="2.9" height="2.9" fill="#a09e9e"/><rect x="31.9" y="2.9" width="2.9" height="2.9" fill="#988c91"/><rect x="34.8" y="2.9" width="2.9" height="2.9" fill="#aeada9"/><rect x="37.7" y="2.9" width="2.9" height="2.9" fill="#b3b4ba"/><rect x="40.6" y="2.9" width="2.9" height="2.9" fill="#c0c5c2"/><rect x="43.5" y="2.9" width="2.9" height="2.9" fill="#a9b0b2"/><rect x="46.4" y="2.9" width="2.9" height="2.9" fill="#b7bdc3"/><rect x="49.3" y="2.9" width="2.9" height="2.9" fill="#cacfd1"/><rect x="0.0" y="5.8" width="2.9" height="2.9" fill="#cacac8"/><rect x="2.9" y="5.8" width="2.9" height="2.9" fill="#c9cacb"/><rect x="5.8" y="5.8" width="2.9" height="2.9" fill="#bab8b6"/><rect x="8.7" y="5.8" width="2.9" height="2.9" fill="#aaaaab"/><rect x="11.6" y="5.8" width="2.9" height="2.9" fill="#9d96a0"/><rect x="14.5" y="5.8" width="2.9" height="2.9" fill="#c1c2c1"/><rect x="17.4" y="5.8" width="2.9" height="2.9" fill="#a09ea3"/><rect x="20.3" y="5.8" width="2.9" height="2.9" fill="#c5c5cb"/><rect x="23.2" y="5.8" width="2.9" height="2.9" fill="#b1afb7"/><rect x="26.1" y="5.8" width="2.9" height="2.9" fill="#f4f4f4"/><rect x="29.0" y="5.8" width="2.9" height="2.9" fill="#c4c9c2"/><rect x="31.9" y="5.8" width="2.9" height="2.9" fill="#dce1e0"/><rect x="34.8" y="5.8" width="2.9" height="2.9" fill="#c1bfc4"/><rect x="37.7" y="5.8" width="2.9" height="2.9" fill="#b5b1b5"/><rect x="40.6" y="5.8" width="2.9" height="2.9" fill="#bfb8c2"/><rect x="43.5" y="5.8" width="2.9" height="2.9" fill="#958c95"/><rect x="46.4" y="5.8" width="2.9" height="2.9" fill="#999c9f"/><rect x="49.3" y="5.8" width="2.9" height="2.9" fill="#c0c8ca"/></svg>
<div class="a" style="left:531.77px;top:391.00px;font-size:8.2px;line-height:8.2px;color:#2e2e2e;transform:scaleX(0.8600);transform-origin:0 0;">5</div>
<div class="a" style="left:574.67px;top:391.00px;font-size:8.2px;line-height:8.2px;color:#2e2e2e;transform:scaleX(0.8600);transform-origin:0 0;">5</div>
<div class="a" style="left:592.54px;top:391.00px;font-size:8.2px;line-height:8.2px;color:#2e2e2e;transform:scaleX(0.8680);transform-origin:0 0;">Colleagues</div>
<div class="a" style="left:757.77px;top:391.00px;font-size:8.2px;line-height:8.2px;color:#2e2e2e;transform:scaleX(0.8600);transform-origin:0 0;">5</div>
<div class="a" style="left:800.67px;top:391.00px;font-size:8.2px;line-height:8.2px;color:#2e2e2e;transform:scaleX(0.8600);transform-origin:0 0;">5</div>
<svg class="ic" style="left:818.5px;top:390.4px" width="10" height="8" viewBox="0 0 10 8"><rect x="0.7" y="0.7" width="8.4" height="6.4" fill="#fde9ee" stroke="#f28aa2" stroke-width="0.9"/><path d="M1.5 1.3L8.3 6.5M2.2 6.2L5.2 3.9M6 3.4L8 1.6" fill="none" stroke="#f07e98" stroke-width="0.9"/><circle cx="1.1" cy="1.1" r="1.05" fill="#f0557c"/><circle cx="8.7" cy="1.1" r="1.05" fill="#f0557c"/><circle cx="1.1" cy="6.7" r="1.05" fill="#f0557c"/><circle cx="8.7" cy="6.7" r="1.05" fill="#f0557c"/></svg>
<div class="a" style="left:842.54px;top:391.00px;font-size:8.2px;line-height:8.2px;color:#2e2e2e;transform:scaleX(0.8680);transform-origin:0 0;">Colleagues</div>
<div class="a" style="left:26.30px;top:402.60px;width:949.30px;height:17.1px;background:#fcfdfe;border-bottom:1px solid #e0e3e5"></div>
<div class="a" style="left:57px;top:402.60px;width:36px;height:16.10px;background:#d6fec4"></div>
<div class="a" style="left:93px;top:402.60px;width:43px;height:16.10px;background:#d6fec4"></div>
<div class="a" style="left:726px;top:402.60px;width:43px;height:16.10px;background:#d6fec4"></div>
<div class="a" style="left:769px;top:402.60px;width:43px;height:16.10px;background:#d6fec4"></div>
<svg class="ic" style="left:39.1px;top:407.5px" width="9" height="9" viewBox="0 0 9 9"><circle cx="3.6" cy="3.6" r="2.5" fill="none" stroke="#ea4b74" stroke-width="1.15"/><path d="M5.4 5.4L7.1 7.1" stroke="#ea4b74" stroke-width="1.15" stroke-linecap="round"/></svg>
<svg class="ic" style="left:71.2px;top:407.6px" width="7" height="8" viewBox="0 0 7 8"><path d="M1.75 3.6V2.6A1.75 1.75 0 0 1 5.25 2.6V3.6" fill="none" stroke="#111" stroke-width="0.95"/><rect x="0.9" y="3.3" width="5.2" height="3.1" rx="0.3" fill="#111"/></svg>
<div class="a" style="left:124.94px;top:408.00px;font-size:8.2px;line-height:8.2px;color:#2e2e2e;transform:scaleX(0.8600);transform-origin:0 0;">7</div>
<div class="a" style="left:167.68px;top:408.00px;font-size:8.2px;line-height:8.2px;color:#2e2e2e;transform:scaleX(0.8600);transform-origin:0 0;">4</div>
<svg class="ic" style="left:185.00px;top:408.00px;" width="46.40" height="8.70" viewBox="0 0 46.40 8.70" shape-rendering="crispEdges"><rect x="0.0" y="0.0" width="2.9" height="2.9" fill="#b5b8bf"/><rect x="2.9" y="0.0" width="2.9" height="2.9" fill="#d6d7d8"/><rect x="5.8" y="0.0" width="2.9" height="2.9" fill="#d6d9d7"/><rect x="8.7" y="0.0" width="2.9" height="2.9" fill="#b1abb8"/><rect x="11.6" y="0.0" width="2.9" height="2.9" fill="#f6f6f6"/><rect x="14.5" y="0.0" width="2.9" height="2.9" fill="#b9b9be"/><rect x="17.4" y="0.0" width="2.9" height="2.9" fill="#dddbdc"/><rect x="20.3" y="0.0" width="2.9" height="2.9" fill="#d7d4d9"/><rect x="23.2" y="0.0" width="2.9" height="2.9" fill="#e0e0df"/><rect x="26.1" y="0.0" width="2.9" height="2.9" fill="#d3d4d6"/><rect x="29.0" y="0.0" width="2.9" height="2.9" fill="#e2e3e4"/><rect x="31.9" y="0.0" width="2.9" height="2.9" fill="#d4d8d9"/><rect x="34.8" y="0.0" width="2.9" height="2.9" fill="#c9c3c9"/><rect x="37.7" y="0.0" width="2.9" height="2.9" fill="#dbdadb"/><rect x="40.6" y="0.0" width="2.9" height="2.9" fill="#e7e6e8"/><rect x="43.5" y="0.0" width="2.9" height="2.9" fill="#d8dbdc"/><rect x="0.0" y="2.9" width="2.9" height="2.9" fill="#aaacac"/><rect x="2.9" y="2.9" width="2.9" height="2.9" fill="#8c8a98"/><rect x="5.8" y="2.9" width="2.9" height="2.9" fill="#a4a9a9"/><rect x="8.7" y="2.9" width="2.9" height="2.9" fill="#9da39c"/><rect x="11.6" y="2.9" width="2.9" height="2.9" fill="#f4f5f5"/><rect x="14.5" y="2.9" width="2.9" height="2.9" fill="#9fa9a6"/><rect x="17.4" y="2.9" width="2.9" height="2.9" fill="#b8b6bd"/><rect x="20.3" y="2.9" width="2.9" height="2.9" fill="#c5c0c2"/><rect x="23.2" y="2.9" width="2.9" height="2.9" fill="#a8a1a4"/><rect x="26.1" y="2.9" width="2.9" height="2.9" fill="#acb5ba"/><rect x="29.0" y="2.9" width="2.9" height="2.9" fill="#b2a9b5"/><rect x="31.9" y="2.9" width="2.9" height="2.9" fill="#989da0"/><rect x="34.8" y="2.9" width="2.9" height="2.9" fill="#a9a9ac"/><rect x="37.7" y="2.9" width="2.9" height="2.9" fill="#aeb5ad"/><rect x="40.6" y="2.9" width="2.9" height="2.9" fill="#929e98"/><rect x="43.5" y="2.9" width="2.9" height="2.9" fill="#b2b7ad"/><rect x="0.0" y="5.8" width="2.9" height="2.9" fill="#f3f1f3"/><rect x="2.9" y="5.8" width="2.9" height="2.9" fill="#e8e9ea"/><rect x="5.8" y="5.8" width="2.9" height="2.9" fill="#d2d3d8"/><rect x="8.7" y="5.8" width="2.9" height="2.9" fill="#e7e5e8"/><rect x="14.5" y="5.8" width="2.9" height="2.9" fill="#cbced4"/><rect x="17.4" y="5.8" width="2.9" height="2.9" fill="#dbdada"/><rect x="20.3" y="5.8" width="2.9" height="2.9" fill="#f3f2f1"/><rect x="23.2" y="5.8" width="2.9" height="2.9" fill="#e9e9e9"/><rect x="26.1" y="5.8" width="2.9" height="2.9" fill="#eeeeee"/><rect x="29.0" y="5.8" width="2.9" height="2.9" fill="#f2f2f1"/><rect x="31.9" y="5.8" width="2.9" height="2.9" fill="#d6d7d8"/><rect x="34.8" y="5.8" width="2.9" height="2.9" fill="#e9eaea"/><rect x="37.7" y="5.8" width="2.9" height="2.9" fill="#ededed"/><rect x="40.6" y="5.8" width="2.9" height="2.9" fill="#eeeeef"/><rect x="43.5" y="5.8" width="2.9" height="2.9" fill="#d4d7d6"/></svg>
<div class="a" style="left:345.01px;top:408.00px;font-size:8.2px;line-height:8.2px;color:#2e2e2e;transform:scaleX(0.9000);transform-origin:0 0;">14</div>
<svg class="ic" style="left:367.20px;top:406.30px;" width="52.20" height="8.70" viewBox="0 0 52.20 8.70" shape-rendering="crispEdges"><rect x="0.0" y="0.0" width="2.9" height="2.9" fill="#e7e5e7"/><rect x="2.9" y="0.0" width="2.9" height="2.9" fill="#f6f6f7"/><rect x="14.5" y="0.0" width="2.9" height="2.9" fill="#f2f3f4"/><rect x="20.3" y="0.0" width="2.9" height="2.9" fill="#f3f2f3"/><rect x="29.0" y="0.0" width="2.9" height="2.9" fill="#e9e8e9"/><rect x="31.9" y="0.0" width="2.9" height="2.9" fill="#f1f2f2"/><rect x="37.7" y="0.0" width="2.9" height="2.9" fill="#ecebee"/><rect x="40.6" y="0.0" width="2.9" height="2.9" fill="#eeeeef"/><rect x="0.0" y="2.9" width="2.9" height="2.9" fill="#94969c"/><rect x="2.9" y="2.9" width="2.9" height="2.9" fill="#c0bbbc"/><rect x="5.8" y="2.9" width="2.9" height="2.9" fill="#cfced3"/><rect x="8.7" y="2.9" width="2.9" height="2.9" fill="#bfbcc3"/><rect x="11.6" y="2.9" width="2.9" height="2.9" fill="#c1c5c4"/><rect x="14.5" y="2.9" width="2.9" height="2.9" fill="#c0b9c2"/><rect x="17.4" y="2.9" width="2.9" height="2.9" fill="#aca2a6"/><rect x="20.3" y="2.9" width="2.9" height="2.9" fill="#d0cecd"/><rect x="23.2" y="2.9" width="2.9" height="2.9" fill="#a6a3a6"/><rect x="29.0" y="2.9" width="2.9" height="2.9" fill="#99a5a5"/><rect x="31.9" y="2.9" width="2.9" height="2.9" fill="#8a8f97"/><rect x="34.8" y="2.9" width="2.9" height="2.9" fill="#a5a9b2"/><rect x="37.7" y="2.9" width="2.9" height="2.9" fill="#b5b7b5"/><rect x="40.6" y="2.9" width="2.9" height="2.9" fill="#babdbc"/><rect x="43.5" y="2.9" width="2.9" height="2.9" fill="#a4a9b0"/><rect x="46.4" y="2.9" width="2.9" height="2.9" fill="#bcc0bf"/><rect x="49.3" y="2.9" width="2.9" height="2.9" fill="#cdcbcb"/><rect x="0.0" y="5.8" width="2.9" height="2.9" fill="#c8c7c8"/><rect x="2.9" y="5.8" width="2.9" height="2.9" fill="#ceced2"/><rect x="5.8" y="5.8" width="2.9" height="2.9" fill="#b4b6c0"/><rect x="8.7" y="5.8" width="2.9" height="2.9" fill="#9ca3a0"/><rect x="11.6" y="5.8" width="2.9" height="2.9" fill="#9b9995"/><rect x="14.5" y="5.8" width="2.9" height="2.9" fill="#c2c3bf"/><rect x="17.4" y="5.8" width="2.9" height="2.9" fill="#9da1a3"/><rect x="20.3" y="5.8" width="2.9" height="2.9" fill="#c7c2c6"/><rect x="23.2" y="5.8" width="2.9" height="2.9" fill="#bab9b3"/><rect x="26.1" y="5.8" width="2.9" height="2.9" fill="#f5f4f5"/><rect x="29.0" y="5.8" width="2.9" height="2.9" fill="#bfbfc3"/><rect x="31.9" y="5.8" width="2.9" height="2.9" fill="#dddfe0"/><rect x="34.8" y="5.8" width="2.9" height="2.9" fill="#c4bec2"/><rect x="37.7" y="5.8" width="2.9" height="2.9" fill="#bab0be"/><rect x="40.6" y="5.8" width="2.9" height="2.9" fill="#b8bdba"/><rect x="43.5" y="5.8" width="2.9" height="2.9" fill="#928e96"/><rect x="46.4" y="5.8" width="2.9" height="2.9" fill="#9fa9a8"/><rect x="49.3" y="5.8" width="2.9" height="2.9" fill="#bfbfc7"/></svg>
<div class="a" style="left:531.77px;top:408.00px;font-size:8.2px;line-height:8.2px;color:#2e2e2e;transform:scaleX(0.8600);transform-origin:0 0;">5</div>
<div class="a" style="left:574.67px;top:408.00px;font-size:8.2px;line-height:8.2px;color:#2e2e2e;transform:scaleX(0.8600);transform-origin:0 0;">5</div>
<div class="a" style="left:592.54px;top:408.00px;font-size:8.2px;line-height:8.2px;color:#2e2e2e;transform:scaleX(0.8680);transform-origin:0 0;">Colleagues</div>
<div class="a" style="left:757.77px;top:408.00px;font-size:8.2px;line-height:8.2px;color:#2e2e2e;transform:scaleX(0.8600);transform-origin:0 0;">5</div>
<div class="a" style="left:800.67px;top:408.00px;font-size:8.2px;line-height:8.2px;color:#2e2e2e;transform:scaleX(0.8600);transform-origin:0 0;">5</div>
<svg class="ic" style="left:818.5px;top:407.5px" width="10" height="8" viewBox="0 0 10 8"><rect x="0.7" y="0.7" width="8.4" height="6.4" fill="#fde9ee" stroke="#f28aa2" stroke-width="0.9"/><path d="M1.5 1.3L8.3 6.5M2.2 6.2L5.2 3.9M6 3.4L8 1.6" fill="none" stroke="#f07e98" stroke-width="0.9"/><circle cx="1.1" cy="1.1" r="1.05" fill="#f0557c"/><circle cx="8.7" cy="1.1" r="1.05" fill="#f0557c"/><circle cx="1.1" cy="6.7" r="1.05" fill="#f0557c"/><circle cx="8.7" cy="6.7" r="1.05" fill="#f0557c"/></svg>
<div class="a" style="left:842.54px;top:408.00px;font-size:8.2px;line-height:8.2px;color:#2e2e2e;transform:scaleX(0.8680);transform-origin:0 0;">Colleagues</div>
<div class="a" style="left:26.30px;top:419.70px;width:949.30px;height:17.1px;background:#fff;border-bottom:1px solid #e0e3e5"></div>
<div class="a" style="left:57px;top:419.70px;width:36px;height:16.10px;background:#d6fec4"></div>
<div class="a" style="left:93px;top:419.70px;width:43px;height:16.10px;background:#d6fec4"></div>
<div class="a" style="left:726px;top:419.70px;width:43px;height:16.10px;background:#d6fec4"></div>
<div class="a" style="left:769px;top:419.70px;width:43px;height:16.10px;background:#d6fec4"></div>
<svg class="ic" style="left:39.1px;top:424.6px" width="9" height="9" viewBox="0 0 9 9"><circle cx="3.6" cy="3.6" r="2.5" fill="none" stroke="#ea4b74" stroke-width="1.15"/><path d="M5.4 5.4L7.1 7.1" stroke="#ea4b74" stroke-width="1.15" stroke-linecap="round"/></svg>
<svg class="ic" style="left:71.2px;top:424.70000000000005px" width="7" height="8" viewBox="0 0 7 8"><path d="M1.75 3.6V2.6A1.75 1.75 0 0 1 5.25 2.6V3.6" fill="none" stroke="#111" stroke-width="0.95"/><rect x="0.9" y="3.3" width="5.2" height="3.1" rx="0.3" fill="#111"/></svg>
<div class="a" style="left:124.94px;top:426.00px;font-size:8.2px;line-height:8.2px;color:#2e2e2e;transform:scaleX(0.8600);transform-origin:0 0;">7</div>
<div class="a" style="left:167.79px;top:426.00px;font-size:8.2px;line-height:8.2px;color:#2e2e2e;transform:scaleX(0.8600);transform-origin:0 0;">6</div>
<svg class="ic" style="left:185.00px;top:425.10px;" width="55.10" height="8.70" viewBox="0 0 55.10 8.70" shape-rendering="crispEdges"><rect x="0.0" y="0.0" width="2.9" height="2.9" fill="#acb1b2"/><rect x="2.9" y="0.0" width="2.9" height="2.9" fill="#dcd8da"/><rect x="5.8" y="0.0" width="2.9" height="2.9" fill="#dbdedc"/><rect x="8.7" y="0.0" width="2.9" height="2.9" fill="#dfdbdf"/><rect x="11.6" y="0.0" width="2.9" height="2.9" fill="#dcdcda"/><rect x="14.5" y="0.0" width="2.9" height="2.9" fill="#bac3c7"/><rect x="17.4" y="0.0" width="2.9" height="2.9" fill="#eeedef"/><rect x="20.3" y="0.0" width="2.9" height="2.9" fill="#dddbde"/><rect x="23.2" y="0.0" width="2.9" height="2.9" fill="#d6d8da"/><rect x="29.0" y="0.0" width="2.9" height="2.9" fill="#acb7bb"/><rect x="31.9" y="0.0" width="2.9" height="2.9" fill="#bfc1ba"/><rect x="34.8" y="0.0" width="2.9" height="2.9" fill="#b6bfbf"/><rect x="37.7" y="0.0" width="2.9" height="2.9" fill="#e1dfe2"/><rect x="40.6" y="0.0" width="2.9" height="2.9" fill="#b2b0af"/><rect x="43.5" y="0.0" width="2.9" height="2.9" fill="#dddcdc"/><rect x="46.4" y="0.0" width="2.9" height="2.9" fill="#e2e3e0"/><rect x="49.3" y="0.0" width="2.9" height="2.9" fill="#cfd2d2"/><rect x="0.0" y="2.9" width="2.9" height="2.9" fill="#a19f9f"/><rect x="2.9" y="2.9" width="2.9" height="2.9" fill="#b3b0ab"/><rect x="5.8" y="2.9" width="2.9" height="2.9" fill="#c8cccc"/><rect x="8.7" y="2.9" width="2.9" height="2.9" fill="#aca0a6"/><rect x="11.6" y="2.9" width="2.9" height="2.9" fill="#bcc2c5"/><rect x="14.5" y="2.9" width="2.9" height="2.9" fill="#8c8193"/><rect x="17.4" y="2.9" width="2.9" height="2.9" fill="#acb1bc"/><rect x="20.3" y="2.9" width="2.9" height="2.9" fill="#8c798b"/><rect x="23.2" y="2.9" width="2.9" height="2.9" fill="#aeb4b2"/><rect x="29.0" y="2.9" width="2.9" height="2.9" fill="#989fa3"/><rect x="31.9" y="2.9" width="2.9" height="2.9" fill="#c6c7c7"/><rect x="34.8" y="2.9" width="2.9" height="2.9" fill="#b0a8b3"/><rect x="37.7" y="2.9" width="2.9" height="2.9" fill="#b0b1aa"/><rect x="40.6" y="2.9" width="2.9" height="2.9" fill="#89928b"/><rect x="43.5" y="2.9" width="2.9" height="2.9" fill="#bfbab9"/><rect x="46.4" y="2.9" width="2.9" height="2.9" fill="#9fa096"/><rect x="49.3" y="2.9" width="2.9" height="2.9" fill="#b2aeb6"/><rect x="52.2" y="2.9" width="2.9" height="2.9" fill="#ececee"/><rect x="0.0" y="5.8" width="2.9" height="2.9" fill="#f0f0ef"/><rect x="2.9" y="5.8" width="2.9" height="2.9" fill="#f1f1f0"/><rect x="5.8" y="5.8" width="2.9" height="2.9" fill="#eaebed"/><rect x="8.7" y="5.8" width="2.9" height="2.9" fill="#d6d8d5"/><rect x="11.6" y="5.8" width="2.9" height="2.9" fill="#f0f0f0"/><rect x="14.5" y="5.8" width="2.9" height="2.9" fill="#e2e0e5"/><rect x="17.4" y="5.8" width="2.9" height="2.9" fill="#edeeed"/><rect x="20.3" y="5.8" width="2.9" height="2.9" fill="#e8ecea"/><rect x="23.2" y="5.8" width="2.9" height="2.9" fill="#d7d5d9"/><rect x="29.0" y="5.8" width="2.9" height="2.9" fill="#f0f1f0"/><rect x="34.8" y="5.8" width="2.9" height="2.9" fill="#eaeaed"/><rect x="37.7" y="5.8" width="2.9" height="2.9" fill="#ebebed"/><rect x="40.6" y="5.8" width="2.9" height="2.9" fill="#e1e3e3"/><rect x="43.5" y="5.8" width="2.9" height="2.9" fill="#bab8c1"/><rect x="46.4" y="5.8" width="2.9" height="2.9" fill="#ccc8cb"/><rect x="49.3" y="5.8" width="2.9" height="2.9" fill="#c9c1c7"/></svg>
<div class="a" style="left:345.01px;top:426.00px;font-size:8.2px;line-height:8.2px;color:#2e2e2e;transform:scaleX(0.9000);transform-origin:0 0;">14</div>
<svg class="ic" style="left:367.20px;top:423.40px;" width="52.20" height="8.70" viewBox="0 0 52.20 8.70" shape-rendering="crispEdges"><rect x="0.0" y="0.0" width="2.9" height="2.9" fill="#e8e5e6"/><rect x="2.9" y="0.0" width="2.9" height="2.9" fill="#f6f6f7"/><rect x="14.5" y="0.0" width="2.9" height="2.9" fill="#f2f4f4"/><rect x="20.3" y="0.0" width="2.9" height="2.9" fill="#f3f3f4"/><rect x="29.0" y="0.0" width="2.9" height="2.9" fill="#eae9eb"/><rect x="31.9" y="0.0" width="2.9" height="2.9" fill="#f2f3f3"/><rect x="37.7" y="0.0" width="2.9" height="2.9" fill="#ecedec"/><rect x="40.6" y="0.0" width="2.9" height="2.9" fill="#ededee"/><rect x="0.0" y="2.9" width="2.9" height="2.9" fill="#979791"/><rect x="2.9" y="2.9" width="2.9" height="2.9" fill="#bfc0bd"/><rect x="5.8" y="2.9" width="2.9" height="2.9" fill="#cfd1d0"/><rect x="8.7" y="2.9" width="2.9" height="2.9" fill="#bfb8bf"/><rect x="11.6" y="2.9" width="2.9" height="2.9" fill="#c5c3cb"/><rect x="14.5" y="2.9" width="2.9" height="2.9" fill="#b7bcba"/><rect x="17.4" y="2.9" width="2.9" height="2.9" fill="#a6ada7"/><rect x="20.3" y="2.9" width="2.9" height="2.9" fill="#d0cacb"/><rect x="23.2" y="2.9" width="2.9" height="2.9" fill="#abaaae"/><rect x="29.0" y="2.9" width="2.9" height="2.9" fill="#9f9ea8"/><rect x="31.9" y="2.9" width="2.9" height="2.9" fill="#8f939a"/><rect x="34.8" y="2.9" width="2.9" height="2.9" fill="#abafb1"/><rect x="37.7" y="2.9" width="2.9" height="2.9" fill="#b7bebd"/><rect x="40.6" y="2.9" width="2.9" height="2.9" fill="#c4c4c0"/><rect x="43.5" y="2.9" width="2.9" height="2.9" fill="#aba3a7"/><rect x="46.4" y="2.9" width="2.9" height="2.9" fill="#bdbebb"/><rect x="49.3" y="2.9" width="2.9" height="2.9" fill="#d0c8cd"/><rect x="0.0" y="5.8" width="2.9" height="2.9" fill="#c3c6cd"/><rect x="2.9" y="5.8" width="2.9" height="2.9" fill="#cbcdcf"/><rect x="5.8" y="5.8" width="2.9" height="2.9" fill="#bdbfbb"/><rect x="8.7" y="5.8" width="2.9" height="2.9" fill="#a5a9ad"/><rect x="11.6" y="5.8" width="2.9" height="2.9" fill="#91959f"/><rect x="14.5" y="5.8" width="2.9" height="2.9" fill="#bdc0c8"/><rect x="17.4" y="5.8" width="2.9" height="2.9" fill="#a7a4a3"/><rect x="20.3" y="5.8" width="2.9" height="2.9" fill="#c5c1cc"/><rect x="23.2" y="5.8" width="2.9" height="2.9" fill="#bab9bc"/><rect x="26.1" y="5.8" width="2.9" height="2.9" fill="#f4f5f3"/><rect x="29.0" y="5.8" width="2.9" height="2.9" fill="#bfc0c3"/><rect x="31.9" y="5.8" width="2.9" height="2.9" fill="#dbdfdd"/><rect x="34.8" y="5.8" width="2.9" height="2.9" fill="#bfbec7"/><rect x="37.7" y="5.8" width="2.9" height="2.9" fill="#b5b7b9"/><rect x="40.6" y="5.8" width="2.9" height="2.9" fill="#bbb8c1"/><rect x="43.5" y="5.8" width="2.9" height="2.9" fill="#999891"/><rect x="46.4" y="5.8" width="2.9" height="2.9" fill="#a29ea1"/><rect x="49.3" y="5.8" width="2.9" height="2.9" fill="#c5c5c5"/></svg>
<div class="a" style="left:531.82px;top:426.00px;font-size:8.2px;line-height:8.2px;color:#2e2e2e;transform:scaleX(0.8600);transform-origin:0 0;">1</div>
<div class="a" style="left:574.72px;top:426.00px;font-size:8.2px;line-height:8.2px;color:#2e2e2e;transform:scaleX(0.8600);transform-origin:0 0;">1</div>
<div class="a" style="left:592.58px;top:426.00px;font-size:8.2px;line-height:8.2px;color:#2e2e2e;transform:scaleX(0.8578);transform-origin:0 0;">Self-Assessment</div>
<div class="a" style="left:757.82px;top:426.00px;font-size:8.2px;line-height:8.2px;color:#2e2e2e;transform:scaleX(0.8600);transform-origin:0 0;">1</div>
<div class="a" style="left:800.72px;top:426.00px;font-size:8.2px;line-height:8.2px;color:#2e2e2e;transform:scaleX(0.8600);transform-origin:0 0;">1</div>
<svg class="ic" style="left:818.5px;top:424.6px" width="10" height="8" viewBox="0 0 10 8"><rect x="0.7" y="0.7" width="8.4" height="6.4" fill="#fde9ee" stroke="#f28aa2" stroke-width="0.9"/><path d="M1.5 1.3L8.3 6.5M2.2 6.2L5.2 3.9M6 3.4L8 1.6" fill="none" stroke="#f07e98" stroke-width="0.9"/><circle cx="1.1" cy="1.1" r="1.05" fill="#f0557c"/><circle cx="8.7" cy="1.1" r="1.05" fill="#f0557c"/><circle cx="1.1" cy="6.7" r="1.05" fill="#f0557c"/><circle cx="8.7" cy="6.7" r="1.05" fill="#f0557c"/></svg>
<div class="a" style="left:842.58px;top:426.00px;font-size:8.2px;line-height:8.2px;color:#2e2e2e;transform:scaleX(0.8578);transform-origin:0 0;">Self-Assessment</div>
<div class="a" style="left:26.30px;top:436.80px;width:949.30px;height:17.1px;background:#fcfdfe;border-bottom:1px solid #e0e3e5"></div>
<div class="a" style="left:57px;top:436.80px;width:36px;height:16.10px;background:#d6fec4"></div>
<div class="a" style="left:93px;top:436.80px;width:43px;height:16.10px;background:#d6fec4"></div>
<div class="a" style="left:726px;top:436.80px;width:43px;height:16.10px;background:#d6fec4"></div>
<div class="a" style="left:769px;top:436.80px;width:43px;height:16.10px;background:#d6fec4"></div>
<svg class="ic" style="left:39.1px;top:441.7px" width="9" height="9" viewBox="0 0 9 9"><circle cx="3.6" cy="3.6" r="2.5" fill="none" stroke="#ea4b74" stroke-width="1.15"/><path d="M5.4 5.4L7.1 7.1" stroke="#ea4b74" stroke-width="1.15" stroke-linecap="round"/></svg>
<svg class="ic" style="left:71.2px;top:441.8px" width="7" height="8" viewBox="0 0 7 8"><path d="M1.75 3.6V2.6A1.75 1.75 0 0 1 5.25 2.6V3.6" fill="none" stroke="#111" stroke-width="0.95"/><rect x="0.9" y="3.3" width="5.2" height="3.1" rx="0.3" fill="#111"/></svg>
<div class="a" style="left:124.94px;top:443.00px;font-size:8.2px;line-height:8.2px;color:#2e2e2e;transform:scaleX(0.8600);transform-origin:0 0;">7</div>
<div class="a" style="left:167.79px;top:443.00px;font-size:8.2px;line-height:8.2px;color:#2e2e2e;transform:scaleX(0.8600);transform-origin:0 0;">3</div>
<svg class="ic" style="left:185.00px;top:442.20px;" width="52.20" height="8.70" viewBox="0 0 52.20 8.70" shape-rendering="crispEdges"><rect x="0.0" y="0.0" width="2.9" height="2.9" fill="#d6d9d9"/><rect x="2.9" y="0.0" width="2.9" height="2.9" fill="#c3c3c9"/><rect x="5.8" y="0.0" width="2.9" height="2.9" fill="#babdc1"/><rect x="8.7" y="0.0" width="2.9" height="2.9" fill="#d8d6dd"/><rect x="11.6" y="0.0" width="2.9" height="2.9" fill="#e5e3e5"/><rect x="14.5" y="0.0" width="2.9" height="2.9" fill="#c8c7c1"/><rect x="17.4" y="0.0" width="2.9" height="2.9" fill="#d8d8dd"/><rect x="20.3" y="0.0" width="2.9" height="2.9" fill="#dddada"/><rect x="23.2" y="0.0" width="2.9" height="2.9" fill="#ded9dc"/><rect x="26.1" y="0.0" width="2.9" height="2.9" fill="#e1e4e2"/><rect x="29.0" y="0.0" width="2.9" height="2.9" fill="#e2e2e0"/><rect x="31.9" y="0.0" width="2.9" height="2.9" fill="#e8e7e7"/><rect x="34.8" y="0.0" width="2.9" height="2.9" fill="#c1bebc"/><rect x="37.7" y="0.0" width="2.9" height="2.9" fill="#cacbce"/><rect x="40.6" y="0.0" width="2.9" height="2.9" fill="#e4e4e3"/><rect x="43.5" y="0.0" width="2.9" height="2.9" fill="#d2d5d5"/><rect x="46.4" y="0.0" width="2.9" height="2.9" fill="#e1e4e5"/><rect x="49.3" y="0.0" width="2.9" height="2.9" fill="#d9dbdc"/><rect x="0.0" y="2.9" width="2.9" height="2.9" fill="#a09fa7"/><rect x="2.9" y="2.9" width="2.9" height="2.9" fill="#a69b9f"/><rect x="5.8" y="2.9" width="2.9" height="2.9" fill="#b9b0bc"/><rect x="8.7" y="2.9" width="2.9" height="2.9" fill="#9aa1aa"/><rect x="11.6" y="2.9" width="2.9" height="2.9" fill="#aeb2bb"/><rect x="14.5" y="2.9" width="2.9" height="2.9" fill="#9b9ba6"/><rect x="17.4" y="2.9" width="2.9" height="2.9" fill="#9f9995"/><rect x="20.3" y="2.9" width="2.9" height="2.9" fill="#c3bdbf"/><rect x="23.2" y="2.9" width="2.9" height="2.9" fill="#b1b9ba"/><rect x="26.1" y="2.9" width="2.9" height="2.9" fill="#8b868a"/><rect x="29.0" y="2.9" width="2.9" height="2.9" fill="#a9aaac"/><rect x="31.9" y="2.9" width="2.9" height="2.9" fill="#e5e8e8"/><rect x="34.8" y="2.9" width="2.9" height="2.9" fill="#cfcccb"/><rect x="37.7" y="2.9" width="2.9" height="2.9" fill="#c9c8c6"/><rect x="40.6" y="2.9" width="2.9" height="2.9" fill="#9ea5ae"/><rect x="43.5" y="2.9" width="2.9" height="2.9" fill="#a0a4a6"/><rect x="46.4" y="2.9" width="2.9" height="2.9" fill="#a8a9a7"/><rect x="49.3" y="2.9" width="2.9" height="2.9" fill="#9da4a9"/><rect x="0.0" y="5.8" width="2.9" height="2.9" fill="#e9ecec"/><rect x="2.9" y="5.8" width="2.9" height="2.9" fill="#ececec"/><rect x="5.8" y="5.8" width="2.9" height="2.9" fill="#f2f1f3"/><rect x="8.7" y="5.8" width="2.9" height="2.9" fill="#dbd9d8"/><rect x="11.6" y="5.8" width="2.9" height="2.9" fill="#e1e0e2"/><rect x="14.5" y="5.8" width="2.9" height="2.9" fill="#e0e0e1"/><rect x="17.4" y="5.8" width="2.9" height="2.9" fill="#e7e8e6"/><rect x="20.3" y="5.8" width="2.9" height="2.9" fill="#f0f1f1"/><rect x="23.2" y="5.8" width="2.9" height="2.9" fill="#a5a9a5"/><rect x="26.1" y="5.8" width="2.9" height="2.9" fill="#d0d1d9"/><rect x="29.0" y="5.8" width="2.9" height="2.9" fill="#e1e0df"/><rect x="34.8" y="5.8" width="2.9" height="2.9" fill="#f3f3f4"/><rect x="37.7" y="5.8" width="2.9" height="2.9" fill="#e7e6e6"/><rect x="40.6" y="5.8" width="2.9" height="2.9" fill="#dddadd"/><rect x="43.5" y="5.8" width="2.9" height="2.9" fill="#eae9eb"/><rect x="46.4" y="5.8" width="2.9" height="2.9" fill="#c8bfc1"/><rect x="49.3" y="5.8" width="2.9" height="2.9" fill="#cfd1d4"/></svg>
<div class="a" style="left:345.01px;top:443.00px;font-size:8.2px;line-height:8.2px;color:#2e2e2e;transform:scaleX(0.9000);transform-origin:0 0;">14</div>
<svg class="ic" style="left:367.20px;top:440.50px;" width="52.20" height="8.70" viewBox="0 0 52.20 8.70" shape-rendering="crispEdges"><rect x="0.0" y="0.0" width="2.9" height="2.9" fill="#e8e7e7"/><rect x="2.9" y="0.0" width="2.9" height="2.9" fill="#f6f6f7"/><rect x="14.5" y="0.0" width="2.9" height="2.9" fill="#f4f3f3"/><rect x="20.3" y="0.0" width="2.9" height="2.9" fill="#f3f2f3"/><rect x="29.0" y="0.0" width="2.9" height="2.9" fill="#e7e9e9"/><rect x="31.9" y="0.0" width="2.9" height="2.9" fill="#f2f3f2"/><rect x="37.7" y="0.0" width="2.9" height="2.9" fill="#eceded"/><rect x="40.6" y="0.0" width="2.9" height="2.9" fill="#eeeeef"/><rect x="0.0" y="2.9" width="2.9" height="2.9" fill="#8b8e96"/><rect x="2.9" y="2.9" width="2.9" height="2.9" fill="#c0c1bb"/><rect x="5.8" y="2.9" width="2.9" height="2.9" fill="#cecfd0"/><rect x="8.7" y="2.9" width="2.9" height="2.9" fill="#c2c1c1"/><rect x="11.6" y="2.9" width="2.9" height="2.9" fill="#c3c2cc"/><rect x="14.5" y="2.9" width="2.9" height="2.9" fill="#bfbac1"/><rect x="17.4" y="2.9" width="2.9" height="2.9" fill="#a3ada6"/><rect x="20.3" y="2.9" width="2.9" height="2.9" fill="#cac9ce"/><rect x="23.2" y="2.9" width="2.9" height="2.9" fill="#aaa5a7"/><rect x="29.0" y="2.9" width="2.9" height="2.9" fill="#a3a49a"/><rect x="31.9" y="2.9" width="2.9" height="2.9" fill="#98968d"/><rect x="34.8" y="2.9" width="2.9" height="2.9" fill="#abadaa"/><rect x="37.7" y="2.9" width="2.9" height="2.9" fill="#bdb3bd"/><rect x="40.6" y="2.9" width="2.9" height="2.9" fill="#bbbebc"/><rect x="43.5" y="2.9" width="2.9" height="2.9" fill="#abadaf"/><rect x="46.4" y="2.9" width="2.9" height="2.9" fill="#bec0c1"/><rect x="49.3" y="2.9" width="2.9" height="2.9" fill="#cecdcf"/><rect x="0.0" y="5.8" width="2.9" height="2.9" fill="#cacaca"/><rect x="2.9" y="5.8" width="2.9" height="2.9" fill="#c9cfcf"/><rect x="5.8" y="5.8" width="2.9" height="2.9" fill="#bbb6be"/><rect x="8.7" y="5.8" width="2.9" height="2.9" fill="#aaa8a3"/><rect x="11.6" y="5.8" width="2.9" height="2.9" fill="#989f9d"/><rect x="14.5" y="5.8" width="2.9" height="2.9" fill="#bec2bf"/><rect x="17.4" y="5.8" width="2.9" height="2.9" fill="#a2a6a2"/><rect x="20.3" y="5.8" width="2.9" height="2.9" fill="#c3cac9"/><rect x="23.2" y="5.8" width="2.9" height="2.9" fill="#b2b2b9"/><rect x="26.1" y="5.8" width="2.9" height="2.9" fill="#f3f4f4"/><rect x="29.0" y="5.8" width="2.9" height="2.9" fill="#c2c1c9"/><rect x="31.9" y="5.8" width="2.9" height="2.9" fill="#dddce2"/><rect x="34.8" y="5.8" width="2.9" height="2.9" fill="#c1c2c4"/><rect x="37.7" y="5.8" width="2.9" height="2.9" fill="#b0bbba"/><rect x="40.6" y="5.8" width="2.9" height="2.9" fill="#b6bfbf"/><rect x="43.5" y="5.8" width="2.9" height="2.9" fill="#8c8ea1"/><rect x="46.4" y="5.8" width="2.9" height="2.9" fill="#9ea39e"/><rect x="49.3" y="5.8" width="2.9" height="2.9" fill="#c4c7c5"/></svg>
<div class="a" style="left:531.77px;top:443.00px;font-size:8.2px;line-height:8.2px;color:#2e2e2e;transform:scaleX(0.8600);transform-origin:0 0;">5</div>
<div class="a" style="left:574.67px;top:443.00px;font-size:8.2px;line-height:8.2px;color:#2e2e2e;transform:scaleX(0.8600);transform-origin:0 0;">5</div>
<div class="a" style="left:592.54px;top:443.00px;font-size:8.2px;line-height:8.2px;color:#2e2e2e;transform:scaleX(0.8680);transform-origin:0 0;">Colleagues</div>
<div class="a" style="left:757.77px;top:443.00px;font-size:8.2px;line-height:8.2px;color:#2e2e2e;transform:scaleX(0.8600);transform-origin:0 0;">5</div>
<div class="a" style="left:800.67px;top:443.00px;font-size:8.2px;line-height:8.2px;color:#2e2e2e;transform:scaleX(0.8600);transform-origin:0 0;">5</div>
<svg class="ic" style="left:818.5px;top:441.7px" width="10" height="8" viewBox="0 0 10 8"><rect x="0.7" y="0.7" width="8.4" height="6.4" fill="#fde9ee" stroke="#f28aa2" stroke-width="0.9"/><path d="M1.5 1.3L8.3 6.5M2.2 6.2L5.2 3.9M6 3.4L8 1.6" fill="none" stroke="#f07e98" stroke-width="0.9"/><circle cx="1.1" cy="1.1" r="1.05" fill="#f0557c"/><circle cx="8.7" cy="1.1" r="1.05" fill="#f0557c"/><circle cx="1.1" cy="6.7" r="1.05" fill="#f0557c"/><circle cx="8.7" cy="6.7" r="1.05" fill="#f0557c"/></svg>
<div class="a" style="left:842.54px;top:443.00px;font-size:8.2px;line-height:8.2px;color:#2e2e2e;transform:scaleX(0.8680);transform-origin:0 0;">Colleagues</div>
<div class="a" style="left:360.2px;top:266.20px;width:141px;height:16.50px;border:1px solid #4ea8ee"></div>
<div class="a" style="left:835.25px;top:480.00px;font-size:8.0px;line-height:8.0px;color:#979ca2;transform:scaleX(0.9162);transform-origin:0 0;">1 to 14 of 14</div>
<svg class="ic" style="left:887.8px;top:480.2px" width="7" height="7" viewBox="0 0 7 7"><path d="M0.8 0.6V6.2M5.4 0.6L2.6 3.4L5.4 6.2" fill="none" stroke="#cdd1d6" stroke-width="0.85"/></svg>
<svg class="ic" style="left:900px;top:480.2px" width="6" height="7" viewBox="0 0 6 7"><path d="M4.4 0.6L1.6 3.4L4.4 6.2" fill="none" stroke="#cdd1d6" stroke-width="0.85"/></svg>
<div class="a" style="left:909.01px;top:480.00px;font-size:8.0px;line-height:8.0px;color:#979ca2;transform:scaleX(0.8877);transform-origin:0 0;">Page 1 of 1</div>
<svg class="ic" style="left:950.3px;top:480.2px" width="6" height="7" viewBox="0 0 6 7"><path d="M1.2 0.6L4 3.4L1.2 6.2" fill="none" stroke="#cdd1d6" stroke-width="0.85"/></svg>
<svg class="ic" style="left:960.8px;top:480.2px" width="7" height="7" viewBox="0 0 7 7"><path d="M1.2 0.6L4 3.4L1.2 6.2M5.8 0.6V6.2" fill="none" stroke="#cdd1d6" stroke-width="0.85"/></svg>
</body></html>
